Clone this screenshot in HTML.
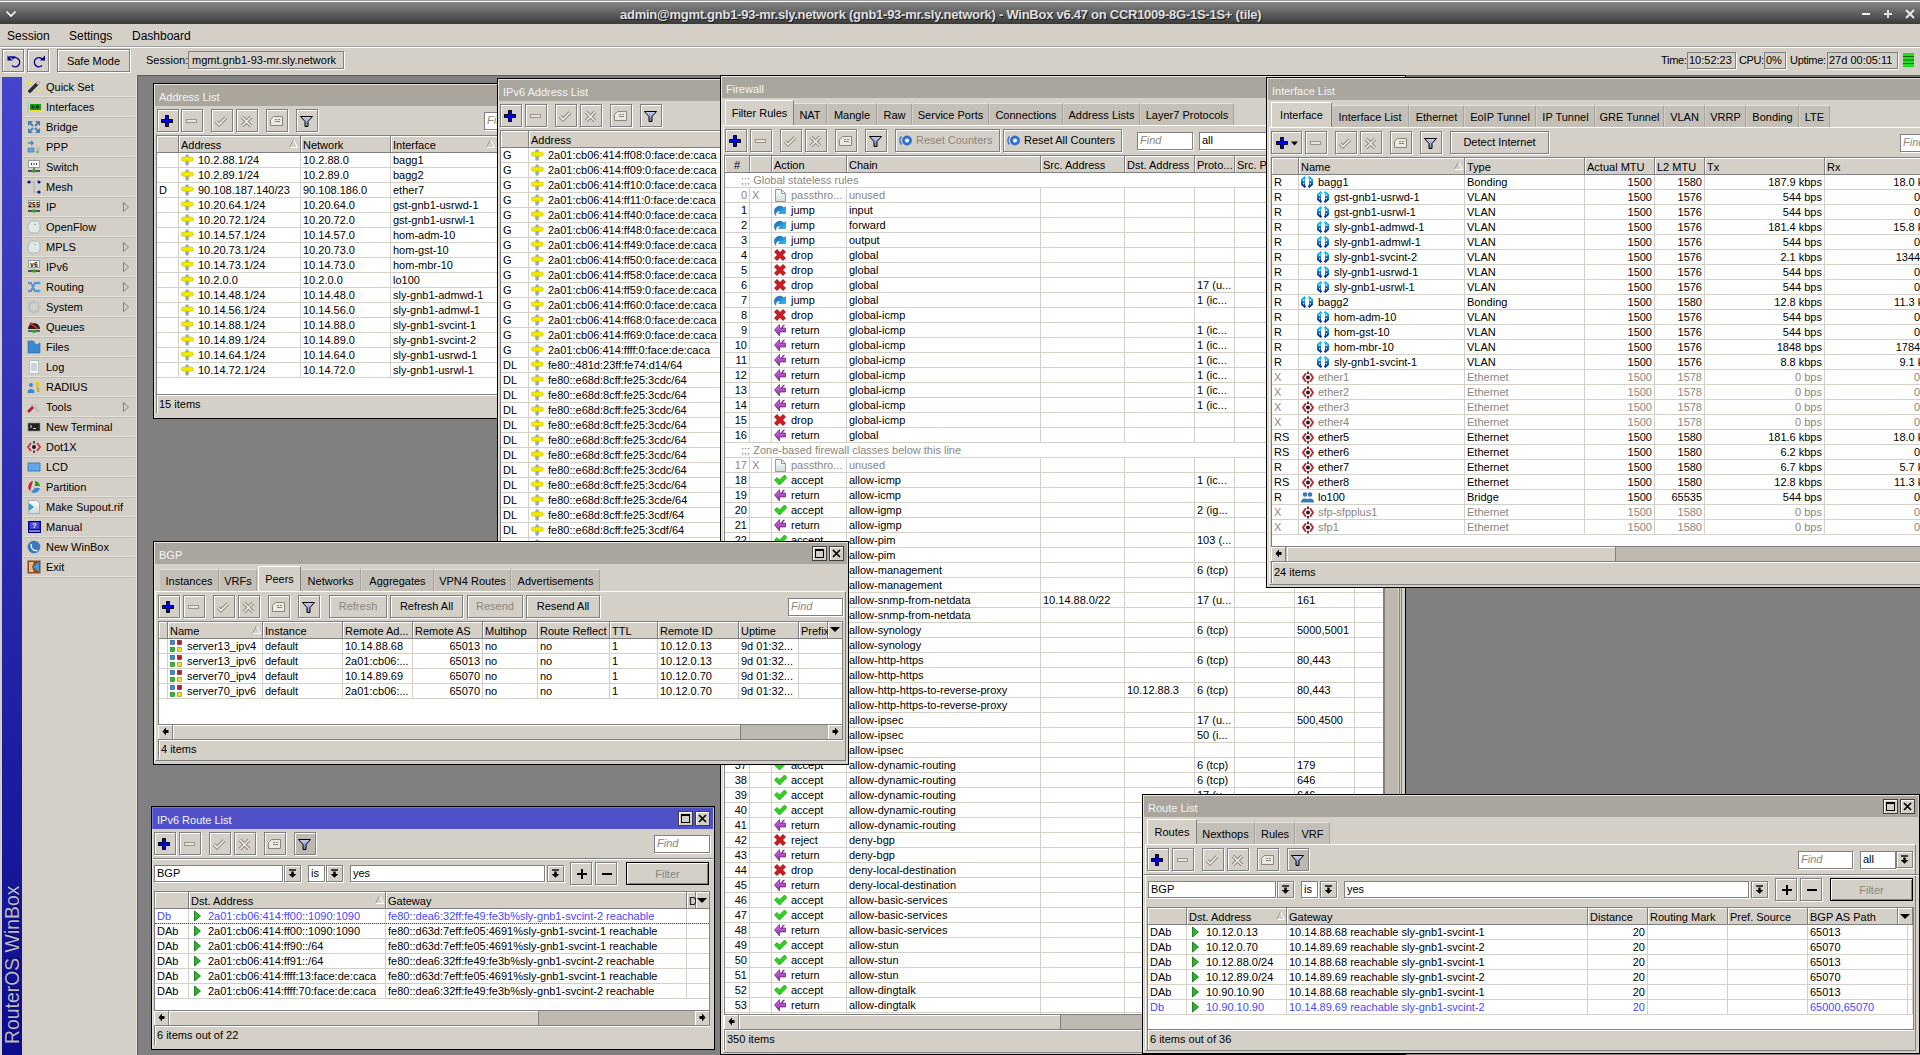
<!DOCTYPE html><html><head><meta charset="utf-8"><style>
html,body{margin:0;padding:0;width:1920px;height:1055px;overflow:hidden;background:#808080;font-family:"Liberation Sans",sans-serif;font-size:11px;color:#000}
div{position:absolute;box-sizing:border-box}
.t{white-space:nowrap;line-height:15px}
.win{background:#d4d0c8;border:1px solid #000;overflow:hidden;box-shadow:inset 1px 1px 0 #e8e4dc}
.lv{background:#fff;overflow:hidden;border-left:1px solid #808080;border-top:1px solid #808080;border-right:1px solid #808080}
</style></head><body><svg width="0" height="0" style="position:absolute"><defs>
<linearGradient id="gBond" x1="0" y1="0" x2="0" y2="1"><stop offset="0" stop-color="#20c8ff"/><stop offset="1" stop-color="#002a90"/></linearGradient>
<linearGradient id="gJump" x1="0" y1="0" x2="1" y2="1"><stop offset="0" stop-color="#1a60b0"/><stop offset="1" stop-color="#30c8ff"/></linearGradient>
<linearGradient id="gRet" x1="0" y1="0" x2="0" y2="1"><stop offset="0" stop-color="#e070e8"/><stop offset="1" stop-color="#8030a0"/></linearGradient>
<linearGradient id="gPage" x1="0" y1="0" x2="0" y2="1"><stop offset="0" stop-color="#ffffff"/><stop offset="1" stop-color="#d0d8d8"/></linearGradient>
<linearGradient id="gFunnel" x1="0" y1="0" x2="0" y2="1"><stop offset="0" stop-color="#c8d0f0"/><stop offset="1" stop-color="#7080b0"/></linearGradient>
</defs></svg><div style="left:0px;top:0px;width:1920px;height:24px;background:linear-gradient(#8a8a8a,#3a3a3a);border-top:1px solid #9a9a9a;box-shadow:inset 0 1px 0 #fff"></div>
<svg style="position:absolute;left:5px;top:9px" width="12" height="10" viewBox="0 0 12 10"><path d="M1.5 2.5l4.5 4.5 4.5-4.5" stroke="#fff" stroke-width="1.6" fill="none"/></svg>
<div class="t" style="left:620px;top:7px;font-size:13px;font-weight:bold;color:#e0e0e0;text-shadow:1px 1px 0 #1a1a1a;letter-spacing:-0.26px">admin@mgmt.gnb1-93-mr.sly.network (gnb1-93-mr.sly.network) - WinBox v6.47 on CCR1009-8G-1S-1S+ (tile)</div>
<svg style="position:absolute;left:1860px;top:8px" width="60" height="12" viewBox="0 0 60 12"><path d="M2 6h8" stroke="#f0f0f0" stroke-width="2"/><path d="M24 6h8M28 2v8" stroke="#e0e0e0" stroke-width="2"/><path d="M46 2l8 8M54 2l-8 8" stroke="#e8e8e8" stroke-width="2"/></svg>
<div style="left:0px;top:24px;width:1920px;height:23px;background:#d4d0c8;border-bottom:1px solid #a0a0a0;box-shadow:0 1px 0 #fff"></div>
<div class="t" style="left:7px;top:29px;font-size:12px">Session</div>
<div class="t" style="left:69px;top:29px;font-size:12px">Settings</div>
<div class="t" style="left:132px;top:29px;font-size:12px">Dashboard</div>
<div style="left:0px;top:48px;width:1920px;height:27px;background:#d4d0c8"></div>
<div style="left:2px;top:49px;width:22px;height:23px;border:1px solid #808080;box-shadow:inset 1px 1px 0 #fff,1px 1px 0 #fff;background:#d4d0c8;"><svg style="position:absolute;left:3px;top:4px" width="16" height="14" viewBox="0 0 16 14"><path d="M3 3l5 0-2 2a4.5 4.5 0 1 1 0 6.5" stroke="#000090" stroke-width="1.4" fill="none"/><path d="M1.5 1.5v5h5z" fill="#000090"/></svg></div>
<div style="left:27px;top:49px;width:22px;height:23px;border:1px solid #808080;box-shadow:inset 1px 1px 0 #fff,1px 1px 0 #fff;background:#d4d0c8;"><svg style="position:absolute;left:3px;top:4px" width="16" height="14" viewBox="0 0 16 14"><path d="M11 5a4.5 4.5 0 1 0 0 6.5" stroke="#000090" stroke-width="1.4" fill="none"/><path d="M14 1.5v5h-5z" fill="#000090"/></svg></div>
<div style="left:57px;top:49px;width:73px;height:23px;border:1px solid #808080;box-shadow:inset 1px 1px 0 #fff,1px 1px 0 #fff;background:#d4d0c8;"><div class="t" style="left:0px;top:4px;width:71px;text-align:center">Safe Mode</div></div>
<div class="t" style="left:146px;top:53px;">Session:</div>
<div style="left:188px;top:51px;width:156px;height:18px;border:1px solid #808080;box-shadow:1px 1px 0 #fff"><div class="t" style="left:3px;top:1px;">mgmt.gnb1-93-mr.sly.network</div></div>
<div class="t" style="left:1661px;top:53px;letter-spacing:-0.3px">Time:</div>
<div style="left:1687px;top:52px;width:49px;height:17px;border:1px solid #808080;box-shadow:1px 1px 0 #fff"><div class="t" style="left:1px;top:0px;">10:52:23</div></div>
<div class="t" style="left:1739px;top:53px;letter-spacing:-0.4px">CPU:</div>
<div style="left:1764px;top:52px;width:22px;height:17px;border:1px solid #808080;box-shadow:1px 1px 0 #fff"><div class="t" style="left:1px;top:0px;">0%</div></div>
<div class="t" style="left:1790px;top:53px;letter-spacing:-0.3px">Uptime:</div>
<div style="left:1827px;top:52px;width:71px;height:17px;border:1px solid #808080;box-shadow:1px 1px 0 #fff"><div class="t" style="left:1px;top:0px;">27d 00:05:11</div></div>
<svg style="position:absolute;left:1903px;top:53px" width="11" height="14" viewBox="0 0 11 14"><rect x="0" y="0" width="11" height="14" fill="#20e020"/><path d="M0 3.5h11M0 7h11M0 10.5h11" stroke="#106010" stroke-width="1"/></svg>
<div style="left:138px;top:75px;width:1782px;height:1px;background:#5a5a5a"></div>
<div style="left:0px;top:75px;width:138px;height:980px;background:#d4d0c8;border-right:1px solid #5a5a5a;box-shadow:inset -1px 0 0 #e4e0d8"></div>
<div style="left:2px;top:77px;width:20px;height:978px;background:linear-gradient(#4444cc,#0c0c8c)"></div>
<div class="t" style="left:-67px;top:955px;width:158px;height:20px;transform:rotate(-90deg);font-size:19.4px;line-height:20px;color:#b8b8c8;text-shadow:1px 1px 0 #000050;text-align:left">RouterOS WinBox</div>
<div style="left:24px;top:96px;width:111px;height:2px;border-top:1px solid #e4e0d8;border-bottom:1px solid #c0bcb4"></div>
<svg style="position:absolute;left:27px;top:80px" width="14" height="14" viewBox="0 0 14 14"><path d="M3 13l-2-2 8-8 2 2z" fill="#303030" stroke="#101010" stroke-width="0.6"/><path d="M9 3l2-2 2 2-2 2z" fill="#d0d0d0" stroke="#808080" stroke-width="0.5"/><path d="M3 0.5l0.7 1.6 1.6 0.7-1.6 0.7-0.7 1.6-0.7-1.6-1.6-0.7 1.6-0.7z" fill="#f0f020"/><circle cx="11" cy="10.5" r="1" fill="#f0f020"/></svg>
<div class="t" style="left:46px;top:80px;">Quick Set</div>
<div style="left:24px;top:116px;width:111px;height:2px;border-top:1px solid #e4e0d8;border-bottom:1px solid #c0bcb4"></div>
<svg style="position:absolute;left:27px;top:100px" width="14" height="14" viewBox="0 0 14 14"><rect x="0.5" y="1" width="1.2" height="12" fill="#a8c0c0"/><rect x="3" y="4" width="11" height="6" fill="#10a010"/><rect x="4.5" y="5.5" width="3" height="3" fill="#303040"/><rect x="9" y="5.5" width="3" height="3" fill="#303040"/><path d="M3 10.5h11" stroke="#e0e020" stroke-dasharray="1 1"/></svg>
<div class="t" style="left:46px;top:100px;">Interfaces</div>
<div style="left:24px;top:136px;width:111px;height:2px;border-top:1px solid #e4e0d8;border-bottom:1px solid #c0bcb4"></div>
<svg style="position:absolute;left:27px;top:120px" width="14" height="14" viewBox="0 0 14 14"><g fill="#4a80b0"><path d="M1 1h5l-5 5z M13 1v5l-5-5z M1 13v-5l5 5z M13 13h-5l5-5z"/></g><path d="M3 3l3 3M11 3l-3 3M3 11l3-3M11 11l-3-3" stroke="#4a80b0" stroke-width="2"/></svg>
<div class="t" style="left:46px;top:120px;">Bridge</div>
<div style="left:24px;top:156px;width:111px;height:2px;border-top:1px solid #e4e0d8;border-bottom:1px solid #c0bcb4"></div>
<svg style="position:absolute;left:27px;top:140px" width="14" height="14" viewBox="0 0 14 14"><path d="M1 3h5M4 1l2 2-2 2" stroke="#4a88c0" stroke-width="1.5" fill="none"/><rect x="1" y="8" width="6" height="4" fill="#60a8e0" stroke="#3070b0" stroke-width="0.6"/><path d="M9 8h4M9 10h4M9 12h3" stroke="#b0b0b0"/><path d="M9 12h3" stroke="#20b020"/></svg>
<div class="t" style="left:46px;top:140px;">PPP</div>
<div style="left:24px;top:176px;width:111px;height:2px;border-top:1px solid #e4e0d8;border-bottom:1px solid #c0bcb4"></div>
<svg style="position:absolute;left:27px;top:160px" width="14" height="14" viewBox="0 0 14 14"><rect x="1.5" y="0.5" width="11" height="7" fill="#f8f8f8" stroke="#90a0a0"/><path d="M4 4h1M6.5 4h1M9 4h1" stroke="#000" stroke-width="1.4"/><path d="M7 7.5v3" stroke="#202020"/><path d="M1 11h12" stroke="#202020" stroke-width="1.4"/><circle cx="7" cy="11" r="1.8" fill="#20b020"/></svg>
<div class="t" style="left:46px;top:160px;">Switch</div>
<div style="left:24px;top:196px;width:111px;height:2px;border-top:1px solid #e4e0d8;border-bottom:1px solid #c0bcb4"></div>
<svg style="position:absolute;left:27px;top:180px" width="14" height="14" viewBox="0 0 14 14"><path d="M2 2h5v10h5" stroke="#a8b8b8" stroke-width="1.5" fill="none"/><circle cx="2" cy="2" r="1.6" fill="#101090"/><circle cx="12" cy="2" r="1.6" fill="#101090"/><circle cx="12" cy="12" r="1.6" fill="#101090"/></svg>
<div class="t" style="left:46px;top:180px;">Mesh</div>
<div style="left:24px;top:216px;width:111px;height:2px;border-top:1px solid #e4e0d8;border-bottom:1px solid #c0bcb4"></div>
<svg style="position:absolute;left:27px;top:200px" width="14" height="14" viewBox="0 0 14 14"><rect x="1.5" y="0.5" width="11" height="7" fill="#f8f8f8" stroke="#90a0a0"/><text x="7" y="6.5" font-size="6.5" text-anchor="middle" font-family="Liberation Mono" font-weight="bold" fill="#000">255</text><path d="M1 11h12" stroke="#202020" stroke-width="1.4"/><circle cx="7" cy="11" r="1.8" fill="#20b020"/></svg>
<div class="t" style="left:46px;top:200px;">IP</div>
<svg style="position:absolute;left:122px;top:201px" width="8" height="12" viewBox="0 0 8 12"><path d="M1.5 1.5l5 4.5-5 4.5z" fill="none" stroke="#808080"/></svg>
<div style="left:24px;top:236px;width:111px;height:2px;border-top:1px solid #e4e0d8;border-bottom:1px solid #c0bcb4"></div>
<svg style="position:absolute;left:27px;top:220px" width="14" height="14" viewBox="0 0 14 14"><path d="M4 1h7l2 3v6l-3 3H4l-3-3V5z" fill="#e0e8e8" stroke="#a8b8b8"/><circle cx="8" cy="4.5" r="0.8" fill="#a0a0a0"/></svg>
<div class="t" style="left:46px;top:220px;">OpenFlow</div>
<div style="left:24px;top:256px;width:111px;height:2px;border-top:1px solid #e4e0d8;border-bottom:1px solid #c0bcb4"></div>
<svg style="position:absolute;left:27px;top:240px" width="14" height="14" viewBox="0 0 14 14"><path d="M4 1h7l2 3v6l-3 3H4l-3-3V5z" fill="#e0e8e8" stroke="#a8b8b8"/><circle cx="8" cy="4.5" r="0.8" fill="#a0a0a0"/></svg>
<div class="t" style="left:46px;top:240px;">MPLS</div>
<svg style="position:absolute;left:122px;top:241px" width="8" height="12" viewBox="0 0 8 12"><path d="M1.5 1.5l5 4.5-5 4.5z" fill="none" stroke="#808080"/></svg>
<div style="left:24px;top:276px;width:111px;height:2px;border-top:1px solid #e4e0d8;border-bottom:1px solid #c0bcb4"></div>
<svg style="position:absolute;left:27px;top:260px" width="14" height="14" viewBox="0 0 14 14"><rect x="1.5" y="0.5" width="11" height="7" fill="#f8f8f8" stroke="#90a0a0"/><text x="7" y="6.5" font-size="6.5" text-anchor="middle" font-family="Liberation Mono" font-weight="bold" fill="#000">v6</text><path d="M1 11h12" stroke="#202020" stroke-width="1.4"/><circle cx="7" cy="11" r="1.8" fill="#20b020"/></svg>
<div class="t" style="left:46px;top:260px;">IPv6</div>
<svg style="position:absolute;left:122px;top:261px" width="8" height="12" viewBox="0 0 8 12"><path d="M1.5 1.5l5 4.5-5 4.5z" fill="none" stroke="#808080"/></svg>
<div style="left:24px;top:296px;width:111px;height:2px;border-top:1px solid #e4e0d8;border-bottom:1px solid #c0bcb4"></div>
<svg style="position:absolute;left:27px;top:280px" width="14" height="14" viewBox="0 0 14 14"><path d="M1 11h3l4-8h4M1 3h3l4 8h4" stroke="#5a90d0" stroke-width="1.8" fill="none"/><path d="M11 1l3 2-3 2zM11 9l3 2-3 2z" fill="#40a8f0"/></svg>
<div class="t" style="left:46px;top:280px;">Routing</div>
<svg style="position:absolute;left:122px;top:281px" width="8" height="12" viewBox="0 0 8 12"><path d="M1.5 1.5l5 4.5-5 4.5z" fill="none" stroke="#808080"/></svg>
<div style="left:24px;top:316px;width:111px;height:2px;border-top:1px solid #e4e0d8;border-bottom:1px solid #c0bcb4"></div>
<svg style="position:absolute;left:27px;top:300px" width="14" height="14" viewBox="0 0 14 14"><circle cx="7" cy="7" r="5" fill="none" stroke="#b8c4c4" stroke-width="2.5"/><path d="M7 0v3M7 11v3M0 7h3M11 7h3M2 2l2 2M10 10l2 2M12 2l-2 2M2 12l2-2" stroke="#b8c4c4" stroke-width="2"/></svg>
<div class="t" style="left:46px;top:300px;">System</div>
<svg style="position:absolute;left:122px;top:301px" width="8" height="12" viewBox="0 0 8 12"><path d="M1.5 1.5l5 4.5-5 4.5z" fill="none" stroke="#808080"/></svg>
<div style="left:24px;top:336px;width:111px;height:2px;border-top:1px solid #e4e0d8;border-bottom:1px solid #c0bcb4"></div>
<svg style="position:absolute;left:27px;top:320px" width="14" height="14" viewBox="0 0 14 14"><path d="M1 9a6 6 0 0 1 12 0z" fill="#202020"/><path d="M3 3l8 6" stroke="#d02020" stroke-width="2"/><path d="M1 11h12" stroke="#202020" stroke-width="1.2"/><circle cx="7" cy="11.5" r="1.8" fill="#20b020"/></svg>
<div class="t" style="left:46px;top:320px;">Queues</div>
<div style="left:24px;top:356px;width:111px;height:2px;border-top:1px solid #e4e0d8;border-bottom:1px solid #c0bcb4"></div>
<svg style="position:absolute;left:27px;top:340px" width="14" height="14" viewBox="0 0 14 14"><path d="M1 1h5l2 2h5v10H1z" fill="#3a88d0" stroke="#2a68a8" stroke-width="0.6"/><path d="M8 3h4" stroke="#fff"/></svg>
<div class="t" style="left:46px;top:340px;">Files</div>
<div style="left:24px;top:376px;width:111px;height:2px;border-top:1px solid #e4e0d8;border-bottom:1px solid #c0bcb4"></div>
<svg style="position:absolute;left:27px;top:360px" width="14" height="14" viewBox="0 0 14 14"><rect x="2.5" y="0.5" width="9" height="13" fill="#f4f8f8" stroke="#b0c0c0"/><path d="M4 4h6M4 6h6M4 8h6M4 10h6" stroke="#a0b0b0"/></svg>
<div class="t" style="left:46px;top:360px;">Log</div>
<div style="left:24px;top:396px;width:111px;height:2px;border-top:1px solid #e4e0d8;border-bottom:1px solid #c0bcb4"></div>
<svg style="position:absolute;left:27px;top:380px" width="14" height="14" viewBox="0 0 14 14"><circle cx="4" cy="5" r="2" fill="#3a88d0"/><path d="M0.5 13a3.5 4 0 0 1 7 0z" fill="#3a88d0"/><circle cx="10.5" cy="4" r="2.5" fill="#e8d020"/><path d="M10.5 6v6M10.5 9h2M10.5 11h2" stroke="#c8b010" stroke-width="1.3"/></svg>
<div class="t" style="left:46px;top:380px;">RADIUS</div>
<div style="left:24px;top:416px;width:111px;height:2px;border-top:1px solid #e4e0d8;border-bottom:1px solid #c0bcb4"></div>
<svg style="position:absolute;left:27px;top:400px" width="14" height="14" viewBox="0 0 14 14"><path d="M2 12l8-8" stroke="#c0c8c8" stroke-width="2"/><path d="M12 12l-8-8" stroke="#b8c0c0" stroke-width="2"/><path d="M1 12l5-5" stroke="#c01830" stroke-width="2.6"/></svg>
<div class="t" style="left:46px;top:400px;">Tools</div>
<svg style="position:absolute;left:122px;top:401px" width="8" height="12" viewBox="0 0 8 12"><path d="M1.5 1.5l5 4.5-5 4.5z" fill="none" stroke="#808080"/></svg>
<div style="left:24px;top:436px;width:111px;height:2px;border-top:1px solid #e4e0d8;border-bottom:1px solid #c0bcb4"></div>
<svg style="position:absolute;left:27px;top:420px" width="14" height="14" viewBox="0 0 14 14"><rect x="1" y="3" width="12" height="8" fill="#202020" stroke="#909090" stroke-width="0.6"/><path d="M3 5l2 1.5-2 1.5M6 8.5h3" stroke="#fff" stroke-width="0.8" fill="none"/></svg>
<div class="t" style="left:46px;top:420px;">New Terminal</div>
<div style="left:24px;top:456px;width:111px;height:2px;border-top:1px solid #e4e0d8;border-bottom:1px solid #c0bcb4"></div>
<svg style="position:absolute;left:27px;top:440px" width="14" height="14" viewBox="0 0 14 14"><path d="M4 3l-3 4 3 4M10 3l3 4-3 4" stroke="#d03040" stroke-width="1.8" fill="none"/><circle cx="7" cy="7" r="2" fill="#202020"/><path d="M7 1v2.5M7 10.5v2.5" stroke="#202020" stroke-width="1.5"/></svg>
<div class="t" style="left:46px;top:440px;">Dot1X</div>
<div style="left:24px;top:476px;width:111px;height:2px;border-top:1px solid #e4e0d8;border-bottom:1px solid #c0bcb4"></div>
<svg style="position:absolute;left:27px;top:460px" width="14" height="14" viewBox="0 0 14 14"><rect x="1" y="3" width="12" height="8" fill="#60a8e8" stroke="#3070b0" stroke-width="0.8"/></svg>
<div class="t" style="left:46px;top:460px;">LCD</div>
<div style="left:24px;top:496px;width:111px;height:2px;border-top:1px solid #e4e0d8;border-bottom:1px solid #c0bcb4"></div>
<svg style="position:absolute;left:27px;top:480px" width="14" height="14" viewBox="0 0 14 14"><path d="M6 1a6 6 0 0 0-3 10z" fill="#d02030"/><path d="M8 1a6 6 0 0 1 5 5H8z" fill="#20a020"/><path d="M13 8a6 6 0 0 1-9 4l4-4z" fill="#3a88d0"/></svg>
<div class="t" style="left:46px;top:480px;">Partition</div>
<div style="left:24px;top:516px;width:111px;height:2px;border-top:1px solid #e4e0d8;border-bottom:1px solid #c0bcb4"></div>
<svg style="position:absolute;left:27px;top:500px" width="14" height="14" viewBox="0 0 14 14"><path d="M1.5 0.5h8l3 3v10h-11z" fill="url(#gPage)" stroke="#a0b0b0"/><path d="M2 3l5 4-5 4z" fill="#30a0e0"/></svg>
<div class="t" style="left:46px;top:500px;">Make Supout.rif</div>
<div style="left:24px;top:536px;width:111px;height:2px;border-top:1px solid #e4e0d8;border-bottom:1px solid #c0bcb4"></div>
<svg style="position:absolute;left:27px;top:520px" width="14" height="14" viewBox="0 0 14 14"><rect x="1" y="1" width="13" height="12" fill="#000090"/><rect x="2.5" y="2" width="10" height="7" fill="#4848d0"/><text x="7.5" y="8" font-size="7" text-anchor="middle" font-family="Liberation Sans" font-weight="bold" fill="#fff">?</text><path d="M2 11h11" stroke="#fff"/></svg>
<div class="t" style="left:46px;top:520px;">Manual</div>
<div style="left:24px;top:556px;width:111px;height:2px;border-top:1px solid #e4e0d8;border-bottom:1px solid #c0bcb4"></div>
<svg style="position:absolute;left:27px;top:540px" width="14" height="14" viewBox="0 0 14 14"><circle cx="7" cy="7" r="6.3" fill="#3a78c0"/><path d="M4.5 4a5 5 0 0 0 6 6.5" stroke="#fff" stroke-width="1.2" fill="none"/></svg>
<div class="t" style="left:46px;top:540px;">New WinBox</div>
<div style="left:24px;top:576px;width:111px;height:2px;border-top:1px solid #e4e0d8;border-bottom:1px solid #c0bcb4"></div>
<svg style="position:absolute;left:27px;top:560px" width="14" height="14" viewBox="0 0 14 14"><rect x="0.5" y="0.5" width="13" height="13" fill="#8a4a20"/><path d="M2 2h5L5 7l2 5H2z" fill="#e8b890"/><path d="M12 2v10L6 7z" fill="#30a0e8"/></svg>
<div class="t" style="left:46px;top:560px;">Exit</div>
<div class="win" style="left:153px;top:83px;width:370px;height:336px"><div style="left:1px;top:1px;width:366px;height:21px;background:#aaa69e"><div class="t" style="left:4px;top:5px;color:#f4f4f4">Address List</div></div><div style="left:3px;top:25px;width:22px;height:23px;border:1px solid #808080;box-shadow:inset 1px 1px 0 #fff,1px 1px 0 #fff;background:#d4d0c8;"><svg style="position:absolute;left:3px;top:5px" width="13" height="13" viewBox="0 0 13 13"><path d="M4.5 0.5h3v4h4v3h-4v4h-3v-4h-4v-3h4z" fill="#0000ff" stroke="#000" stroke-width="1"/></svg></div><div style="left:27px;top:25px;width:22px;height:23px;border:1px solid #808080;box-shadow:inset 1px 1px 0 #fff,1px 1px 0 #fff;background:#d4d0c8;"><svg style="position:absolute;left:3px;top:5px" width="13" height="13" viewBox="0 0 13 13"><rect x="1.5" y="4.5" width="10" height="3" fill="#e8e4dc" stroke="#9a968e"/></svg></div><div style="left:57px;top:25px;width:22px;height:23px;border:1px solid #808080;box-shadow:inset 1px 1px 0 #fff,1px 1px 0 #fff;background:#d4d0c8;"><svg style="position:absolute;left:3px;top:5px" width="13" height="13" viewBox="0 0 13 13"><path d="M1 6.5l3 3 7-7" fill="none" stroke="#8a867e" stroke-width="3.6"/><path d="M1 6.5l3 3 7-7" fill="none" stroke="#f0ece4" stroke-width="1.6"/></svg></div><div style="left:82px;top:25px;width:22px;height:23px;border:1px solid #808080;box-shadow:inset 1px 1px 0 #fff,1px 1px 0 #fff;background:#d4d0c8;"><svg style="position:absolute;left:3px;top:5px" width="13" height="13" viewBox="0 0 13 13"><path d="M2 2l9 9M11 2l-9 9" fill="none" stroke="#8a867e" stroke-width="3.6"/><path d="M2 2l9 9M11 2l-9 9" fill="none" stroke="#f0ece4" stroke-width="1.6"/></svg></div><div style="left:112px;top:25px;width:22px;height:23px;border:1px solid #808080;box-shadow:inset 1px 1px 0 #fff,1px 1px 0 #fff;background:#d4d0c8;"><svg style="position:absolute;left:3px;top:5px" width="13" height="13" viewBox="0 0 13 13"><path d="M0.5 4.5l3-3h9v9h-12z" fill="#ece8e0" stroke="#8a867e"/><path d="M5 4.5h2M8 4.5h2M5 6.5h5" stroke="#8a867e"/></svg></div><div style="left:142px;top:25px;width:22px;height:23px;border:1px solid #808080;box-shadow:inset 1px 1px 0 #fff,1px 1px 0 #fff;background:#d4d0c8;"><svg style="position:absolute;left:3px;top:5px" width="13" height="13" viewBox="0 0 13 13"><path d="M0.5 1.5h12l-4.5 5v5h-3v-5z" fill="url(#gFunnel)" stroke="#000" stroke-width="1"/></svg></div><div style="left:330px;top:28px;width:80px;height:18px;background:#fff;border:1px solid #808080;box-shadow:1px 1px 0 #fff"><div class="t" style="left:2px;top:0px;font-style:italic;color:#8a867e;">Find</div></div><div class="lv" style="left:2px;top:51px;width:360px;height:259px"><div style="left:0px;top:0px;width:22px;height:17px;background:#d4d0c8;border-right:1px solid #808080;border-bottom:1px solid #808080;box-shadow:inset 1px 1px 0 #fff"><div class="t" style="left:2px;top:2px;width:17px;text-align:left"></div></div><div style="left:22px;top:0px;width:122px;height:17px;background:#d4d0c8;border-right:1px solid #808080;border-bottom:1px solid #808080;box-shadow:inset 1px 1px 0 #fff"><div class="t" style="left:2px;top:2px;width:117px;text-align:left">Address</div></div><div style="left:144px;top:0px;width:90px;height:17px;background:#d4d0c8;border-right:1px solid #808080;border-bottom:1px solid #808080;box-shadow:inset 1px 1px 0 #fff"><div class="t" style="left:2px;top:2px;width:85px;text-align:left">Network</div></div><div style="left:234px;top:0px;width:120px;height:17px;background:#d4d0c8;border-right:1px solid #808080;border-bottom:1px solid #808080;box-shadow:inset 1px 1px 0 #fff"><div class="t" style="left:2px;top:2px;width:115px;text-align:left">Interface</div></div><div style="left:354px;top:0px;width:6px;height:17px;background:#d4d0c8;border-bottom:1px solid #808080;box-shadow:inset 1px 1px 0 #fff"></div><div style="left:0px;top:17px;width:360px;height:15px;border-bottom:1px solid #d4d0c8;"><div style="left:0px;top:0px;width:22px;height:15px;overflow:hidden;border-right:1px solid #d4d0c8;"></div><div style="left:22px;top:0px;width:122px;height:15px;overflow:hidden;border-right:1px solid #d4d0c8;"><svg style="position:absolute;left:2px;top:1px" width="13" height="13" viewBox="0 0 13 13"><rect x="4.3" y="0.3" width="3.6" height="11.5" rx="1.8" fill="#9aaab0"/><rect x="0.3" y="3" width="12" height="4.2" rx="2" fill="#f4ec00" stroke="#c8c000" stroke-width="0.6"/></svg><div class="t" style="left:19px;top:0px;color:#000">10.2.88.1/24</div></div><div style="left:144px;top:0px;width:90px;height:15px;overflow:hidden;border-right:1px solid #d4d0c8;"><div class="t" style="left:2px;top:0px;color:#000">10.2.88.0</div></div><div style="left:234px;top:0px;width:120px;height:15px;overflow:hidden;border-right:1px solid #d4d0c8;"><div class="t" style="left:2px;top:0px;color:#000">bagg1</div></div></div><div style="left:0px;top:32px;width:360px;height:15px;border-bottom:1px solid #d4d0c8;"><div style="left:0px;top:0px;width:22px;height:15px;overflow:hidden;border-right:1px solid #d4d0c8;"></div><div style="left:22px;top:0px;width:122px;height:15px;overflow:hidden;border-right:1px solid #d4d0c8;"><svg style="position:absolute;left:2px;top:1px" width="13" height="13" viewBox="0 0 13 13"><rect x="4.3" y="0.3" width="3.6" height="11.5" rx="1.8" fill="#9aaab0"/><rect x="0.3" y="3" width="12" height="4.2" rx="2" fill="#f4ec00" stroke="#c8c000" stroke-width="0.6"/></svg><div class="t" style="left:19px;top:0px;color:#000">10.2.89.1/24</div></div><div style="left:144px;top:0px;width:90px;height:15px;overflow:hidden;border-right:1px solid #d4d0c8;"><div class="t" style="left:2px;top:0px;color:#000">10.2.89.0</div></div><div style="left:234px;top:0px;width:120px;height:15px;overflow:hidden;border-right:1px solid #d4d0c8;"><div class="t" style="left:2px;top:0px;color:#000">bagg2</div></div></div><div style="left:0px;top:47px;width:360px;height:15px;border-bottom:1px solid #d4d0c8;"><div style="left:0px;top:0px;width:22px;height:15px;overflow:hidden;border-right:1px solid #d4d0c8;"><div class="t" style="left:2px;top:0px;color:#000">D</div></div><div style="left:22px;top:0px;width:122px;height:15px;overflow:hidden;border-right:1px solid #d4d0c8;"><svg style="position:absolute;left:2px;top:1px" width="13" height="13" viewBox="0 0 13 13"><rect x="4.3" y="0.3" width="3.6" height="11.5" rx="1.8" fill="#9aaab0"/><rect x="0.3" y="3" width="12" height="4.2" rx="2" fill="#f4ec00" stroke="#c8c000" stroke-width="0.6"/></svg><div class="t" style="left:19px;top:0px;color:#000">90.108.187.140/23</div></div><div style="left:144px;top:0px;width:90px;height:15px;overflow:hidden;border-right:1px solid #d4d0c8;"><div class="t" style="left:2px;top:0px;color:#000">90.108.186.0</div></div><div style="left:234px;top:0px;width:120px;height:15px;overflow:hidden;border-right:1px solid #d4d0c8;"><div class="t" style="left:2px;top:0px;color:#000">ether7</div></div></div><div style="left:0px;top:62px;width:360px;height:15px;border-bottom:1px solid #d4d0c8;"><div style="left:0px;top:0px;width:22px;height:15px;overflow:hidden;border-right:1px solid #d4d0c8;"></div><div style="left:22px;top:0px;width:122px;height:15px;overflow:hidden;border-right:1px solid #d4d0c8;"><svg style="position:absolute;left:2px;top:1px" width="13" height="13" viewBox="0 0 13 13"><rect x="4.3" y="0.3" width="3.6" height="11.5" rx="1.8" fill="#9aaab0"/><rect x="0.3" y="3" width="12" height="4.2" rx="2" fill="#f4ec00" stroke="#c8c000" stroke-width="0.6"/></svg><div class="t" style="left:19px;top:0px;color:#000">10.20.64.1/24</div></div><div style="left:144px;top:0px;width:90px;height:15px;overflow:hidden;border-right:1px solid #d4d0c8;"><div class="t" style="left:2px;top:0px;color:#000">10.20.64.0</div></div><div style="left:234px;top:0px;width:120px;height:15px;overflow:hidden;border-right:1px solid #d4d0c8;"><div class="t" style="left:2px;top:0px;color:#000">gst-gnb1-usrwd-1</div></div></div><div style="left:0px;top:77px;width:360px;height:15px;border-bottom:1px solid #d4d0c8;"><div style="left:0px;top:0px;width:22px;height:15px;overflow:hidden;border-right:1px solid #d4d0c8;"></div><div style="left:22px;top:0px;width:122px;height:15px;overflow:hidden;border-right:1px solid #d4d0c8;"><svg style="position:absolute;left:2px;top:1px" width="13" height="13" viewBox="0 0 13 13"><rect x="4.3" y="0.3" width="3.6" height="11.5" rx="1.8" fill="#9aaab0"/><rect x="0.3" y="3" width="12" height="4.2" rx="2" fill="#f4ec00" stroke="#c8c000" stroke-width="0.6"/></svg><div class="t" style="left:19px;top:0px;color:#000">10.20.72.1/24</div></div><div style="left:144px;top:0px;width:90px;height:15px;overflow:hidden;border-right:1px solid #d4d0c8;"><div class="t" style="left:2px;top:0px;color:#000">10.20.72.0</div></div><div style="left:234px;top:0px;width:120px;height:15px;overflow:hidden;border-right:1px solid #d4d0c8;"><div class="t" style="left:2px;top:0px;color:#000">gst-gnb1-usrwl-1</div></div></div><div style="left:0px;top:92px;width:360px;height:15px;border-bottom:1px solid #d4d0c8;"><div style="left:0px;top:0px;width:22px;height:15px;overflow:hidden;border-right:1px solid #d4d0c8;"></div><div style="left:22px;top:0px;width:122px;height:15px;overflow:hidden;border-right:1px solid #d4d0c8;"><svg style="position:absolute;left:2px;top:1px" width="13" height="13" viewBox="0 0 13 13"><rect x="4.3" y="0.3" width="3.6" height="11.5" rx="1.8" fill="#9aaab0"/><rect x="0.3" y="3" width="12" height="4.2" rx="2" fill="#f4ec00" stroke="#c8c000" stroke-width="0.6"/></svg><div class="t" style="left:19px;top:0px;color:#000">10.14.57.1/24</div></div><div style="left:144px;top:0px;width:90px;height:15px;overflow:hidden;border-right:1px solid #d4d0c8;"><div class="t" style="left:2px;top:0px;color:#000">10.14.57.0</div></div><div style="left:234px;top:0px;width:120px;height:15px;overflow:hidden;border-right:1px solid #d4d0c8;"><div class="t" style="left:2px;top:0px;color:#000">hom-adm-10</div></div></div><div style="left:0px;top:107px;width:360px;height:15px;border-bottom:1px solid #d4d0c8;"><div style="left:0px;top:0px;width:22px;height:15px;overflow:hidden;border-right:1px solid #d4d0c8;"></div><div style="left:22px;top:0px;width:122px;height:15px;overflow:hidden;border-right:1px solid #d4d0c8;"><svg style="position:absolute;left:2px;top:1px" width="13" height="13" viewBox="0 0 13 13"><rect x="4.3" y="0.3" width="3.6" height="11.5" rx="1.8" fill="#9aaab0"/><rect x="0.3" y="3" width="12" height="4.2" rx="2" fill="#f4ec00" stroke="#c8c000" stroke-width="0.6"/></svg><div class="t" style="left:19px;top:0px;color:#000">10.20.73.1/24</div></div><div style="left:144px;top:0px;width:90px;height:15px;overflow:hidden;border-right:1px solid #d4d0c8;"><div class="t" style="left:2px;top:0px;color:#000">10.20.73.0</div></div><div style="left:234px;top:0px;width:120px;height:15px;overflow:hidden;border-right:1px solid #d4d0c8;"><div class="t" style="left:2px;top:0px;color:#000">hom-gst-10</div></div></div><div style="left:0px;top:122px;width:360px;height:15px;border-bottom:1px solid #d4d0c8;"><div style="left:0px;top:0px;width:22px;height:15px;overflow:hidden;border-right:1px solid #d4d0c8;"></div><div style="left:22px;top:0px;width:122px;height:15px;overflow:hidden;border-right:1px solid #d4d0c8;"><svg style="position:absolute;left:2px;top:1px" width="13" height="13" viewBox="0 0 13 13"><rect x="4.3" y="0.3" width="3.6" height="11.5" rx="1.8" fill="#9aaab0"/><rect x="0.3" y="3" width="12" height="4.2" rx="2" fill="#f4ec00" stroke="#c8c000" stroke-width="0.6"/></svg><div class="t" style="left:19px;top:0px;color:#000">10.14.73.1/24</div></div><div style="left:144px;top:0px;width:90px;height:15px;overflow:hidden;border-right:1px solid #d4d0c8;"><div class="t" style="left:2px;top:0px;color:#000">10.14.73.0</div></div><div style="left:234px;top:0px;width:120px;height:15px;overflow:hidden;border-right:1px solid #d4d0c8;"><div class="t" style="left:2px;top:0px;color:#000">hom-mbr-10</div></div></div><div style="left:0px;top:137px;width:360px;height:15px;border-bottom:1px solid #d4d0c8;"><div style="left:0px;top:0px;width:22px;height:15px;overflow:hidden;border-right:1px solid #d4d0c8;"></div><div style="left:22px;top:0px;width:122px;height:15px;overflow:hidden;border-right:1px solid #d4d0c8;"><svg style="position:absolute;left:2px;top:1px" width="13" height="13" viewBox="0 0 13 13"><rect x="4.3" y="0.3" width="3.6" height="11.5" rx="1.8" fill="#9aaab0"/><rect x="0.3" y="3" width="12" height="4.2" rx="2" fill="#f4ec00" stroke="#c8c000" stroke-width="0.6"/></svg><div class="t" style="left:19px;top:0px;color:#000">10.2.0.0</div></div><div style="left:144px;top:0px;width:90px;height:15px;overflow:hidden;border-right:1px solid #d4d0c8;"><div class="t" style="left:2px;top:0px;color:#000">10.2.0.0</div></div><div style="left:234px;top:0px;width:120px;height:15px;overflow:hidden;border-right:1px solid #d4d0c8;"><div class="t" style="left:2px;top:0px;color:#000">lo100</div></div></div><div style="left:0px;top:152px;width:360px;height:15px;border-bottom:1px solid #d4d0c8;"><div style="left:0px;top:0px;width:22px;height:15px;overflow:hidden;border-right:1px solid #d4d0c8;"></div><div style="left:22px;top:0px;width:122px;height:15px;overflow:hidden;border-right:1px solid #d4d0c8;"><svg style="position:absolute;left:2px;top:1px" width="13" height="13" viewBox="0 0 13 13"><rect x="4.3" y="0.3" width="3.6" height="11.5" rx="1.8" fill="#9aaab0"/><rect x="0.3" y="3" width="12" height="4.2" rx="2" fill="#f4ec00" stroke="#c8c000" stroke-width="0.6"/></svg><div class="t" style="left:19px;top:0px;color:#000">10.14.48.1/24</div></div><div style="left:144px;top:0px;width:90px;height:15px;overflow:hidden;border-right:1px solid #d4d0c8;"><div class="t" style="left:2px;top:0px;color:#000">10.14.48.0</div></div><div style="left:234px;top:0px;width:120px;height:15px;overflow:hidden;border-right:1px solid #d4d0c8;"><div class="t" style="left:2px;top:0px;color:#000">sly-gnb1-admwd-1</div></div></div><div style="left:0px;top:167px;width:360px;height:15px;border-bottom:1px solid #d4d0c8;"><div style="left:0px;top:0px;width:22px;height:15px;overflow:hidden;border-right:1px solid #d4d0c8;"></div><div style="left:22px;top:0px;width:122px;height:15px;overflow:hidden;border-right:1px solid #d4d0c8;"><svg style="position:absolute;left:2px;top:1px" width="13" height="13" viewBox="0 0 13 13"><rect x="4.3" y="0.3" width="3.6" height="11.5" rx="1.8" fill="#9aaab0"/><rect x="0.3" y="3" width="12" height="4.2" rx="2" fill="#f4ec00" stroke="#c8c000" stroke-width="0.6"/></svg><div class="t" style="left:19px;top:0px;color:#000">10.14.56.1/24</div></div><div style="left:144px;top:0px;width:90px;height:15px;overflow:hidden;border-right:1px solid #d4d0c8;"><div class="t" style="left:2px;top:0px;color:#000">10.14.56.0</div></div><div style="left:234px;top:0px;width:120px;height:15px;overflow:hidden;border-right:1px solid #d4d0c8;"><div class="t" style="left:2px;top:0px;color:#000">sly-gnb1-admwl-1</div></div></div><div style="left:0px;top:182px;width:360px;height:15px;border-bottom:1px solid #d4d0c8;"><div style="left:0px;top:0px;width:22px;height:15px;overflow:hidden;border-right:1px solid #d4d0c8;"></div><div style="left:22px;top:0px;width:122px;height:15px;overflow:hidden;border-right:1px solid #d4d0c8;"><svg style="position:absolute;left:2px;top:1px" width="13" height="13" viewBox="0 0 13 13"><rect x="4.3" y="0.3" width="3.6" height="11.5" rx="1.8" fill="#9aaab0"/><rect x="0.3" y="3" width="12" height="4.2" rx="2" fill="#f4ec00" stroke="#c8c000" stroke-width="0.6"/></svg><div class="t" style="left:19px;top:0px;color:#000">10.14.88.1/24</div></div><div style="left:144px;top:0px;width:90px;height:15px;overflow:hidden;border-right:1px solid #d4d0c8;"><div class="t" style="left:2px;top:0px;color:#000">10.14.88.0</div></div><div style="left:234px;top:0px;width:120px;height:15px;overflow:hidden;border-right:1px solid #d4d0c8;"><div class="t" style="left:2px;top:0px;color:#000">sly-gnb1-svcint-1</div></div></div><div style="left:0px;top:197px;width:360px;height:15px;border-bottom:1px solid #d4d0c8;"><div style="left:0px;top:0px;width:22px;height:15px;overflow:hidden;border-right:1px solid #d4d0c8;"></div><div style="left:22px;top:0px;width:122px;height:15px;overflow:hidden;border-right:1px solid #d4d0c8;"><svg style="position:absolute;left:2px;top:1px" width="13" height="13" viewBox="0 0 13 13"><rect x="4.3" y="0.3" width="3.6" height="11.5" rx="1.8" fill="#9aaab0"/><rect x="0.3" y="3" width="12" height="4.2" rx="2" fill="#f4ec00" stroke="#c8c000" stroke-width="0.6"/></svg><div class="t" style="left:19px;top:0px;color:#000">10.14.89.1/24</div></div><div style="left:144px;top:0px;width:90px;height:15px;overflow:hidden;border-right:1px solid #d4d0c8;"><div class="t" style="left:2px;top:0px;color:#000">10.14.89.0</div></div><div style="left:234px;top:0px;width:120px;height:15px;overflow:hidden;border-right:1px solid #d4d0c8;"><div class="t" style="left:2px;top:0px;color:#000">sly-gnb1-svcint-2</div></div></div><div style="left:0px;top:212px;width:360px;height:15px;border-bottom:1px solid #d4d0c8;"><div style="left:0px;top:0px;width:22px;height:15px;overflow:hidden;border-right:1px solid #d4d0c8;"></div><div style="left:22px;top:0px;width:122px;height:15px;overflow:hidden;border-right:1px solid #d4d0c8;"><svg style="position:absolute;left:2px;top:1px" width="13" height="13" viewBox="0 0 13 13"><rect x="4.3" y="0.3" width="3.6" height="11.5" rx="1.8" fill="#9aaab0"/><rect x="0.3" y="3" width="12" height="4.2" rx="2" fill="#f4ec00" stroke="#c8c000" stroke-width="0.6"/></svg><div class="t" style="left:19px;top:0px;color:#000">10.14.64.1/24</div></div><div style="left:144px;top:0px;width:90px;height:15px;overflow:hidden;border-right:1px solid #d4d0c8;"><div class="t" style="left:2px;top:0px;color:#000">10.14.64.0</div></div><div style="left:234px;top:0px;width:120px;height:15px;overflow:hidden;border-right:1px solid #d4d0c8;"><div class="t" style="left:2px;top:0px;color:#000">sly-gnb1-usrwd-1</div></div></div><div style="left:0px;top:227px;width:360px;height:15px;border-bottom:1px solid #d4d0c8;"><div style="left:0px;top:0px;width:22px;height:15px;overflow:hidden;border-right:1px solid #d4d0c8;"></div><div style="left:22px;top:0px;width:122px;height:15px;overflow:hidden;border-right:1px solid #d4d0c8;"><svg style="position:absolute;left:2px;top:1px" width="13" height="13" viewBox="0 0 13 13"><rect x="4.3" y="0.3" width="3.6" height="11.5" rx="1.8" fill="#9aaab0"/><rect x="0.3" y="3" width="12" height="4.2" rx="2" fill="#f4ec00" stroke="#c8c000" stroke-width="0.6"/></svg><div class="t" style="left:19px;top:0px;color:#000">10.14.72.1/24</div></div><div style="left:144px;top:0px;width:90px;height:15px;overflow:hidden;border-right:1px solid #d4d0c8;"><div class="t" style="left:2px;top:0px;color:#000">10.14.72.0</div></div><div style="left:234px;top:0px;width:120px;height:15px;overflow:hidden;border-right:1px solid #d4d0c8;"><div class="t" style="left:2px;top:0px;color:#000">sly-gnb1-usrwl-1</div></div></div></div><svg style="position:absolute;left:135px;top:55px" width="10" height="10" viewBox="0 0 10 10"><path d="M4.5 0.5l4 8h-8z" fill="none" stroke="#fff"/><path d="M4.5 0.5l-4 8" stroke="#909090" fill="none"/></svg><svg style="position:absolute;left:332px;top:55px" width="10" height="10" viewBox="0 0 10 10"><path d="M4.5 0.5l4 8h-8z" fill="none" stroke="#fff"/><path d="M4.5 0.5l-4 8" stroke="#909090" fill="none"/></svg><div style="left:2px;top:310px;width:360px;height:19px;background:#d4d0c8;border-top:1px solid #808080;border-left:1px solid #808080;box-shadow:inset 1px 1px 0 #fff"><div class="t" style="left:2px;top:2px;">15 items</div></div></div>
<div class="win" style="left:497px;top:78px;width:260px;height:481px"><div style="left:1px;top:1px;width:256px;height:21px;background:#aaa69e"><div class="t" style="left:4px;top:5px;color:#f4f4f4">IPv6 Address List</div></div><div style="left:2px;top:25px;width:22px;height:23px;border:1px solid #808080;box-shadow:inset 1px 1px 0 #fff,1px 1px 0 #fff;background:#d4d0c8;"><svg style="position:absolute;left:3px;top:5px" width="13" height="13" viewBox="0 0 13 13"><path d="M4.5 0.5h3v4h4v3h-4v4h-3v-4h-4v-3h4z" fill="#0000ff" stroke="#000" stroke-width="1"/></svg></div><div style="left:27px;top:25px;width:22px;height:23px;border:1px solid #808080;box-shadow:inset 1px 1px 0 #fff,1px 1px 0 #fff;background:#d4d0c8;"><svg style="position:absolute;left:3px;top:5px" width="13" height="13" viewBox="0 0 13 13"><rect x="1.5" y="4.5" width="10" height="3" fill="#e8e4dc" stroke="#9a968e"/></svg></div><div style="left:57px;top:25px;width:22px;height:23px;border:1px solid #808080;box-shadow:inset 1px 1px 0 #fff,1px 1px 0 #fff;background:#d4d0c8;"><svg style="position:absolute;left:3px;top:5px" width="13" height="13" viewBox="0 0 13 13"><path d="M1 6.5l3 3 7-7" fill="none" stroke="#8a867e" stroke-width="3.6"/><path d="M1 6.5l3 3 7-7" fill="none" stroke="#f0ece4" stroke-width="1.6"/></svg></div><div style="left:82px;top:25px;width:22px;height:23px;border:1px solid #808080;box-shadow:inset 1px 1px 0 #fff,1px 1px 0 #fff;background:#d4d0c8;"><svg style="position:absolute;left:3px;top:5px" width="13" height="13" viewBox="0 0 13 13"><path d="M2 2l9 9M11 2l-9 9" fill="none" stroke="#8a867e" stroke-width="3.6"/><path d="M2 2l9 9M11 2l-9 9" fill="none" stroke="#f0ece4" stroke-width="1.6"/></svg></div><div style="left:112px;top:25px;width:22px;height:23px;border:1px solid #808080;box-shadow:inset 1px 1px 0 #fff,1px 1px 0 #fff;background:#d4d0c8;"><svg style="position:absolute;left:3px;top:5px" width="13" height="13" viewBox="0 0 13 13"><path d="M0.5 4.5l3-3h9v9h-12z" fill="#ece8e0" stroke="#8a867e"/><path d="M5 4.5h2M8 4.5h2M5 6.5h5" stroke="#8a867e"/></svg></div><div style="left:142px;top:25px;width:22px;height:23px;border:1px solid #808080;box-shadow:inset 1px 1px 0 #fff,1px 1px 0 #fff;background:#d4d0c8;"><svg style="position:absolute;left:3px;top:5px" width="13" height="13" viewBox="0 0 13 13"><path d="M0.5 1.5h12l-4.5 5v5h-3v-5z" fill="url(#gFunnel)" stroke="#000" stroke-width="1"/></svg></div><div class="lv" style="left:2px;top:51px;width:300px;height:480px"><div style="left:0px;top:0px;width:28px;height:17px;background:#d4d0c8;border-right:1px solid #808080;border-bottom:1px solid #808080;box-shadow:inset 1px 1px 0 #fff"><div class="t" style="left:2px;top:2px;width:23px;text-align:left"></div></div><div style="left:28px;top:0px;width:260px;height:17px;background:#d4d0c8;border-right:1px solid #808080;border-bottom:1px solid #808080;box-shadow:inset 1px 1px 0 #fff"><div class="t" style="left:2px;top:2px;width:255px;text-align:left">Address</div></div><div style="left:288px;top:0px;width:12px;height:17px;background:#d4d0c8;border-bottom:1px solid #808080;box-shadow:inset 1px 1px 0 #fff"></div><div style="left:0px;top:17px;width:300px;height:15px;border-bottom:1px solid #d4d0c8;"><div style="left:0px;top:0px;width:28px;height:15px;overflow:hidden;border-right:1px solid #d4d0c8;"><div class="t" style="left:2px;top:0px;color:#000">G</div></div><div style="left:28px;top:0px;width:260px;height:15px;overflow:hidden;border-right:1px solid #d4d0c8;"><svg style="position:absolute;left:2px;top:1px" width="13" height="13" viewBox="0 0 13 13"><rect x="4.3" y="0.3" width="3.6" height="11.5" rx="1.8" fill="#9aaab0"/><rect x="0.3" y="3" width="12" height="4.2" rx="2" fill="#f4ec00" stroke="#c8c000" stroke-width="0.6"/></svg><div class="t" style="left:19px;top:0px;color:#000">2a01:cb06:414:ff08:0:face:de:caca</div></div></div><div style="left:0px;top:32px;width:300px;height:15px;border-bottom:1px solid #d4d0c8;"><div style="left:0px;top:0px;width:28px;height:15px;overflow:hidden;border-right:1px solid #d4d0c8;"><div class="t" style="left:2px;top:0px;color:#000">G</div></div><div style="left:28px;top:0px;width:260px;height:15px;overflow:hidden;border-right:1px solid #d4d0c8;"><svg style="position:absolute;left:2px;top:1px" width="13" height="13" viewBox="0 0 13 13"><rect x="4.3" y="0.3" width="3.6" height="11.5" rx="1.8" fill="#9aaab0"/><rect x="0.3" y="3" width="12" height="4.2" rx="2" fill="#f4ec00" stroke="#c8c000" stroke-width="0.6"/></svg><div class="t" style="left:19px;top:0px;color:#000">2a01:cb06:414:ff09:0:face:de:caca</div></div></div><div style="left:0px;top:47px;width:300px;height:15px;border-bottom:1px solid #d4d0c8;"><div style="left:0px;top:0px;width:28px;height:15px;overflow:hidden;border-right:1px solid #d4d0c8;"><div class="t" style="left:2px;top:0px;color:#000">G</div></div><div style="left:28px;top:0px;width:260px;height:15px;overflow:hidden;border-right:1px solid #d4d0c8;"><svg style="position:absolute;left:2px;top:1px" width="13" height="13" viewBox="0 0 13 13"><rect x="4.3" y="0.3" width="3.6" height="11.5" rx="1.8" fill="#9aaab0"/><rect x="0.3" y="3" width="12" height="4.2" rx="2" fill="#f4ec00" stroke="#c8c000" stroke-width="0.6"/></svg><div class="t" style="left:19px;top:0px;color:#000">2a01:cb06:414:ff10:0:face:de:caca</div></div></div><div style="left:0px;top:62px;width:300px;height:15px;border-bottom:1px solid #d4d0c8;"><div style="left:0px;top:0px;width:28px;height:15px;overflow:hidden;border-right:1px solid #d4d0c8;"><div class="t" style="left:2px;top:0px;color:#000">G</div></div><div style="left:28px;top:0px;width:260px;height:15px;overflow:hidden;border-right:1px solid #d4d0c8;"><svg style="position:absolute;left:2px;top:1px" width="13" height="13" viewBox="0 0 13 13"><rect x="4.3" y="0.3" width="3.6" height="11.5" rx="1.8" fill="#9aaab0"/><rect x="0.3" y="3" width="12" height="4.2" rx="2" fill="#f4ec00" stroke="#c8c000" stroke-width="0.6"/></svg><div class="t" style="left:19px;top:0px;color:#000">2a01:cb06:414:ff11:0:face:de:caca</div></div></div><div style="left:0px;top:77px;width:300px;height:15px;border-bottom:1px solid #d4d0c8;"><div style="left:0px;top:0px;width:28px;height:15px;overflow:hidden;border-right:1px solid #d4d0c8;"><div class="t" style="left:2px;top:0px;color:#000">G</div></div><div style="left:28px;top:0px;width:260px;height:15px;overflow:hidden;border-right:1px solid #d4d0c8;"><svg style="position:absolute;left:2px;top:1px" width="13" height="13" viewBox="0 0 13 13"><rect x="4.3" y="0.3" width="3.6" height="11.5" rx="1.8" fill="#9aaab0"/><rect x="0.3" y="3" width="12" height="4.2" rx="2" fill="#f4ec00" stroke="#c8c000" stroke-width="0.6"/></svg><div class="t" style="left:19px;top:0px;color:#000">2a01:cb06:414:ff40:0:face:de:caca</div></div></div><div style="left:0px;top:92px;width:300px;height:15px;border-bottom:1px solid #d4d0c8;"><div style="left:0px;top:0px;width:28px;height:15px;overflow:hidden;border-right:1px solid #d4d0c8;"><div class="t" style="left:2px;top:0px;color:#000">G</div></div><div style="left:28px;top:0px;width:260px;height:15px;overflow:hidden;border-right:1px solid #d4d0c8;"><svg style="position:absolute;left:2px;top:1px" width="13" height="13" viewBox="0 0 13 13"><rect x="4.3" y="0.3" width="3.6" height="11.5" rx="1.8" fill="#9aaab0"/><rect x="0.3" y="3" width="12" height="4.2" rx="2" fill="#f4ec00" stroke="#c8c000" stroke-width="0.6"/></svg><div class="t" style="left:19px;top:0px;color:#000">2a01:cb06:414:ff48:0:face:de:caca</div></div></div><div style="left:0px;top:107px;width:300px;height:15px;border-bottom:1px solid #d4d0c8;"><div style="left:0px;top:0px;width:28px;height:15px;overflow:hidden;border-right:1px solid #d4d0c8;"><div class="t" style="left:2px;top:0px;color:#000">G</div></div><div style="left:28px;top:0px;width:260px;height:15px;overflow:hidden;border-right:1px solid #d4d0c8;"><svg style="position:absolute;left:2px;top:1px" width="13" height="13" viewBox="0 0 13 13"><rect x="4.3" y="0.3" width="3.6" height="11.5" rx="1.8" fill="#9aaab0"/><rect x="0.3" y="3" width="12" height="4.2" rx="2" fill="#f4ec00" stroke="#c8c000" stroke-width="0.6"/></svg><div class="t" style="left:19px;top:0px;color:#000">2a01:cb06:414:ff49:0:face:de:caca</div></div></div><div style="left:0px;top:122px;width:300px;height:15px;border-bottom:1px solid #d4d0c8;"><div style="left:0px;top:0px;width:28px;height:15px;overflow:hidden;border-right:1px solid #d4d0c8;"><div class="t" style="left:2px;top:0px;color:#000">G</div></div><div style="left:28px;top:0px;width:260px;height:15px;overflow:hidden;border-right:1px solid #d4d0c8;"><svg style="position:absolute;left:2px;top:1px" width="13" height="13" viewBox="0 0 13 13"><rect x="4.3" y="0.3" width="3.6" height="11.5" rx="1.8" fill="#9aaab0"/><rect x="0.3" y="3" width="12" height="4.2" rx="2" fill="#f4ec00" stroke="#c8c000" stroke-width="0.6"/></svg><div class="t" style="left:19px;top:0px;color:#000">2a01:cb06:414:ff50:0:face:de:caca</div></div></div><div style="left:0px;top:137px;width:300px;height:15px;border-bottom:1px solid #d4d0c8;"><div style="left:0px;top:0px;width:28px;height:15px;overflow:hidden;border-right:1px solid #d4d0c8;"><div class="t" style="left:2px;top:0px;color:#000">G</div></div><div style="left:28px;top:0px;width:260px;height:15px;overflow:hidden;border-right:1px solid #d4d0c8;"><svg style="position:absolute;left:2px;top:1px" width="13" height="13" viewBox="0 0 13 13"><rect x="4.3" y="0.3" width="3.6" height="11.5" rx="1.8" fill="#9aaab0"/><rect x="0.3" y="3" width="12" height="4.2" rx="2" fill="#f4ec00" stroke="#c8c000" stroke-width="0.6"/></svg><div class="t" style="left:19px;top:0px;color:#000">2a01:cb06:414:ff58:0:face:de:caca</div></div></div><div style="left:0px;top:152px;width:300px;height:15px;border-bottom:1px solid #d4d0c8;"><div style="left:0px;top:0px;width:28px;height:15px;overflow:hidden;border-right:1px solid #d4d0c8;"><div class="t" style="left:2px;top:0px;color:#000">G</div></div><div style="left:28px;top:0px;width:260px;height:15px;overflow:hidden;border-right:1px solid #d4d0c8;"><svg style="position:absolute;left:2px;top:1px" width="13" height="13" viewBox="0 0 13 13"><rect x="4.3" y="0.3" width="3.6" height="11.5" rx="1.8" fill="#9aaab0"/><rect x="0.3" y="3" width="12" height="4.2" rx="2" fill="#f4ec00" stroke="#c8c000" stroke-width="0.6"/></svg><div class="t" style="left:19px;top:0px;color:#000">2a01:cb06:414:ff59:0:face:de:caca</div></div></div><div style="left:0px;top:167px;width:300px;height:15px;border-bottom:1px solid #d4d0c8;"><div style="left:0px;top:0px;width:28px;height:15px;overflow:hidden;border-right:1px solid #d4d0c8;"><div class="t" style="left:2px;top:0px;color:#000">G</div></div><div style="left:28px;top:0px;width:260px;height:15px;overflow:hidden;border-right:1px solid #d4d0c8;"><svg style="position:absolute;left:2px;top:1px" width="13" height="13" viewBox="0 0 13 13"><rect x="4.3" y="0.3" width="3.6" height="11.5" rx="1.8" fill="#9aaab0"/><rect x="0.3" y="3" width="12" height="4.2" rx="2" fill="#f4ec00" stroke="#c8c000" stroke-width="0.6"/></svg><div class="t" style="left:19px;top:0px;color:#000">2a01:cb06:414:ff60:0:face:de:caca</div></div></div><div style="left:0px;top:182px;width:300px;height:15px;border-bottom:1px solid #d4d0c8;"><div style="left:0px;top:0px;width:28px;height:15px;overflow:hidden;border-right:1px solid #d4d0c8;"><div class="t" style="left:2px;top:0px;color:#000">G</div></div><div style="left:28px;top:0px;width:260px;height:15px;overflow:hidden;border-right:1px solid #d4d0c8;"><svg style="position:absolute;left:2px;top:1px" width="13" height="13" viewBox="0 0 13 13"><rect x="4.3" y="0.3" width="3.6" height="11.5" rx="1.8" fill="#9aaab0"/><rect x="0.3" y="3" width="12" height="4.2" rx="2" fill="#f4ec00" stroke="#c8c000" stroke-width="0.6"/></svg><div class="t" style="left:19px;top:0px;color:#000">2a01:cb06:414:ff68:0:face:de:caca</div></div></div><div style="left:0px;top:197px;width:300px;height:15px;border-bottom:1px solid #d4d0c8;"><div style="left:0px;top:0px;width:28px;height:15px;overflow:hidden;border-right:1px solid #d4d0c8;"><div class="t" style="left:2px;top:0px;color:#000">G</div></div><div style="left:28px;top:0px;width:260px;height:15px;overflow:hidden;border-right:1px solid #d4d0c8;"><svg style="position:absolute;left:2px;top:1px" width="13" height="13" viewBox="0 0 13 13"><rect x="4.3" y="0.3" width="3.6" height="11.5" rx="1.8" fill="#9aaab0"/><rect x="0.3" y="3" width="12" height="4.2" rx="2" fill="#f4ec00" stroke="#c8c000" stroke-width="0.6"/></svg><div class="t" style="left:19px;top:0px;color:#000">2a01:cb06:414:ff69:0:face:de:caca</div></div></div><div style="left:0px;top:212px;width:300px;height:15px;border-bottom:1px solid #d4d0c8;"><div style="left:0px;top:0px;width:28px;height:15px;overflow:hidden;border-right:1px solid #d4d0c8;"><div class="t" style="left:2px;top:0px;color:#000">G</div></div><div style="left:28px;top:0px;width:260px;height:15px;overflow:hidden;border-right:1px solid #d4d0c8;"><svg style="position:absolute;left:2px;top:1px" width="13" height="13" viewBox="0 0 13 13"><rect x="4.3" y="0.3" width="3.6" height="11.5" rx="1.8" fill="#9aaab0"/><rect x="0.3" y="3" width="12" height="4.2" rx="2" fill="#f4ec00" stroke="#c8c000" stroke-width="0.6"/></svg><div class="t" style="left:19px;top:0px;color:#000">2a01:cb06:414:ffff:0:face:de:caca</div></div></div><div style="left:0px;top:227px;width:300px;height:15px;border-bottom:1px solid #d4d0c8;"><div style="left:0px;top:0px;width:28px;height:15px;overflow:hidden;border-right:1px solid #d4d0c8;"><div class="t" style="left:2px;top:0px;color:#000">DL</div></div><div style="left:28px;top:0px;width:260px;height:15px;overflow:hidden;border-right:1px solid #d4d0c8;"><svg style="position:absolute;left:2px;top:1px" width="13" height="13" viewBox="0 0 13 13"><rect x="4.3" y="0.3" width="3.6" height="11.5" rx="1.8" fill="#9aaab0"/><rect x="0.3" y="3" width="12" height="4.2" rx="2" fill="#f4ec00" stroke="#c8c000" stroke-width="0.6"/></svg><div class="t" style="left:19px;top:0px;color:#000">fe80::481d:23ff:fe74:d14/64</div></div></div><div style="left:0px;top:242px;width:300px;height:15px;border-bottom:1px solid #d4d0c8;"><div style="left:0px;top:0px;width:28px;height:15px;overflow:hidden;border-right:1px solid #d4d0c8;"><div class="t" style="left:2px;top:0px;color:#000">DL</div></div><div style="left:28px;top:0px;width:260px;height:15px;overflow:hidden;border-right:1px solid #d4d0c8;"><svg style="position:absolute;left:2px;top:1px" width="13" height="13" viewBox="0 0 13 13"><rect x="4.3" y="0.3" width="3.6" height="11.5" rx="1.8" fill="#9aaab0"/><rect x="0.3" y="3" width="12" height="4.2" rx="2" fill="#f4ec00" stroke="#c8c000" stroke-width="0.6"/></svg><div class="t" style="left:19px;top:0px;color:#000">fe80::e68d:8cff:fe25:3cdc/64</div></div></div><div style="left:0px;top:257px;width:300px;height:15px;border-bottom:1px solid #d4d0c8;"><div style="left:0px;top:0px;width:28px;height:15px;overflow:hidden;border-right:1px solid #d4d0c8;"><div class="t" style="left:2px;top:0px;color:#000">DL</div></div><div style="left:28px;top:0px;width:260px;height:15px;overflow:hidden;border-right:1px solid #d4d0c8;"><svg style="position:absolute;left:2px;top:1px" width="13" height="13" viewBox="0 0 13 13"><rect x="4.3" y="0.3" width="3.6" height="11.5" rx="1.8" fill="#9aaab0"/><rect x="0.3" y="3" width="12" height="4.2" rx="2" fill="#f4ec00" stroke="#c8c000" stroke-width="0.6"/></svg><div class="t" style="left:19px;top:0px;color:#000">fe80::e68d:8cff:fe25:3cdc/64</div></div></div><div style="left:0px;top:272px;width:300px;height:15px;border-bottom:1px solid #d4d0c8;"><div style="left:0px;top:0px;width:28px;height:15px;overflow:hidden;border-right:1px solid #d4d0c8;"><div class="t" style="left:2px;top:0px;color:#000">DL</div></div><div style="left:28px;top:0px;width:260px;height:15px;overflow:hidden;border-right:1px solid #d4d0c8;"><svg style="position:absolute;left:2px;top:1px" width="13" height="13" viewBox="0 0 13 13"><rect x="4.3" y="0.3" width="3.6" height="11.5" rx="1.8" fill="#9aaab0"/><rect x="0.3" y="3" width="12" height="4.2" rx="2" fill="#f4ec00" stroke="#c8c000" stroke-width="0.6"/></svg><div class="t" style="left:19px;top:0px;color:#000">fe80::e68d:8cff:fe25:3cdc/64</div></div></div><div style="left:0px;top:287px;width:300px;height:15px;border-bottom:1px solid #d4d0c8;"><div style="left:0px;top:0px;width:28px;height:15px;overflow:hidden;border-right:1px solid #d4d0c8;"><div class="t" style="left:2px;top:0px;color:#000">DL</div></div><div style="left:28px;top:0px;width:260px;height:15px;overflow:hidden;border-right:1px solid #d4d0c8;"><svg style="position:absolute;left:2px;top:1px" width="13" height="13" viewBox="0 0 13 13"><rect x="4.3" y="0.3" width="3.6" height="11.5" rx="1.8" fill="#9aaab0"/><rect x="0.3" y="3" width="12" height="4.2" rx="2" fill="#f4ec00" stroke="#c8c000" stroke-width="0.6"/></svg><div class="t" style="left:19px;top:0px;color:#000">fe80::e68d:8cff:fe25:3cdc/64</div></div></div><div style="left:0px;top:302px;width:300px;height:15px;border-bottom:1px solid #d4d0c8;"><div style="left:0px;top:0px;width:28px;height:15px;overflow:hidden;border-right:1px solid #d4d0c8;"><div class="t" style="left:2px;top:0px;color:#000">DL</div></div><div style="left:28px;top:0px;width:260px;height:15px;overflow:hidden;border-right:1px solid #d4d0c8;"><svg style="position:absolute;left:2px;top:1px" width="13" height="13" viewBox="0 0 13 13"><rect x="4.3" y="0.3" width="3.6" height="11.5" rx="1.8" fill="#9aaab0"/><rect x="0.3" y="3" width="12" height="4.2" rx="2" fill="#f4ec00" stroke="#c8c000" stroke-width="0.6"/></svg><div class="t" style="left:19px;top:0px;color:#000">fe80::e68d:8cff:fe25:3cdc/64</div></div></div><div style="left:0px;top:317px;width:300px;height:15px;border-bottom:1px solid #d4d0c8;"><div style="left:0px;top:0px;width:28px;height:15px;overflow:hidden;border-right:1px solid #d4d0c8;"><div class="t" style="left:2px;top:0px;color:#000">DL</div></div><div style="left:28px;top:0px;width:260px;height:15px;overflow:hidden;border-right:1px solid #d4d0c8;"><svg style="position:absolute;left:2px;top:1px" width="13" height="13" viewBox="0 0 13 13"><rect x="4.3" y="0.3" width="3.6" height="11.5" rx="1.8" fill="#9aaab0"/><rect x="0.3" y="3" width="12" height="4.2" rx="2" fill="#f4ec00" stroke="#c8c000" stroke-width="0.6"/></svg><div class="t" style="left:19px;top:0px;color:#000">fe80::e68d:8cff:fe25:3cdc/64</div></div></div><div style="left:0px;top:332px;width:300px;height:15px;border-bottom:1px solid #d4d0c8;"><div style="left:0px;top:0px;width:28px;height:15px;overflow:hidden;border-right:1px solid #d4d0c8;"><div class="t" style="left:2px;top:0px;color:#000">DL</div></div><div style="left:28px;top:0px;width:260px;height:15px;overflow:hidden;border-right:1px solid #d4d0c8;"><svg style="position:absolute;left:2px;top:1px" width="13" height="13" viewBox="0 0 13 13"><rect x="4.3" y="0.3" width="3.6" height="11.5" rx="1.8" fill="#9aaab0"/><rect x="0.3" y="3" width="12" height="4.2" rx="2" fill="#f4ec00" stroke="#c8c000" stroke-width="0.6"/></svg><div class="t" style="left:19px;top:0px;color:#000">fe80::e68d:8cff:fe25:3cdc/64</div></div></div><div style="left:0px;top:347px;width:300px;height:15px;border-bottom:1px solid #d4d0c8;"><div style="left:0px;top:0px;width:28px;height:15px;overflow:hidden;border-right:1px solid #d4d0c8;"><div class="t" style="left:2px;top:0px;color:#000">DL</div></div><div style="left:28px;top:0px;width:260px;height:15px;overflow:hidden;border-right:1px solid #d4d0c8;"><svg style="position:absolute;left:2px;top:1px" width="13" height="13" viewBox="0 0 13 13"><rect x="4.3" y="0.3" width="3.6" height="11.5" rx="1.8" fill="#9aaab0"/><rect x="0.3" y="3" width="12" height="4.2" rx="2" fill="#f4ec00" stroke="#c8c000" stroke-width="0.6"/></svg><div class="t" style="left:19px;top:0px;color:#000">fe80::e68d:8cff:fe25:3cdc/64</div></div></div><div style="left:0px;top:362px;width:300px;height:15px;border-bottom:1px solid #d4d0c8;"><div style="left:0px;top:0px;width:28px;height:15px;overflow:hidden;border-right:1px solid #d4d0c8;"><div class="t" style="left:2px;top:0px;color:#000">DL</div></div><div style="left:28px;top:0px;width:260px;height:15px;overflow:hidden;border-right:1px solid #d4d0c8;"><svg style="position:absolute;left:2px;top:1px" width="13" height="13" viewBox="0 0 13 13"><rect x="4.3" y="0.3" width="3.6" height="11.5" rx="1.8" fill="#9aaab0"/><rect x="0.3" y="3" width="12" height="4.2" rx="2" fill="#f4ec00" stroke="#c8c000" stroke-width="0.6"/></svg><div class="t" style="left:19px;top:0px;color:#000">fe80::e68d:8cff:fe25:3cde/64</div></div></div><div style="left:0px;top:377px;width:300px;height:15px;border-bottom:1px solid #d4d0c8;"><div style="left:0px;top:0px;width:28px;height:15px;overflow:hidden;border-right:1px solid #d4d0c8;"><div class="t" style="left:2px;top:0px;color:#000">DL</div></div><div style="left:28px;top:0px;width:260px;height:15px;overflow:hidden;border-right:1px solid #d4d0c8;"><svg style="position:absolute;left:2px;top:1px" width="13" height="13" viewBox="0 0 13 13"><rect x="4.3" y="0.3" width="3.6" height="11.5" rx="1.8" fill="#9aaab0"/><rect x="0.3" y="3" width="12" height="4.2" rx="2" fill="#f4ec00" stroke="#c8c000" stroke-width="0.6"/></svg><div class="t" style="left:19px;top:0px;color:#000">fe80::e68d:8cff:fe25:3cdf/64</div></div></div><div style="left:0px;top:392px;width:300px;height:15px;border-bottom:1px solid #d4d0c8;"><div style="left:0px;top:0px;width:28px;height:15px;overflow:hidden;border-right:1px solid #d4d0c8;"><div class="t" style="left:2px;top:0px;color:#000">DL</div></div><div style="left:28px;top:0px;width:260px;height:15px;overflow:hidden;border-right:1px solid #d4d0c8;"><svg style="position:absolute;left:2px;top:1px" width="13" height="13" viewBox="0 0 13 13"><rect x="4.3" y="0.3" width="3.6" height="11.5" rx="1.8" fill="#9aaab0"/><rect x="0.3" y="3" width="12" height="4.2" rx="2" fill="#f4ec00" stroke="#c8c000" stroke-width="0.6"/></svg><div class="t" style="left:19px;top:0px;color:#000">fe80::e68d:8cff:fe25:3cdf/64</div></div></div><div style="left:0px;top:407px;width:300px;height:15px;border-bottom:1px solid #d4d0c8;"><div style="left:0px;top:0px;width:28px;height:15px;overflow:hidden;border-right:1px solid #d4d0c8;"><div class="t" style="left:2px;top:0px;color:#000">DL</div></div><div style="left:28px;top:0px;width:260px;height:15px;overflow:hidden;border-right:1px solid #d4d0c8;"><svg style="position:absolute;left:2px;top:1px" width="13" height="13" viewBox="0 0 13 13"><rect x="4.3" y="0.3" width="3.6" height="11.5" rx="1.8" fill="#9aaab0"/><rect x="0.3" y="3" width="12" height="4.2" rx="2" fill="#f4ec00" stroke="#c8c000" stroke-width="0.6"/></svg><div class="t" style="left:19px;top:0px;color:#000">fe80::e68d:8cff:fe25:3ce0/64</div></div></div></div></div>
<div class="win" style="left:720px;top:75px;width:686px;height:980px"><div style="left:1px;top:1px;width:682px;height:21px;background:#aaa69e"><div class="t" style="left:4px;top:5px;color:#f4f4f4">Firewall</div></div><div style="left:4px;top:24px;width:69px;height:25px;background:#d4d0c8;border-top:1px solid #fff;border-left:1px solid #fff;border-right:1px solid #808080;z-index:2"><div class="t" style="left:0px;top:5px;width:67px;text-align:center">Filter Rules</div></div><div style="left:73px;top:27px;width:33px;height:22px;background:#c4c0b8;border-top:1px solid #e8e4dc;border-right:1px solid #a8a49c"><div class="t" style="left:0px;top:4px;width:32px;text-align:center">NAT</div></div><div style="left:107px;top:27px;width:49px;height:22px;background:#c4c0b8;border-top:1px solid #e8e4dc;border-right:1px solid #a8a49c"><div class="t" style="left:0px;top:4px;width:48px;text-align:center">Mangle</div></div><div style="left:157px;top:27px;width:34px;height:22px;background:#c4c0b8;border-top:1px solid #e8e4dc;border-right:1px solid #a8a49c"><div class="t" style="left:0px;top:4px;width:33px;text-align:center">Raw</div></div><div style="left:192px;top:27px;width:76px;height:22px;background:#c4c0b8;border-top:1px solid #e8e4dc;border-right:1px solid #a8a49c"><div class="t" style="left:0px;top:4px;width:75px;text-align:center">Service Ports</div></div><div style="left:269px;top:27px;width:73px;height:22px;background:#c4c0b8;border-top:1px solid #e8e4dc;border-right:1px solid #a8a49c"><div class="t" style="left:0px;top:4px;width:72px;text-align:center">Connections</div></div><div style="left:343px;top:27px;width:76px;height:22px;background:#c4c0b8;border-top:1px solid #e8e4dc;border-right:1px solid #a8a49c"><div class="t" style="left:0px;top:4px;width:75px;text-align:center">Address Lists</div></div><div style="left:420px;top:27px;width:93px;height:22px;background:#c4c0b8;border-top:1px solid #e8e4dc;border-right:1px solid #a8a49c"><div class="t" style="left:0px;top:4px;width:92px;text-align:center">Layer7 Protocols</div></div><div style="left:2px;top:49px;width:682px;height:928px;border-top:1px solid #fff;border-left:1px solid #fff;border-right:1px solid #808080;border-bottom:1px solid #808080"></div><div style="left:4px;top:53px;width:22px;height:23px;border:1px solid #808080;box-shadow:inset 1px 1px 0 #fff,1px 1px 0 #fff;background:#d4d0c8;"><svg style="position:absolute;left:3px;top:5px" width="13" height="13" viewBox="0 0 13 13"><path d="M4.5 0.5h3v4h4v3h-4v4h-3v-4h-4v-3h4z" fill="#0000ff" stroke="#000" stroke-width="1"/></svg></div><div style="left:29px;top:53px;width:22px;height:23px;border:1px solid #808080;box-shadow:inset 1px 1px 0 #fff,1px 1px 0 #fff;background:#d4d0c8;"><svg style="position:absolute;left:3px;top:5px" width="13" height="13" viewBox="0 0 13 13"><rect x="1.5" y="4.5" width="10" height="3" fill="#e8e4dc" stroke="#9a968e"/></svg></div><div style="left:59px;top:53px;width:22px;height:23px;border:1px solid #808080;box-shadow:inset 1px 1px 0 #fff,1px 1px 0 #fff;background:#d4d0c8;"><svg style="position:absolute;left:3px;top:5px" width="13" height="13" viewBox="0 0 13 13"><path d="M1 6.5l3 3 7-7" fill="none" stroke="#8a867e" stroke-width="3.6"/><path d="M1 6.5l3 3 7-7" fill="none" stroke="#f0ece4" stroke-width="1.6"/></svg></div><div style="left:84px;top:53px;width:22px;height:23px;border:1px solid #808080;box-shadow:inset 1px 1px 0 #fff,1px 1px 0 #fff;background:#d4d0c8;"><svg style="position:absolute;left:3px;top:5px" width="13" height="13" viewBox="0 0 13 13"><path d="M2 2l9 9M11 2l-9 9" fill="none" stroke="#8a867e" stroke-width="3.6"/><path d="M2 2l9 9M11 2l-9 9" fill="none" stroke="#f0ece4" stroke-width="1.6"/></svg></div><div style="left:114px;top:53px;width:22px;height:23px;border:1px solid #808080;box-shadow:inset 1px 1px 0 #fff,1px 1px 0 #fff;background:#d4d0c8;"><svg style="position:absolute;left:3px;top:5px" width="13" height="13" viewBox="0 0 13 13"><path d="M0.5 4.5l3-3h9v9h-12z" fill="#ece8e0" stroke="#8a867e"/><path d="M5 4.5h2M8 4.5h2M5 6.5h5" stroke="#8a867e"/></svg></div><div style="left:144px;top:53px;width:22px;height:23px;border:1px solid #808080;box-shadow:inset 1px 1px 0 #fff,1px 1px 0 #fff;background:#d4d0c8;"><svg style="position:absolute;left:3px;top:5px" width="13" height="13" viewBox="0 0 13 13"><path d="M0.5 1.5h12l-4.5 5v5h-3v-5z" fill="url(#gFunnel)" stroke="#000" stroke-width="1"/></svg></div><div style="left:174px;top:53px;width:105px;height:23px;border:1px solid #808080;box-shadow:inset 1px 1px 0 #fff,1px 1px 0 #fff;background:#d4d0c8;"><svg style="position:absolute;left:3px;top:4px" width="14" height="14" viewBox="0 0 14 14"><circle cx="8" cy="6.5" r="4.5" fill="#2a78e0" stroke="#1a4890" stroke-width="0.6"/><circle cx="8" cy="6.5" r="2" fill="#fff"/><path d="M2.5 2.5a6 6 0 0 0 0 8" stroke="#2a78e0" stroke-width="1.6" fill="none"/></svg><div class="t" style="left:20px;top:3px;color:#8a867e">Reset Counters</div></div><div style="left:282px;top:53px;width:119px;height:23px;border:1px solid #808080;box-shadow:inset 1px 1px 0 #fff,1px 1px 0 #fff;background:#d4d0c8;"><svg style="position:absolute;left:3px;top:4px" width="14" height="14" viewBox="0 0 14 14"><circle cx="8" cy="6.5" r="4.5" fill="#2a78e0" stroke="#1a4890" stroke-width="0.6"/><circle cx="8" cy="6.5" r="2" fill="#fff"/><path d="M2.5 2.5a6 6 0 0 0 0 8" stroke="#2a78e0" stroke-width="1.6" fill="none"/></svg><div class="t" style="left:20px;top:3px;color:#000">Reset All Counters</div></div><div style="left:416px;top:56px;width:56px;height:18px;background:#fff;border:1px solid #808080;box-shadow:1px 1px 0 #fff"><div class="t" style="left:2px;top:0px;font-style:italic;color:#8a867e;">Find</div></div><div style="left:478px;top:56px;width:120px;height:18px;background:#fff;border:1px solid #808080;box-shadow:1px 1px 0 #fff"><div class="t" style="left:2px;top:0px;color:#000;">all</div></div><div class="lv" style="left:3px;top:79px;width:660px;height:859px"><div style="left:0px;top:0px;width:25px;height:17px;background:#d4d0c8;border-right:1px solid #808080;border-bottom:1px solid #808080;box-shadow:inset 1px 1px 0 #fff"><div class="t" style="left:2px;top:2px;width:20px;text-align:center">#</div></div><div style="left:25px;top:0px;width:22px;height:17px;background:#d4d0c8;border-right:1px solid #808080;border-bottom:1px solid #808080;box-shadow:inset 1px 1px 0 #fff"><div class="t" style="left:2px;top:2px;width:17px;text-align:left"></div></div><div style="left:47px;top:0px;width:75px;height:17px;background:#d4d0c8;border-right:1px solid #808080;border-bottom:1px solid #808080;box-shadow:inset 1px 1px 0 #fff"><div class="t" style="left:2px;top:2px;width:70px;text-align:left">Action</div></div><div style="left:122px;top:0px;width:194px;height:17px;background:#d4d0c8;border-right:1px solid #808080;border-bottom:1px solid #808080;box-shadow:inset 1px 1px 0 #fff"><div class="t" style="left:2px;top:2px;width:189px;text-align:left">Chain</div></div><div style="left:316px;top:0px;width:84px;height:17px;background:#d4d0c8;border-right:1px solid #808080;border-bottom:1px solid #808080;box-shadow:inset 1px 1px 0 #fff"><div class="t" style="left:2px;top:2px;width:79px;text-align:left">Src. Address</div></div><div style="left:400px;top:0px;width:70px;height:17px;background:#d4d0c8;border-right:1px solid #808080;border-bottom:1px solid #808080;box-shadow:inset 1px 1px 0 #fff"><div class="t" style="left:2px;top:2px;width:65px;text-align:left">Dst. Address</div></div><div style="left:470px;top:0px;width:40px;height:17px;background:#d4d0c8;border-right:1px solid #808080;border-bottom:1px solid #808080;box-shadow:inset 1px 1px 0 #fff"><div class="t" style="left:2px;top:2px;width:35px;text-align:left">Proto...</div></div><div style="left:510px;top:0px;width:60px;height:17px;background:#d4d0c8;border-right:1px solid #808080;border-bottom:1px solid #808080;box-shadow:inset 1px 1px 0 #fff"><div class="t" style="left:2px;top:2px;width:55px;text-align:left">Src. Port</div></div><div style="left:570px;top:0px;width:60px;height:17px;background:#d4d0c8;border-right:1px solid #808080;border-bottom:1px solid #808080;box-shadow:inset 1px 1px 0 #fff"><div class="t" style="left:2px;top:2px;width:55px;text-align:left">Dst. Port</div></div><div style="left:630px;top:0px;width:60px;height:17px;background:#d4d0c8;border-right:1px solid #808080;border-bottom:1px solid #808080;box-shadow:inset 1px 1px 0 #fff"><div class="t" style="left:2px;top:2px;width:55px;text-align:left">In. Inter...</div></div><div style="left:0px;top:17px;width:660px;height:15px;border-bottom:1px solid #d4d0c8;"><div class="t" style="left:16px;top:0px;color:#8a867e">;;; Global stateless rules</div></div><div style="left:0px;top:32px;width:660px;height:15px;border-bottom:1px solid #d4d0c8;"><div style="left:0px;top:0px;width:25px;height:15px;overflow:hidden;border-right:1px solid #d4d0c8;"><div class="t" style="left:0px;top:0px;width:22px;text-align:right;color:#8a867e">0</div></div><div style="left:25px;top:0px;width:22px;height:15px;overflow:hidden;border-right:1px solid #d4d0c8;"><div class="t" style="left:2px;top:0px;color:#8a867e">X</div></div><div style="left:47px;top:0px;width:75px;height:15px;overflow:hidden;border-right:1px solid #d4d0c8;"><svg style="position:absolute;left:2px;top:1px" width="13" height="13" viewBox="0 0 13 13"><path d="M1.5 0.5h6l4 4v8h-10z" fill="url(#gPage)" stroke="#90a0a0"/><path d="M7.5 0.5v4h4" fill="none" stroke="#90a0a0"/></svg><div class="t" style="left:19px;top:0px;color:#8a867e">passthro...</div></div><div style="left:122px;top:0px;width:194px;height:15px;overflow:hidden;border-right:1px solid #d4d0c8;"><div class="t" style="left:2px;top:0px;color:#8a867e">unused</div></div><div style="left:316px;top:0px;width:84px;height:15px;overflow:hidden;border-right:1px solid #d4d0c8;"></div><div style="left:400px;top:0px;width:70px;height:15px;overflow:hidden;border-right:1px solid #d4d0c8;"></div><div style="left:470px;top:0px;width:40px;height:15px;overflow:hidden;border-right:1px solid #d4d0c8;"></div><div style="left:510px;top:0px;width:60px;height:15px;overflow:hidden;border-right:1px solid #d4d0c8;"></div><div style="left:570px;top:0px;width:60px;height:15px;overflow:hidden;border-right:1px solid #d4d0c8;"></div><div style="left:630px;top:0px;width:60px;height:15px;overflow:hidden;border-right:1px solid #d4d0c8;"></div></div><div style="left:0px;top:47px;width:660px;height:15px;border-bottom:1px solid #d4d0c8;"><div style="left:0px;top:0px;width:25px;height:15px;overflow:hidden;border-right:1px solid #d4d0c8;"><div class="t" style="left:0px;top:0px;width:22px;text-align:right;color:#000">1</div></div><div style="left:25px;top:0px;width:22px;height:15px;overflow:hidden;border-right:1px solid #d4d0c8;"></div><div style="left:47px;top:0px;width:75px;height:15px;overflow:hidden;border-right:1px solid #d4d0c8;"><svg style="position:absolute;left:2px;top:1px" width="13" height="13" viewBox="0 0 13 13"><path d="M0.5 9a5.5 5.5 0 0 1 9.5-5l1.5-1.5v7h-7l2-2a3 3 0 0 0-4.5 1.5l-0.2 2.5z" fill="url(#gJump)" stroke="#2060a0" stroke-width="0.5"/></svg><div class="t" style="left:19px;top:0px;color:#000">jump</div></div><div style="left:122px;top:0px;width:194px;height:15px;overflow:hidden;border-right:1px solid #d4d0c8;"><div class="t" style="left:2px;top:0px;color:#000">input</div></div><div style="left:316px;top:0px;width:84px;height:15px;overflow:hidden;border-right:1px solid #d4d0c8;"></div><div style="left:400px;top:0px;width:70px;height:15px;overflow:hidden;border-right:1px solid #d4d0c8;"></div><div style="left:470px;top:0px;width:40px;height:15px;overflow:hidden;border-right:1px solid #d4d0c8;"></div><div style="left:510px;top:0px;width:60px;height:15px;overflow:hidden;border-right:1px solid #d4d0c8;"></div><div style="left:570px;top:0px;width:60px;height:15px;overflow:hidden;border-right:1px solid #d4d0c8;"></div><div style="left:630px;top:0px;width:60px;height:15px;overflow:hidden;border-right:1px solid #d4d0c8;"></div></div><div style="left:0px;top:62px;width:660px;height:15px;border-bottom:1px solid #d4d0c8;"><div style="left:0px;top:0px;width:25px;height:15px;overflow:hidden;border-right:1px solid #d4d0c8;"><div class="t" style="left:0px;top:0px;width:22px;text-align:right;color:#000">2</div></div><div style="left:25px;top:0px;width:22px;height:15px;overflow:hidden;border-right:1px solid #d4d0c8;"></div><div style="left:47px;top:0px;width:75px;height:15px;overflow:hidden;border-right:1px solid #d4d0c8;"><svg style="position:absolute;left:2px;top:1px" width="13" height="13" viewBox="0 0 13 13"><path d="M0.5 9a5.5 5.5 0 0 1 9.5-5l1.5-1.5v7h-7l2-2a3 3 0 0 0-4.5 1.5l-0.2 2.5z" fill="url(#gJump)" stroke="#2060a0" stroke-width="0.5"/></svg><div class="t" style="left:19px;top:0px;color:#000">jump</div></div><div style="left:122px;top:0px;width:194px;height:15px;overflow:hidden;border-right:1px solid #d4d0c8;"><div class="t" style="left:2px;top:0px;color:#000">forward</div></div><div style="left:316px;top:0px;width:84px;height:15px;overflow:hidden;border-right:1px solid #d4d0c8;"></div><div style="left:400px;top:0px;width:70px;height:15px;overflow:hidden;border-right:1px solid #d4d0c8;"></div><div style="left:470px;top:0px;width:40px;height:15px;overflow:hidden;border-right:1px solid #d4d0c8;"></div><div style="left:510px;top:0px;width:60px;height:15px;overflow:hidden;border-right:1px solid #d4d0c8;"></div><div style="left:570px;top:0px;width:60px;height:15px;overflow:hidden;border-right:1px solid #d4d0c8;"></div><div style="left:630px;top:0px;width:60px;height:15px;overflow:hidden;border-right:1px solid #d4d0c8;"></div></div><div style="left:0px;top:77px;width:660px;height:15px;border-bottom:1px solid #d4d0c8;"><div style="left:0px;top:0px;width:25px;height:15px;overflow:hidden;border-right:1px solid #d4d0c8;"><div class="t" style="left:0px;top:0px;width:22px;text-align:right;color:#000">3</div></div><div style="left:25px;top:0px;width:22px;height:15px;overflow:hidden;border-right:1px solid #d4d0c8;"></div><div style="left:47px;top:0px;width:75px;height:15px;overflow:hidden;border-right:1px solid #d4d0c8;"><svg style="position:absolute;left:2px;top:1px" width="13" height="13" viewBox="0 0 13 13"><path d="M0.5 9a5.5 5.5 0 0 1 9.5-5l1.5-1.5v7h-7l2-2a3 3 0 0 0-4.5 1.5l-0.2 2.5z" fill="url(#gJump)" stroke="#2060a0" stroke-width="0.5"/></svg><div class="t" style="left:19px;top:0px;color:#000">jump</div></div><div style="left:122px;top:0px;width:194px;height:15px;overflow:hidden;border-right:1px solid #d4d0c8;"><div class="t" style="left:2px;top:0px;color:#000">output</div></div><div style="left:316px;top:0px;width:84px;height:15px;overflow:hidden;border-right:1px solid #d4d0c8;"></div><div style="left:400px;top:0px;width:70px;height:15px;overflow:hidden;border-right:1px solid #d4d0c8;"></div><div style="left:470px;top:0px;width:40px;height:15px;overflow:hidden;border-right:1px solid #d4d0c8;"></div><div style="left:510px;top:0px;width:60px;height:15px;overflow:hidden;border-right:1px solid #d4d0c8;"></div><div style="left:570px;top:0px;width:60px;height:15px;overflow:hidden;border-right:1px solid #d4d0c8;"></div><div style="left:630px;top:0px;width:60px;height:15px;overflow:hidden;border-right:1px solid #d4d0c8;"></div></div><div style="left:0px;top:92px;width:660px;height:15px;border-bottom:1px solid #d4d0c8;"><div style="left:0px;top:0px;width:25px;height:15px;overflow:hidden;border-right:1px solid #d4d0c8;"><div class="t" style="left:0px;top:0px;width:22px;text-align:right;color:#000">4</div></div><div style="left:25px;top:0px;width:22px;height:15px;overflow:hidden;border-right:1px solid #d4d0c8;"></div><div style="left:47px;top:0px;width:75px;height:15px;overflow:hidden;border-right:1px solid #d4d0c8;"><svg style="position:absolute;left:2px;top:1px" width="13" height="13" viewBox="0 0 13 13"><path d="M0.5 3l2.5-2.5 3 3 3-3 2.5 2.5-3 3 3 3-2.5 2.5-3-3-3 3-2.5-2.5 3-3z" fill="#d01820" stroke="#801010" stroke-width="0.8"/></svg><div class="t" style="left:19px;top:0px;color:#000">drop</div></div><div style="left:122px;top:0px;width:194px;height:15px;overflow:hidden;border-right:1px solid #d4d0c8;"><div class="t" style="left:2px;top:0px;color:#000">global</div></div><div style="left:316px;top:0px;width:84px;height:15px;overflow:hidden;border-right:1px solid #d4d0c8;"></div><div style="left:400px;top:0px;width:70px;height:15px;overflow:hidden;border-right:1px solid #d4d0c8;"></div><div style="left:470px;top:0px;width:40px;height:15px;overflow:hidden;border-right:1px solid #d4d0c8;"></div><div style="left:510px;top:0px;width:60px;height:15px;overflow:hidden;border-right:1px solid #d4d0c8;"></div><div style="left:570px;top:0px;width:60px;height:15px;overflow:hidden;border-right:1px solid #d4d0c8;"></div><div style="left:630px;top:0px;width:60px;height:15px;overflow:hidden;border-right:1px solid #d4d0c8;"></div></div><div style="left:0px;top:107px;width:660px;height:15px;border-bottom:1px solid #d4d0c8;"><div style="left:0px;top:0px;width:25px;height:15px;overflow:hidden;border-right:1px solid #d4d0c8;"><div class="t" style="left:0px;top:0px;width:22px;text-align:right;color:#000">5</div></div><div style="left:25px;top:0px;width:22px;height:15px;overflow:hidden;border-right:1px solid #d4d0c8;"></div><div style="left:47px;top:0px;width:75px;height:15px;overflow:hidden;border-right:1px solid #d4d0c8;"><svg style="position:absolute;left:2px;top:1px" width="13" height="13" viewBox="0 0 13 13"><path d="M0.5 3l2.5-2.5 3 3 3-3 2.5 2.5-3 3 3 3-2.5 2.5-3-3-3 3-2.5-2.5 3-3z" fill="#d01820" stroke="#801010" stroke-width="0.8"/></svg><div class="t" style="left:19px;top:0px;color:#000">drop</div></div><div style="left:122px;top:0px;width:194px;height:15px;overflow:hidden;border-right:1px solid #d4d0c8;"><div class="t" style="left:2px;top:0px;color:#000">global</div></div><div style="left:316px;top:0px;width:84px;height:15px;overflow:hidden;border-right:1px solid #d4d0c8;"></div><div style="left:400px;top:0px;width:70px;height:15px;overflow:hidden;border-right:1px solid #d4d0c8;"></div><div style="left:470px;top:0px;width:40px;height:15px;overflow:hidden;border-right:1px solid #d4d0c8;"></div><div style="left:510px;top:0px;width:60px;height:15px;overflow:hidden;border-right:1px solid #d4d0c8;"></div><div style="left:570px;top:0px;width:60px;height:15px;overflow:hidden;border-right:1px solid #d4d0c8;"></div><div style="left:630px;top:0px;width:60px;height:15px;overflow:hidden;border-right:1px solid #d4d0c8;"></div></div><div style="left:0px;top:122px;width:660px;height:15px;border-bottom:1px solid #d4d0c8;"><div style="left:0px;top:0px;width:25px;height:15px;overflow:hidden;border-right:1px solid #d4d0c8;"><div class="t" style="left:0px;top:0px;width:22px;text-align:right;color:#000">6</div></div><div style="left:25px;top:0px;width:22px;height:15px;overflow:hidden;border-right:1px solid #d4d0c8;"></div><div style="left:47px;top:0px;width:75px;height:15px;overflow:hidden;border-right:1px solid #d4d0c8;"><svg style="position:absolute;left:2px;top:1px" width="13" height="13" viewBox="0 0 13 13"><path d="M0.5 3l2.5-2.5 3 3 3-3 2.5 2.5-3 3 3 3-2.5 2.5-3-3-3 3-2.5-2.5 3-3z" fill="#d01820" stroke="#801010" stroke-width="0.8"/></svg><div class="t" style="left:19px;top:0px;color:#000">drop</div></div><div style="left:122px;top:0px;width:194px;height:15px;overflow:hidden;border-right:1px solid #d4d0c8;"><div class="t" style="left:2px;top:0px;color:#000">global</div></div><div style="left:316px;top:0px;width:84px;height:15px;overflow:hidden;border-right:1px solid #d4d0c8;"></div><div style="left:400px;top:0px;width:70px;height:15px;overflow:hidden;border-right:1px solid #d4d0c8;"></div><div style="left:470px;top:0px;width:40px;height:15px;overflow:hidden;border-right:1px solid #d4d0c8;"><div class="t" style="left:2px;top:0px;color:#000">17 (u...</div></div><div style="left:510px;top:0px;width:60px;height:15px;overflow:hidden;border-right:1px solid #d4d0c8;"></div><div style="left:570px;top:0px;width:60px;height:15px;overflow:hidden;border-right:1px solid #d4d0c8;"></div><div style="left:630px;top:0px;width:60px;height:15px;overflow:hidden;border-right:1px solid #d4d0c8;"></div></div><div style="left:0px;top:137px;width:660px;height:15px;border-bottom:1px solid #d4d0c8;"><div style="left:0px;top:0px;width:25px;height:15px;overflow:hidden;border-right:1px solid #d4d0c8;"><div class="t" style="left:0px;top:0px;width:22px;text-align:right;color:#000">7</div></div><div style="left:25px;top:0px;width:22px;height:15px;overflow:hidden;border-right:1px solid #d4d0c8;"></div><div style="left:47px;top:0px;width:75px;height:15px;overflow:hidden;border-right:1px solid #d4d0c8;"><svg style="position:absolute;left:2px;top:1px" width="13" height="13" viewBox="0 0 13 13"><path d="M0.5 9a5.5 5.5 0 0 1 9.5-5l1.5-1.5v7h-7l2-2a3 3 0 0 0-4.5 1.5l-0.2 2.5z" fill="url(#gJump)" stroke="#2060a0" stroke-width="0.5"/></svg><div class="t" style="left:19px;top:0px;color:#000">jump</div></div><div style="left:122px;top:0px;width:194px;height:15px;overflow:hidden;border-right:1px solid #d4d0c8;"><div class="t" style="left:2px;top:0px;color:#000">global</div></div><div style="left:316px;top:0px;width:84px;height:15px;overflow:hidden;border-right:1px solid #d4d0c8;"></div><div style="left:400px;top:0px;width:70px;height:15px;overflow:hidden;border-right:1px solid #d4d0c8;"></div><div style="left:470px;top:0px;width:40px;height:15px;overflow:hidden;border-right:1px solid #d4d0c8;"><div class="t" style="left:2px;top:0px;color:#000">1 (ic...</div></div><div style="left:510px;top:0px;width:60px;height:15px;overflow:hidden;border-right:1px solid #d4d0c8;"></div><div style="left:570px;top:0px;width:60px;height:15px;overflow:hidden;border-right:1px solid #d4d0c8;"></div><div style="left:630px;top:0px;width:60px;height:15px;overflow:hidden;border-right:1px solid #d4d0c8;"></div></div><div style="left:0px;top:152px;width:660px;height:15px;border-bottom:1px solid #d4d0c8;"><div style="left:0px;top:0px;width:25px;height:15px;overflow:hidden;border-right:1px solid #d4d0c8;"><div class="t" style="left:0px;top:0px;width:22px;text-align:right;color:#000">8</div></div><div style="left:25px;top:0px;width:22px;height:15px;overflow:hidden;border-right:1px solid #d4d0c8;"></div><div style="left:47px;top:0px;width:75px;height:15px;overflow:hidden;border-right:1px solid #d4d0c8;"><svg style="position:absolute;left:2px;top:1px" width="13" height="13" viewBox="0 0 13 13"><path d="M0.5 3l2.5-2.5 3 3 3-3 2.5 2.5-3 3 3 3-2.5 2.5-3-3-3 3-2.5-2.5 3-3z" fill="#d01820" stroke="#801010" stroke-width="0.8"/></svg><div class="t" style="left:19px;top:0px;color:#000">drop</div></div><div style="left:122px;top:0px;width:194px;height:15px;overflow:hidden;border-right:1px solid #d4d0c8;"><div class="t" style="left:2px;top:0px;color:#000">global-icmp</div></div><div style="left:316px;top:0px;width:84px;height:15px;overflow:hidden;border-right:1px solid #d4d0c8;"></div><div style="left:400px;top:0px;width:70px;height:15px;overflow:hidden;border-right:1px solid #d4d0c8;"></div><div style="left:470px;top:0px;width:40px;height:15px;overflow:hidden;border-right:1px solid #d4d0c8;"></div><div style="left:510px;top:0px;width:60px;height:15px;overflow:hidden;border-right:1px solid #d4d0c8;"></div><div style="left:570px;top:0px;width:60px;height:15px;overflow:hidden;border-right:1px solid #d4d0c8;"></div><div style="left:630px;top:0px;width:60px;height:15px;overflow:hidden;border-right:1px solid #d4d0c8;"></div></div><div style="left:0px;top:167px;width:660px;height:15px;border-bottom:1px solid #d4d0c8;"><div style="left:0px;top:0px;width:25px;height:15px;overflow:hidden;border-right:1px solid #d4d0c8;"><div class="t" style="left:0px;top:0px;width:22px;text-align:right;color:#000">9</div></div><div style="left:25px;top:0px;width:22px;height:15px;overflow:hidden;border-right:1px solid #d4d0c8;"></div><div style="left:47px;top:0px;width:75px;height:15px;overflow:hidden;border-right:1px solid #d4d0c8;"><svg style="position:absolute;left:2px;top:1px" width="13" height="13" viewBox="0 0 13 13"><path d="M0.5 6l5-5.5v3.5h6v4h-6v4z" fill="url(#gRet)" stroke="#602070" stroke-width="0.7"/><path d="M8 4.5q0-2.5 2.5-3.5" stroke="#802090" stroke-width="1.3" fill="none"/></svg><div class="t" style="left:19px;top:0px;color:#000">return</div></div><div style="left:122px;top:0px;width:194px;height:15px;overflow:hidden;border-right:1px solid #d4d0c8;"><div class="t" style="left:2px;top:0px;color:#000">global-icmp</div></div><div style="left:316px;top:0px;width:84px;height:15px;overflow:hidden;border-right:1px solid #d4d0c8;"></div><div style="left:400px;top:0px;width:70px;height:15px;overflow:hidden;border-right:1px solid #d4d0c8;"></div><div style="left:470px;top:0px;width:40px;height:15px;overflow:hidden;border-right:1px solid #d4d0c8;"><div class="t" style="left:2px;top:0px;color:#000">1 (ic...</div></div><div style="left:510px;top:0px;width:60px;height:15px;overflow:hidden;border-right:1px solid #d4d0c8;"></div><div style="left:570px;top:0px;width:60px;height:15px;overflow:hidden;border-right:1px solid #d4d0c8;"></div><div style="left:630px;top:0px;width:60px;height:15px;overflow:hidden;border-right:1px solid #d4d0c8;"></div></div><div style="left:0px;top:182px;width:660px;height:15px;border-bottom:1px solid #d4d0c8;"><div style="left:0px;top:0px;width:25px;height:15px;overflow:hidden;border-right:1px solid #d4d0c8;"><div class="t" style="left:0px;top:0px;width:22px;text-align:right;color:#000">10</div></div><div style="left:25px;top:0px;width:22px;height:15px;overflow:hidden;border-right:1px solid #d4d0c8;"></div><div style="left:47px;top:0px;width:75px;height:15px;overflow:hidden;border-right:1px solid #d4d0c8;"><svg style="position:absolute;left:2px;top:1px" width="13" height="13" viewBox="0 0 13 13"><path d="M0.5 6l5-5.5v3.5h6v4h-6v4z" fill="url(#gRet)" stroke="#602070" stroke-width="0.7"/><path d="M8 4.5q0-2.5 2.5-3.5" stroke="#802090" stroke-width="1.3" fill="none"/></svg><div class="t" style="left:19px;top:0px;color:#000">return</div></div><div style="left:122px;top:0px;width:194px;height:15px;overflow:hidden;border-right:1px solid #d4d0c8;"><div class="t" style="left:2px;top:0px;color:#000">global-icmp</div></div><div style="left:316px;top:0px;width:84px;height:15px;overflow:hidden;border-right:1px solid #d4d0c8;"></div><div style="left:400px;top:0px;width:70px;height:15px;overflow:hidden;border-right:1px solid #d4d0c8;"></div><div style="left:470px;top:0px;width:40px;height:15px;overflow:hidden;border-right:1px solid #d4d0c8;"><div class="t" style="left:2px;top:0px;color:#000">1 (ic...</div></div><div style="left:510px;top:0px;width:60px;height:15px;overflow:hidden;border-right:1px solid #d4d0c8;"></div><div style="left:570px;top:0px;width:60px;height:15px;overflow:hidden;border-right:1px solid #d4d0c8;"></div><div style="left:630px;top:0px;width:60px;height:15px;overflow:hidden;border-right:1px solid #d4d0c8;"></div></div><div style="left:0px;top:197px;width:660px;height:15px;border-bottom:1px solid #d4d0c8;"><div style="left:0px;top:0px;width:25px;height:15px;overflow:hidden;border-right:1px solid #d4d0c8;"><div class="t" style="left:0px;top:0px;width:22px;text-align:right;color:#000">11</div></div><div style="left:25px;top:0px;width:22px;height:15px;overflow:hidden;border-right:1px solid #d4d0c8;"></div><div style="left:47px;top:0px;width:75px;height:15px;overflow:hidden;border-right:1px solid #d4d0c8;"><svg style="position:absolute;left:2px;top:1px" width="13" height="13" viewBox="0 0 13 13"><path d="M0.5 6l5-5.5v3.5h6v4h-6v4z" fill="url(#gRet)" stroke="#602070" stroke-width="0.7"/><path d="M8 4.5q0-2.5 2.5-3.5" stroke="#802090" stroke-width="1.3" fill="none"/></svg><div class="t" style="left:19px;top:0px;color:#000">return</div></div><div style="left:122px;top:0px;width:194px;height:15px;overflow:hidden;border-right:1px solid #d4d0c8;"><div class="t" style="left:2px;top:0px;color:#000">global-icmp</div></div><div style="left:316px;top:0px;width:84px;height:15px;overflow:hidden;border-right:1px solid #d4d0c8;"></div><div style="left:400px;top:0px;width:70px;height:15px;overflow:hidden;border-right:1px solid #d4d0c8;"></div><div style="left:470px;top:0px;width:40px;height:15px;overflow:hidden;border-right:1px solid #d4d0c8;"><div class="t" style="left:2px;top:0px;color:#000">1 (ic...</div></div><div style="left:510px;top:0px;width:60px;height:15px;overflow:hidden;border-right:1px solid #d4d0c8;"></div><div style="left:570px;top:0px;width:60px;height:15px;overflow:hidden;border-right:1px solid #d4d0c8;"></div><div style="left:630px;top:0px;width:60px;height:15px;overflow:hidden;border-right:1px solid #d4d0c8;"></div></div><div style="left:0px;top:212px;width:660px;height:15px;border-bottom:1px solid #d4d0c8;"><div style="left:0px;top:0px;width:25px;height:15px;overflow:hidden;border-right:1px solid #d4d0c8;"><div class="t" style="left:0px;top:0px;width:22px;text-align:right;color:#000">12</div></div><div style="left:25px;top:0px;width:22px;height:15px;overflow:hidden;border-right:1px solid #d4d0c8;"></div><div style="left:47px;top:0px;width:75px;height:15px;overflow:hidden;border-right:1px solid #d4d0c8;"><svg style="position:absolute;left:2px;top:1px" width="13" height="13" viewBox="0 0 13 13"><path d="M0.5 6l5-5.5v3.5h6v4h-6v4z" fill="url(#gRet)" stroke="#602070" stroke-width="0.7"/><path d="M8 4.5q0-2.5 2.5-3.5" stroke="#802090" stroke-width="1.3" fill="none"/></svg><div class="t" style="left:19px;top:0px;color:#000">return</div></div><div style="left:122px;top:0px;width:194px;height:15px;overflow:hidden;border-right:1px solid #d4d0c8;"><div class="t" style="left:2px;top:0px;color:#000">global-icmp</div></div><div style="left:316px;top:0px;width:84px;height:15px;overflow:hidden;border-right:1px solid #d4d0c8;"></div><div style="left:400px;top:0px;width:70px;height:15px;overflow:hidden;border-right:1px solid #d4d0c8;"></div><div style="left:470px;top:0px;width:40px;height:15px;overflow:hidden;border-right:1px solid #d4d0c8;"><div class="t" style="left:2px;top:0px;color:#000">1 (ic...</div></div><div style="left:510px;top:0px;width:60px;height:15px;overflow:hidden;border-right:1px solid #d4d0c8;"></div><div style="left:570px;top:0px;width:60px;height:15px;overflow:hidden;border-right:1px solid #d4d0c8;"></div><div style="left:630px;top:0px;width:60px;height:15px;overflow:hidden;border-right:1px solid #d4d0c8;"></div></div><div style="left:0px;top:227px;width:660px;height:15px;border-bottom:1px solid #d4d0c8;"><div style="left:0px;top:0px;width:25px;height:15px;overflow:hidden;border-right:1px solid #d4d0c8;"><div class="t" style="left:0px;top:0px;width:22px;text-align:right;color:#000">13</div></div><div style="left:25px;top:0px;width:22px;height:15px;overflow:hidden;border-right:1px solid #d4d0c8;"></div><div style="left:47px;top:0px;width:75px;height:15px;overflow:hidden;border-right:1px solid #d4d0c8;"><svg style="position:absolute;left:2px;top:1px" width="13" height="13" viewBox="0 0 13 13"><path d="M0.5 6l5-5.5v3.5h6v4h-6v4z" fill="url(#gRet)" stroke="#602070" stroke-width="0.7"/><path d="M8 4.5q0-2.5 2.5-3.5" stroke="#802090" stroke-width="1.3" fill="none"/></svg><div class="t" style="left:19px;top:0px;color:#000">return</div></div><div style="left:122px;top:0px;width:194px;height:15px;overflow:hidden;border-right:1px solid #d4d0c8;"><div class="t" style="left:2px;top:0px;color:#000">global-icmp</div></div><div style="left:316px;top:0px;width:84px;height:15px;overflow:hidden;border-right:1px solid #d4d0c8;"></div><div style="left:400px;top:0px;width:70px;height:15px;overflow:hidden;border-right:1px solid #d4d0c8;"></div><div style="left:470px;top:0px;width:40px;height:15px;overflow:hidden;border-right:1px solid #d4d0c8;"><div class="t" style="left:2px;top:0px;color:#000">1 (ic...</div></div><div style="left:510px;top:0px;width:60px;height:15px;overflow:hidden;border-right:1px solid #d4d0c8;"></div><div style="left:570px;top:0px;width:60px;height:15px;overflow:hidden;border-right:1px solid #d4d0c8;"></div><div style="left:630px;top:0px;width:60px;height:15px;overflow:hidden;border-right:1px solid #d4d0c8;"></div></div><div style="left:0px;top:242px;width:660px;height:15px;border-bottom:1px solid #d4d0c8;"><div style="left:0px;top:0px;width:25px;height:15px;overflow:hidden;border-right:1px solid #d4d0c8;"><div class="t" style="left:0px;top:0px;width:22px;text-align:right;color:#000">14</div></div><div style="left:25px;top:0px;width:22px;height:15px;overflow:hidden;border-right:1px solid #d4d0c8;"></div><div style="left:47px;top:0px;width:75px;height:15px;overflow:hidden;border-right:1px solid #d4d0c8;"><svg style="position:absolute;left:2px;top:1px" width="13" height="13" viewBox="0 0 13 13"><path d="M0.5 6l5-5.5v3.5h6v4h-6v4z" fill="url(#gRet)" stroke="#602070" stroke-width="0.7"/><path d="M8 4.5q0-2.5 2.5-3.5" stroke="#802090" stroke-width="1.3" fill="none"/></svg><div class="t" style="left:19px;top:0px;color:#000">return</div></div><div style="left:122px;top:0px;width:194px;height:15px;overflow:hidden;border-right:1px solid #d4d0c8;"><div class="t" style="left:2px;top:0px;color:#000">global-icmp</div></div><div style="left:316px;top:0px;width:84px;height:15px;overflow:hidden;border-right:1px solid #d4d0c8;"></div><div style="left:400px;top:0px;width:70px;height:15px;overflow:hidden;border-right:1px solid #d4d0c8;"></div><div style="left:470px;top:0px;width:40px;height:15px;overflow:hidden;border-right:1px solid #d4d0c8;"><div class="t" style="left:2px;top:0px;color:#000">1 (ic...</div></div><div style="left:510px;top:0px;width:60px;height:15px;overflow:hidden;border-right:1px solid #d4d0c8;"></div><div style="left:570px;top:0px;width:60px;height:15px;overflow:hidden;border-right:1px solid #d4d0c8;"></div><div style="left:630px;top:0px;width:60px;height:15px;overflow:hidden;border-right:1px solid #d4d0c8;"></div></div><div style="left:0px;top:257px;width:660px;height:15px;border-bottom:1px solid #d4d0c8;"><div style="left:0px;top:0px;width:25px;height:15px;overflow:hidden;border-right:1px solid #d4d0c8;"><div class="t" style="left:0px;top:0px;width:22px;text-align:right;color:#000">15</div></div><div style="left:25px;top:0px;width:22px;height:15px;overflow:hidden;border-right:1px solid #d4d0c8;"></div><div style="left:47px;top:0px;width:75px;height:15px;overflow:hidden;border-right:1px solid #d4d0c8;"><svg style="position:absolute;left:2px;top:1px" width="13" height="13" viewBox="0 0 13 13"><path d="M0.5 3l2.5-2.5 3 3 3-3 2.5 2.5-3 3 3 3-2.5 2.5-3-3-3 3-2.5-2.5 3-3z" fill="#d01820" stroke="#801010" stroke-width="0.8"/></svg><div class="t" style="left:19px;top:0px;color:#000">drop</div></div><div style="left:122px;top:0px;width:194px;height:15px;overflow:hidden;border-right:1px solid #d4d0c8;"><div class="t" style="left:2px;top:0px;color:#000">global-icmp</div></div><div style="left:316px;top:0px;width:84px;height:15px;overflow:hidden;border-right:1px solid #d4d0c8;"></div><div style="left:400px;top:0px;width:70px;height:15px;overflow:hidden;border-right:1px solid #d4d0c8;"></div><div style="left:470px;top:0px;width:40px;height:15px;overflow:hidden;border-right:1px solid #d4d0c8;"></div><div style="left:510px;top:0px;width:60px;height:15px;overflow:hidden;border-right:1px solid #d4d0c8;"></div><div style="left:570px;top:0px;width:60px;height:15px;overflow:hidden;border-right:1px solid #d4d0c8;"></div><div style="left:630px;top:0px;width:60px;height:15px;overflow:hidden;border-right:1px solid #d4d0c8;"></div></div><div style="left:0px;top:272px;width:660px;height:15px;border-bottom:1px solid #d4d0c8;"><div style="left:0px;top:0px;width:25px;height:15px;overflow:hidden;border-right:1px solid #d4d0c8;"><div class="t" style="left:0px;top:0px;width:22px;text-align:right;color:#000">16</div></div><div style="left:25px;top:0px;width:22px;height:15px;overflow:hidden;border-right:1px solid #d4d0c8;"></div><div style="left:47px;top:0px;width:75px;height:15px;overflow:hidden;border-right:1px solid #d4d0c8;"><svg style="position:absolute;left:2px;top:1px" width="13" height="13" viewBox="0 0 13 13"><path d="M0.5 6l5-5.5v3.5h6v4h-6v4z" fill="url(#gRet)" stroke="#602070" stroke-width="0.7"/><path d="M8 4.5q0-2.5 2.5-3.5" stroke="#802090" stroke-width="1.3" fill="none"/></svg><div class="t" style="left:19px;top:0px;color:#000">return</div></div><div style="left:122px;top:0px;width:194px;height:15px;overflow:hidden;border-right:1px solid #d4d0c8;"><div class="t" style="left:2px;top:0px;color:#000">global</div></div><div style="left:316px;top:0px;width:84px;height:15px;overflow:hidden;border-right:1px solid #d4d0c8;"></div><div style="left:400px;top:0px;width:70px;height:15px;overflow:hidden;border-right:1px solid #d4d0c8;"></div><div style="left:470px;top:0px;width:40px;height:15px;overflow:hidden;border-right:1px solid #d4d0c8;"></div><div style="left:510px;top:0px;width:60px;height:15px;overflow:hidden;border-right:1px solid #d4d0c8;"></div><div style="left:570px;top:0px;width:60px;height:15px;overflow:hidden;border-right:1px solid #d4d0c8;"></div><div style="left:630px;top:0px;width:60px;height:15px;overflow:hidden;border-right:1px solid #d4d0c8;"></div></div><div style="left:0px;top:287px;width:660px;height:15px;border-bottom:1px solid #d4d0c8;"><div class="t" style="left:16px;top:0px;color:#8a867e">;;; Zone-based firewall classes below this line</div></div><div style="left:0px;top:302px;width:660px;height:15px;border-bottom:1px solid #d4d0c8;"><div style="left:0px;top:0px;width:25px;height:15px;overflow:hidden;border-right:1px solid #d4d0c8;"><div class="t" style="left:0px;top:0px;width:22px;text-align:right;color:#8a867e">17</div></div><div style="left:25px;top:0px;width:22px;height:15px;overflow:hidden;border-right:1px solid #d4d0c8;"><div class="t" style="left:2px;top:0px;color:#8a867e">X</div></div><div style="left:47px;top:0px;width:75px;height:15px;overflow:hidden;border-right:1px solid #d4d0c8;"><svg style="position:absolute;left:2px;top:1px" width="13" height="13" viewBox="0 0 13 13"><path d="M1.5 0.5h6l4 4v8h-10z" fill="url(#gPage)" stroke="#90a0a0"/><path d="M7.5 0.5v4h4" fill="none" stroke="#90a0a0"/></svg><div class="t" style="left:19px;top:0px;color:#8a867e">passthro...</div></div><div style="left:122px;top:0px;width:194px;height:15px;overflow:hidden;border-right:1px solid #d4d0c8;"><div class="t" style="left:2px;top:0px;color:#8a867e">unused</div></div><div style="left:316px;top:0px;width:84px;height:15px;overflow:hidden;border-right:1px solid #d4d0c8;"></div><div style="left:400px;top:0px;width:70px;height:15px;overflow:hidden;border-right:1px solid #d4d0c8;"></div><div style="left:470px;top:0px;width:40px;height:15px;overflow:hidden;border-right:1px solid #d4d0c8;"></div><div style="left:510px;top:0px;width:60px;height:15px;overflow:hidden;border-right:1px solid #d4d0c8;"></div><div style="left:570px;top:0px;width:60px;height:15px;overflow:hidden;border-right:1px solid #d4d0c8;"></div><div style="left:630px;top:0px;width:60px;height:15px;overflow:hidden;border-right:1px solid #d4d0c8;"></div></div><div style="left:0px;top:317px;width:660px;height:15px;border-bottom:1px solid #d4d0c8;"><div style="left:0px;top:0px;width:25px;height:15px;overflow:hidden;border-right:1px solid #d4d0c8;"><div class="t" style="left:0px;top:0px;width:22px;text-align:right;color:#000">18</div></div><div style="left:25px;top:0px;width:22px;height:15px;overflow:hidden;border-right:1px solid #d4d0c8;"></div><div style="left:47px;top:0px;width:75px;height:15px;overflow:hidden;border-right:1px solid #d4d0c8;"><svg style="position:absolute;left:2px;top:1px" width="13" height="13" viewBox="0 0 13 13"><path d="M0.5 6l2.5-2.5 2.5 2.5 5-5 2.5 2.5-7.5 7.5z" fill="#30d020" stroke="#20a010" stroke-width="0.8"/></svg><div class="t" style="left:19px;top:0px;color:#000">accept</div></div><div style="left:122px;top:0px;width:194px;height:15px;overflow:hidden;border-right:1px solid #d4d0c8;"><div class="t" style="left:2px;top:0px;color:#000">allow-icmp</div></div><div style="left:316px;top:0px;width:84px;height:15px;overflow:hidden;border-right:1px solid #d4d0c8;"></div><div style="left:400px;top:0px;width:70px;height:15px;overflow:hidden;border-right:1px solid #d4d0c8;"></div><div style="left:470px;top:0px;width:40px;height:15px;overflow:hidden;border-right:1px solid #d4d0c8;"><div class="t" style="left:2px;top:0px;color:#000">1 (ic...</div></div><div style="left:510px;top:0px;width:60px;height:15px;overflow:hidden;border-right:1px solid #d4d0c8;"></div><div style="left:570px;top:0px;width:60px;height:15px;overflow:hidden;border-right:1px solid #d4d0c8;"></div><div style="left:630px;top:0px;width:60px;height:15px;overflow:hidden;border-right:1px solid #d4d0c8;"></div></div><div style="left:0px;top:332px;width:660px;height:15px;border-bottom:1px solid #d4d0c8;"><div style="left:0px;top:0px;width:25px;height:15px;overflow:hidden;border-right:1px solid #d4d0c8;"><div class="t" style="left:0px;top:0px;width:22px;text-align:right;color:#000">19</div></div><div style="left:25px;top:0px;width:22px;height:15px;overflow:hidden;border-right:1px solid #d4d0c8;"></div><div style="left:47px;top:0px;width:75px;height:15px;overflow:hidden;border-right:1px solid #d4d0c8;"><svg style="position:absolute;left:2px;top:1px" width="13" height="13" viewBox="0 0 13 13"><path d="M0.5 6l5-5.5v3.5h6v4h-6v4z" fill="url(#gRet)" stroke="#602070" stroke-width="0.7"/><path d="M8 4.5q0-2.5 2.5-3.5" stroke="#802090" stroke-width="1.3" fill="none"/></svg><div class="t" style="left:19px;top:0px;color:#000">return</div></div><div style="left:122px;top:0px;width:194px;height:15px;overflow:hidden;border-right:1px solid #d4d0c8;"><div class="t" style="left:2px;top:0px;color:#000">allow-icmp</div></div><div style="left:316px;top:0px;width:84px;height:15px;overflow:hidden;border-right:1px solid #d4d0c8;"></div><div style="left:400px;top:0px;width:70px;height:15px;overflow:hidden;border-right:1px solid #d4d0c8;"></div><div style="left:470px;top:0px;width:40px;height:15px;overflow:hidden;border-right:1px solid #d4d0c8;"></div><div style="left:510px;top:0px;width:60px;height:15px;overflow:hidden;border-right:1px solid #d4d0c8;"></div><div style="left:570px;top:0px;width:60px;height:15px;overflow:hidden;border-right:1px solid #d4d0c8;"></div><div style="left:630px;top:0px;width:60px;height:15px;overflow:hidden;border-right:1px solid #d4d0c8;"></div></div><div style="left:0px;top:347px;width:660px;height:15px;border-bottom:1px solid #d4d0c8;"><div style="left:0px;top:0px;width:25px;height:15px;overflow:hidden;border-right:1px solid #d4d0c8;"><div class="t" style="left:0px;top:0px;width:22px;text-align:right;color:#000">20</div></div><div style="left:25px;top:0px;width:22px;height:15px;overflow:hidden;border-right:1px solid #d4d0c8;"></div><div style="left:47px;top:0px;width:75px;height:15px;overflow:hidden;border-right:1px solid #d4d0c8;"><svg style="position:absolute;left:2px;top:1px" width="13" height="13" viewBox="0 0 13 13"><path d="M0.5 6l2.5-2.5 2.5 2.5 5-5 2.5 2.5-7.5 7.5z" fill="#30d020" stroke="#20a010" stroke-width="0.8"/></svg><div class="t" style="left:19px;top:0px;color:#000">accept</div></div><div style="left:122px;top:0px;width:194px;height:15px;overflow:hidden;border-right:1px solid #d4d0c8;"><div class="t" style="left:2px;top:0px;color:#000">allow-igmp</div></div><div style="left:316px;top:0px;width:84px;height:15px;overflow:hidden;border-right:1px solid #d4d0c8;"></div><div style="left:400px;top:0px;width:70px;height:15px;overflow:hidden;border-right:1px solid #d4d0c8;"></div><div style="left:470px;top:0px;width:40px;height:15px;overflow:hidden;border-right:1px solid #d4d0c8;"><div class="t" style="left:2px;top:0px;color:#000">2 (ig...</div></div><div style="left:510px;top:0px;width:60px;height:15px;overflow:hidden;border-right:1px solid #d4d0c8;"></div><div style="left:570px;top:0px;width:60px;height:15px;overflow:hidden;border-right:1px solid #d4d0c8;"></div><div style="left:630px;top:0px;width:60px;height:15px;overflow:hidden;border-right:1px solid #d4d0c8;"></div></div><div style="left:0px;top:362px;width:660px;height:15px;border-bottom:1px solid #d4d0c8;"><div style="left:0px;top:0px;width:25px;height:15px;overflow:hidden;border-right:1px solid #d4d0c8;"><div class="t" style="left:0px;top:0px;width:22px;text-align:right;color:#000">21</div></div><div style="left:25px;top:0px;width:22px;height:15px;overflow:hidden;border-right:1px solid #d4d0c8;"></div><div style="left:47px;top:0px;width:75px;height:15px;overflow:hidden;border-right:1px solid #d4d0c8;"><svg style="position:absolute;left:2px;top:1px" width="13" height="13" viewBox="0 0 13 13"><path d="M0.5 6l5-5.5v3.5h6v4h-6v4z" fill="url(#gRet)" stroke="#602070" stroke-width="0.7"/><path d="M8 4.5q0-2.5 2.5-3.5" stroke="#802090" stroke-width="1.3" fill="none"/></svg><div class="t" style="left:19px;top:0px;color:#000">return</div></div><div style="left:122px;top:0px;width:194px;height:15px;overflow:hidden;border-right:1px solid #d4d0c8;"><div class="t" style="left:2px;top:0px;color:#000">allow-igmp</div></div><div style="left:316px;top:0px;width:84px;height:15px;overflow:hidden;border-right:1px solid #d4d0c8;"></div><div style="left:400px;top:0px;width:70px;height:15px;overflow:hidden;border-right:1px solid #d4d0c8;"></div><div style="left:470px;top:0px;width:40px;height:15px;overflow:hidden;border-right:1px solid #d4d0c8;"></div><div style="left:510px;top:0px;width:60px;height:15px;overflow:hidden;border-right:1px solid #d4d0c8;"></div><div style="left:570px;top:0px;width:60px;height:15px;overflow:hidden;border-right:1px solid #d4d0c8;"></div><div style="left:630px;top:0px;width:60px;height:15px;overflow:hidden;border-right:1px solid #d4d0c8;"></div></div><div style="left:0px;top:377px;width:660px;height:15px;border-bottom:1px solid #d4d0c8;"><div style="left:0px;top:0px;width:25px;height:15px;overflow:hidden;border-right:1px solid #d4d0c8;"><div class="t" style="left:0px;top:0px;width:22px;text-align:right;color:#000">22</div></div><div style="left:25px;top:0px;width:22px;height:15px;overflow:hidden;border-right:1px solid #d4d0c8;"></div><div style="left:47px;top:0px;width:75px;height:15px;overflow:hidden;border-right:1px solid #d4d0c8;"><svg style="position:absolute;left:2px;top:1px" width="13" height="13" viewBox="0 0 13 13"><path d="M0.5 6l2.5-2.5 2.5 2.5 5-5 2.5 2.5-7.5 7.5z" fill="#30d020" stroke="#20a010" stroke-width="0.8"/></svg><div class="t" style="left:19px;top:0px;color:#000">accept</div></div><div style="left:122px;top:0px;width:194px;height:15px;overflow:hidden;border-right:1px solid #d4d0c8;"><div class="t" style="left:2px;top:0px;color:#000">allow-pim</div></div><div style="left:316px;top:0px;width:84px;height:15px;overflow:hidden;border-right:1px solid #d4d0c8;"></div><div style="left:400px;top:0px;width:70px;height:15px;overflow:hidden;border-right:1px solid #d4d0c8;"></div><div style="left:470px;top:0px;width:40px;height:15px;overflow:hidden;border-right:1px solid #d4d0c8;"><div class="t" style="left:2px;top:0px;color:#000">103 (...</div></div><div style="left:510px;top:0px;width:60px;height:15px;overflow:hidden;border-right:1px solid #d4d0c8;"></div><div style="left:570px;top:0px;width:60px;height:15px;overflow:hidden;border-right:1px solid #d4d0c8;"></div><div style="left:630px;top:0px;width:60px;height:15px;overflow:hidden;border-right:1px solid #d4d0c8;"></div></div><div style="left:0px;top:392px;width:660px;height:15px;border-bottom:1px solid #d4d0c8;"><div style="left:0px;top:0px;width:25px;height:15px;overflow:hidden;border-right:1px solid #d4d0c8;"><div class="t" style="left:0px;top:0px;width:22px;text-align:right;color:#000">23</div></div><div style="left:25px;top:0px;width:22px;height:15px;overflow:hidden;border-right:1px solid #d4d0c8;"></div><div style="left:47px;top:0px;width:75px;height:15px;overflow:hidden;border-right:1px solid #d4d0c8;"><svg style="position:absolute;left:2px;top:1px" width="13" height="13" viewBox="0 0 13 13"><path d="M0.5 6l5-5.5v3.5h6v4h-6v4z" fill="url(#gRet)" stroke="#602070" stroke-width="0.7"/><path d="M8 4.5q0-2.5 2.5-3.5" stroke="#802090" stroke-width="1.3" fill="none"/></svg><div class="t" style="left:19px;top:0px;color:#000">return</div></div><div style="left:122px;top:0px;width:194px;height:15px;overflow:hidden;border-right:1px solid #d4d0c8;"><div class="t" style="left:2px;top:0px;color:#000">allow-pim</div></div><div style="left:316px;top:0px;width:84px;height:15px;overflow:hidden;border-right:1px solid #d4d0c8;"></div><div style="left:400px;top:0px;width:70px;height:15px;overflow:hidden;border-right:1px solid #d4d0c8;"></div><div style="left:470px;top:0px;width:40px;height:15px;overflow:hidden;border-right:1px solid #d4d0c8;"></div><div style="left:510px;top:0px;width:60px;height:15px;overflow:hidden;border-right:1px solid #d4d0c8;"></div><div style="left:570px;top:0px;width:60px;height:15px;overflow:hidden;border-right:1px solid #d4d0c8;"></div><div style="left:630px;top:0px;width:60px;height:15px;overflow:hidden;border-right:1px solid #d4d0c8;"></div></div><div style="left:0px;top:407px;width:660px;height:15px;border-bottom:1px solid #d4d0c8;"><div style="left:0px;top:0px;width:25px;height:15px;overflow:hidden;border-right:1px solid #d4d0c8;"><div class="t" style="left:0px;top:0px;width:22px;text-align:right;color:#000">24</div></div><div style="left:25px;top:0px;width:22px;height:15px;overflow:hidden;border-right:1px solid #d4d0c8;"></div><div style="left:47px;top:0px;width:75px;height:15px;overflow:hidden;border-right:1px solid #d4d0c8;"><svg style="position:absolute;left:2px;top:1px" width="13" height="13" viewBox="0 0 13 13"><path d="M0.5 6l2.5-2.5 2.5 2.5 5-5 2.5 2.5-7.5 7.5z" fill="#30d020" stroke="#20a010" stroke-width="0.8"/></svg><div class="t" style="left:19px;top:0px;color:#000">accept</div></div><div style="left:122px;top:0px;width:194px;height:15px;overflow:hidden;border-right:1px solid #d4d0c8;"><div class="t" style="left:2px;top:0px;color:#000">allow-management</div></div><div style="left:316px;top:0px;width:84px;height:15px;overflow:hidden;border-right:1px solid #d4d0c8;"></div><div style="left:400px;top:0px;width:70px;height:15px;overflow:hidden;border-right:1px solid #d4d0c8;"></div><div style="left:470px;top:0px;width:40px;height:15px;overflow:hidden;border-right:1px solid #d4d0c8;"><div class="t" style="left:2px;top:0px;color:#000">6 (tcp)</div></div><div style="left:510px;top:0px;width:60px;height:15px;overflow:hidden;border-right:1px solid #d4d0c8;"></div><div style="left:570px;top:0px;width:60px;height:15px;overflow:hidden;border-right:1px solid #d4d0c8;"></div><div style="left:630px;top:0px;width:60px;height:15px;overflow:hidden;border-right:1px solid #d4d0c8;"></div></div><div style="left:0px;top:422px;width:660px;height:15px;border-bottom:1px solid #d4d0c8;"><div style="left:0px;top:0px;width:25px;height:15px;overflow:hidden;border-right:1px solid #d4d0c8;"><div class="t" style="left:0px;top:0px;width:22px;text-align:right;color:#000">25</div></div><div style="left:25px;top:0px;width:22px;height:15px;overflow:hidden;border-right:1px solid #d4d0c8;"></div><div style="left:47px;top:0px;width:75px;height:15px;overflow:hidden;border-right:1px solid #d4d0c8;"><svg style="position:absolute;left:2px;top:1px" width="13" height="13" viewBox="0 0 13 13"><path d="M0.5 6l5-5.5v3.5h6v4h-6v4z" fill="url(#gRet)" stroke="#602070" stroke-width="0.7"/><path d="M8 4.5q0-2.5 2.5-3.5" stroke="#802090" stroke-width="1.3" fill="none"/></svg><div class="t" style="left:19px;top:0px;color:#000">return</div></div><div style="left:122px;top:0px;width:194px;height:15px;overflow:hidden;border-right:1px solid #d4d0c8;"><div class="t" style="left:2px;top:0px;color:#000">allow-management</div></div><div style="left:316px;top:0px;width:84px;height:15px;overflow:hidden;border-right:1px solid #d4d0c8;"></div><div style="left:400px;top:0px;width:70px;height:15px;overflow:hidden;border-right:1px solid #d4d0c8;"></div><div style="left:470px;top:0px;width:40px;height:15px;overflow:hidden;border-right:1px solid #d4d0c8;"></div><div style="left:510px;top:0px;width:60px;height:15px;overflow:hidden;border-right:1px solid #d4d0c8;"></div><div style="left:570px;top:0px;width:60px;height:15px;overflow:hidden;border-right:1px solid #d4d0c8;"></div><div style="left:630px;top:0px;width:60px;height:15px;overflow:hidden;border-right:1px solid #d4d0c8;"></div></div><div style="left:0px;top:437px;width:660px;height:15px;border-bottom:1px solid #d4d0c8;"><div style="left:0px;top:0px;width:25px;height:15px;overflow:hidden;border-right:1px solid #d4d0c8;"><div class="t" style="left:0px;top:0px;width:22px;text-align:right;color:#000">26</div></div><div style="left:25px;top:0px;width:22px;height:15px;overflow:hidden;border-right:1px solid #d4d0c8;"></div><div style="left:47px;top:0px;width:75px;height:15px;overflow:hidden;border-right:1px solid #d4d0c8;"><svg style="position:absolute;left:2px;top:1px" width="13" height="13" viewBox="0 0 13 13"><path d="M0.5 6l2.5-2.5 2.5 2.5 5-5 2.5 2.5-7.5 7.5z" fill="#30d020" stroke="#20a010" stroke-width="0.8"/></svg><div class="t" style="left:19px;top:0px;color:#000">accept</div></div><div style="left:122px;top:0px;width:194px;height:15px;overflow:hidden;border-right:1px solid #d4d0c8;"><div class="t" style="left:2px;top:0px;color:#000">allow-snmp-from-netdata</div></div><div style="left:316px;top:0px;width:84px;height:15px;overflow:hidden;border-right:1px solid #d4d0c8;"><div class="t" style="left:2px;top:0px;color:#000">10.14.88.0/22</div></div><div style="left:400px;top:0px;width:70px;height:15px;overflow:hidden;border-right:1px solid #d4d0c8;"></div><div style="left:470px;top:0px;width:40px;height:15px;overflow:hidden;border-right:1px solid #d4d0c8;"><div class="t" style="left:2px;top:0px;color:#000">17 (u...</div></div><div style="left:510px;top:0px;width:60px;height:15px;overflow:hidden;border-right:1px solid #d4d0c8;"></div><div style="left:570px;top:0px;width:60px;height:15px;overflow:hidden;border-right:1px solid #d4d0c8;"><div class="t" style="left:2px;top:0px;color:#000">161</div></div><div style="left:630px;top:0px;width:60px;height:15px;overflow:hidden;border-right:1px solid #d4d0c8;"></div></div><div style="left:0px;top:452px;width:660px;height:15px;border-bottom:1px solid #d4d0c8;"><div style="left:0px;top:0px;width:25px;height:15px;overflow:hidden;border-right:1px solid #d4d0c8;"><div class="t" style="left:0px;top:0px;width:22px;text-align:right;color:#000">27</div></div><div style="left:25px;top:0px;width:22px;height:15px;overflow:hidden;border-right:1px solid #d4d0c8;"></div><div style="left:47px;top:0px;width:75px;height:15px;overflow:hidden;border-right:1px solid #d4d0c8;"><svg style="position:absolute;left:2px;top:1px" width="13" height="13" viewBox="0 0 13 13"><path d="M0.5 6l5-5.5v3.5h6v4h-6v4z" fill="url(#gRet)" stroke="#602070" stroke-width="0.7"/><path d="M8 4.5q0-2.5 2.5-3.5" stroke="#802090" stroke-width="1.3" fill="none"/></svg><div class="t" style="left:19px;top:0px;color:#000">return</div></div><div style="left:122px;top:0px;width:194px;height:15px;overflow:hidden;border-right:1px solid #d4d0c8;"><div class="t" style="left:2px;top:0px;color:#000">allow-snmp-from-netdata</div></div><div style="left:316px;top:0px;width:84px;height:15px;overflow:hidden;border-right:1px solid #d4d0c8;"></div><div style="left:400px;top:0px;width:70px;height:15px;overflow:hidden;border-right:1px solid #d4d0c8;"></div><div style="left:470px;top:0px;width:40px;height:15px;overflow:hidden;border-right:1px solid #d4d0c8;"></div><div style="left:510px;top:0px;width:60px;height:15px;overflow:hidden;border-right:1px solid #d4d0c8;"></div><div style="left:570px;top:0px;width:60px;height:15px;overflow:hidden;border-right:1px solid #d4d0c8;"></div><div style="left:630px;top:0px;width:60px;height:15px;overflow:hidden;border-right:1px solid #d4d0c8;"></div></div><div style="left:0px;top:467px;width:660px;height:15px;border-bottom:1px solid #d4d0c8;"><div style="left:0px;top:0px;width:25px;height:15px;overflow:hidden;border-right:1px solid #d4d0c8;"><div class="t" style="left:0px;top:0px;width:22px;text-align:right;color:#000">28</div></div><div style="left:25px;top:0px;width:22px;height:15px;overflow:hidden;border-right:1px solid #d4d0c8;"></div><div style="left:47px;top:0px;width:75px;height:15px;overflow:hidden;border-right:1px solid #d4d0c8;"><svg style="position:absolute;left:2px;top:1px" width="13" height="13" viewBox="0 0 13 13"><path d="M0.5 6l2.5-2.5 2.5 2.5 5-5 2.5 2.5-7.5 7.5z" fill="#30d020" stroke="#20a010" stroke-width="0.8"/></svg><div class="t" style="left:19px;top:0px;color:#000">accept</div></div><div style="left:122px;top:0px;width:194px;height:15px;overflow:hidden;border-right:1px solid #d4d0c8;"><div class="t" style="left:2px;top:0px;color:#000">allow-synology</div></div><div style="left:316px;top:0px;width:84px;height:15px;overflow:hidden;border-right:1px solid #d4d0c8;"></div><div style="left:400px;top:0px;width:70px;height:15px;overflow:hidden;border-right:1px solid #d4d0c8;"></div><div style="left:470px;top:0px;width:40px;height:15px;overflow:hidden;border-right:1px solid #d4d0c8;"><div class="t" style="left:2px;top:0px;color:#000">6 (tcp)</div></div><div style="left:510px;top:0px;width:60px;height:15px;overflow:hidden;border-right:1px solid #d4d0c8;"></div><div style="left:570px;top:0px;width:60px;height:15px;overflow:hidden;border-right:1px solid #d4d0c8;"><div class="t" style="left:2px;top:0px;color:#000">5000,5001</div></div><div style="left:630px;top:0px;width:60px;height:15px;overflow:hidden;border-right:1px solid #d4d0c8;"></div></div><div style="left:0px;top:482px;width:660px;height:15px;border-bottom:1px solid #d4d0c8;"><div style="left:0px;top:0px;width:25px;height:15px;overflow:hidden;border-right:1px solid #d4d0c8;"><div class="t" style="left:0px;top:0px;width:22px;text-align:right;color:#000">29</div></div><div style="left:25px;top:0px;width:22px;height:15px;overflow:hidden;border-right:1px solid #d4d0c8;"></div><div style="left:47px;top:0px;width:75px;height:15px;overflow:hidden;border-right:1px solid #d4d0c8;"><svg style="position:absolute;left:2px;top:1px" width="13" height="13" viewBox="0 0 13 13"><path d="M0.5 6l5-5.5v3.5h6v4h-6v4z" fill="url(#gRet)" stroke="#602070" stroke-width="0.7"/><path d="M8 4.5q0-2.5 2.5-3.5" stroke="#802090" stroke-width="1.3" fill="none"/></svg><div class="t" style="left:19px;top:0px;color:#000">return</div></div><div style="left:122px;top:0px;width:194px;height:15px;overflow:hidden;border-right:1px solid #d4d0c8;"><div class="t" style="left:2px;top:0px;color:#000">allow-synology</div></div><div style="left:316px;top:0px;width:84px;height:15px;overflow:hidden;border-right:1px solid #d4d0c8;"></div><div style="left:400px;top:0px;width:70px;height:15px;overflow:hidden;border-right:1px solid #d4d0c8;"></div><div style="left:470px;top:0px;width:40px;height:15px;overflow:hidden;border-right:1px solid #d4d0c8;"></div><div style="left:510px;top:0px;width:60px;height:15px;overflow:hidden;border-right:1px solid #d4d0c8;"></div><div style="left:570px;top:0px;width:60px;height:15px;overflow:hidden;border-right:1px solid #d4d0c8;"></div><div style="left:630px;top:0px;width:60px;height:15px;overflow:hidden;border-right:1px solid #d4d0c8;"></div></div><div style="left:0px;top:497px;width:660px;height:15px;border-bottom:1px solid #d4d0c8;"><div style="left:0px;top:0px;width:25px;height:15px;overflow:hidden;border-right:1px solid #d4d0c8;"><div class="t" style="left:0px;top:0px;width:22px;text-align:right;color:#000">30</div></div><div style="left:25px;top:0px;width:22px;height:15px;overflow:hidden;border-right:1px solid #d4d0c8;"></div><div style="left:47px;top:0px;width:75px;height:15px;overflow:hidden;border-right:1px solid #d4d0c8;"><svg style="position:absolute;left:2px;top:1px" width="13" height="13" viewBox="0 0 13 13"><path d="M0.5 6l2.5-2.5 2.5 2.5 5-5 2.5 2.5-7.5 7.5z" fill="#30d020" stroke="#20a010" stroke-width="0.8"/></svg><div class="t" style="left:19px;top:0px;color:#000">accept</div></div><div style="left:122px;top:0px;width:194px;height:15px;overflow:hidden;border-right:1px solid #d4d0c8;"><div class="t" style="left:2px;top:0px;color:#000">allow-http-https</div></div><div style="left:316px;top:0px;width:84px;height:15px;overflow:hidden;border-right:1px solid #d4d0c8;"></div><div style="left:400px;top:0px;width:70px;height:15px;overflow:hidden;border-right:1px solid #d4d0c8;"></div><div style="left:470px;top:0px;width:40px;height:15px;overflow:hidden;border-right:1px solid #d4d0c8;"><div class="t" style="left:2px;top:0px;color:#000">6 (tcp)</div></div><div style="left:510px;top:0px;width:60px;height:15px;overflow:hidden;border-right:1px solid #d4d0c8;"></div><div style="left:570px;top:0px;width:60px;height:15px;overflow:hidden;border-right:1px solid #d4d0c8;"><div class="t" style="left:2px;top:0px;color:#000">80,443</div></div><div style="left:630px;top:0px;width:60px;height:15px;overflow:hidden;border-right:1px solid #d4d0c8;"></div></div><div style="left:0px;top:512px;width:660px;height:15px;border-bottom:1px solid #d4d0c8;"><div style="left:0px;top:0px;width:25px;height:15px;overflow:hidden;border-right:1px solid #d4d0c8;"><div class="t" style="left:0px;top:0px;width:22px;text-align:right;color:#000">31</div></div><div style="left:25px;top:0px;width:22px;height:15px;overflow:hidden;border-right:1px solid #d4d0c8;"></div><div style="left:47px;top:0px;width:75px;height:15px;overflow:hidden;border-right:1px solid #d4d0c8;"><svg style="position:absolute;left:2px;top:1px" width="13" height="13" viewBox="0 0 13 13"><path d="M0.5 6l5-5.5v3.5h6v4h-6v4z" fill="url(#gRet)" stroke="#602070" stroke-width="0.7"/><path d="M8 4.5q0-2.5 2.5-3.5" stroke="#802090" stroke-width="1.3" fill="none"/></svg><div class="t" style="left:19px;top:0px;color:#000">return</div></div><div style="left:122px;top:0px;width:194px;height:15px;overflow:hidden;border-right:1px solid #d4d0c8;"><div class="t" style="left:2px;top:0px;color:#000">allow-http-https</div></div><div style="left:316px;top:0px;width:84px;height:15px;overflow:hidden;border-right:1px solid #d4d0c8;"></div><div style="left:400px;top:0px;width:70px;height:15px;overflow:hidden;border-right:1px solid #d4d0c8;"></div><div style="left:470px;top:0px;width:40px;height:15px;overflow:hidden;border-right:1px solid #d4d0c8;"></div><div style="left:510px;top:0px;width:60px;height:15px;overflow:hidden;border-right:1px solid #d4d0c8;"></div><div style="left:570px;top:0px;width:60px;height:15px;overflow:hidden;border-right:1px solid #d4d0c8;"></div><div style="left:630px;top:0px;width:60px;height:15px;overflow:hidden;border-right:1px solid #d4d0c8;"></div></div><div style="left:0px;top:527px;width:660px;height:15px;border-bottom:1px solid #d4d0c8;"><div style="left:0px;top:0px;width:25px;height:15px;overflow:hidden;border-right:1px solid #d4d0c8;"><div class="t" style="left:0px;top:0px;width:22px;text-align:right;color:#000">32</div></div><div style="left:25px;top:0px;width:22px;height:15px;overflow:hidden;border-right:1px solid #d4d0c8;"></div><div style="left:47px;top:0px;width:75px;height:15px;overflow:hidden;border-right:1px solid #d4d0c8;"><svg style="position:absolute;left:2px;top:1px" width="13" height="13" viewBox="0 0 13 13"><path d="M0.5 6l2.5-2.5 2.5 2.5 5-5 2.5 2.5-7.5 7.5z" fill="#30d020" stroke="#20a010" stroke-width="0.8"/></svg><div class="t" style="left:19px;top:0px;color:#000">accept</div></div><div style="left:122px;top:0px;width:194px;height:15px;overflow:hidden;border-right:1px solid #d4d0c8;"><div class="t" style="left:2px;top:0px;color:#000">allow-http-https-to-reverse-proxy</div></div><div style="left:316px;top:0px;width:84px;height:15px;overflow:hidden;border-right:1px solid #d4d0c8;"></div><div style="left:400px;top:0px;width:70px;height:15px;overflow:hidden;border-right:1px solid #d4d0c8;"><div class="t" style="left:2px;top:0px;color:#000">10.12.88.3</div></div><div style="left:470px;top:0px;width:40px;height:15px;overflow:hidden;border-right:1px solid #d4d0c8;"><div class="t" style="left:2px;top:0px;color:#000">6 (tcp)</div></div><div style="left:510px;top:0px;width:60px;height:15px;overflow:hidden;border-right:1px solid #d4d0c8;"></div><div style="left:570px;top:0px;width:60px;height:15px;overflow:hidden;border-right:1px solid #d4d0c8;"><div class="t" style="left:2px;top:0px;color:#000">80,443</div></div><div style="left:630px;top:0px;width:60px;height:15px;overflow:hidden;border-right:1px solid #d4d0c8;"></div></div><div style="left:0px;top:542px;width:660px;height:15px;border-bottom:1px solid #d4d0c8;"><div style="left:0px;top:0px;width:25px;height:15px;overflow:hidden;border-right:1px solid #d4d0c8;"><div class="t" style="left:0px;top:0px;width:22px;text-align:right;color:#000">33</div></div><div style="left:25px;top:0px;width:22px;height:15px;overflow:hidden;border-right:1px solid #d4d0c8;"></div><div style="left:47px;top:0px;width:75px;height:15px;overflow:hidden;border-right:1px solid #d4d0c8;"><svg style="position:absolute;left:2px;top:1px" width="13" height="13" viewBox="0 0 13 13"><path d="M0.5 6l5-5.5v3.5h6v4h-6v4z" fill="url(#gRet)" stroke="#602070" stroke-width="0.7"/><path d="M8 4.5q0-2.5 2.5-3.5" stroke="#802090" stroke-width="1.3" fill="none"/></svg><div class="t" style="left:19px;top:0px;color:#000">return</div></div><div style="left:122px;top:0px;width:194px;height:15px;overflow:hidden;border-right:1px solid #d4d0c8;"><div class="t" style="left:2px;top:0px;color:#000">allow-http-https-to-reverse-proxy</div></div><div style="left:316px;top:0px;width:84px;height:15px;overflow:hidden;border-right:1px solid #d4d0c8;"></div><div style="left:400px;top:0px;width:70px;height:15px;overflow:hidden;border-right:1px solid #d4d0c8;"></div><div style="left:470px;top:0px;width:40px;height:15px;overflow:hidden;border-right:1px solid #d4d0c8;"></div><div style="left:510px;top:0px;width:60px;height:15px;overflow:hidden;border-right:1px solid #d4d0c8;"></div><div style="left:570px;top:0px;width:60px;height:15px;overflow:hidden;border-right:1px solid #d4d0c8;"></div><div style="left:630px;top:0px;width:60px;height:15px;overflow:hidden;border-right:1px solid #d4d0c8;"></div></div><div style="left:0px;top:557px;width:660px;height:15px;border-bottom:1px solid #d4d0c8;"><div style="left:0px;top:0px;width:25px;height:15px;overflow:hidden;border-right:1px solid #d4d0c8;"><div class="t" style="left:0px;top:0px;width:22px;text-align:right;color:#000">34</div></div><div style="left:25px;top:0px;width:22px;height:15px;overflow:hidden;border-right:1px solid #d4d0c8;"></div><div style="left:47px;top:0px;width:75px;height:15px;overflow:hidden;border-right:1px solid #d4d0c8;"><svg style="position:absolute;left:2px;top:1px" width="13" height="13" viewBox="0 0 13 13"><path d="M0.5 6l2.5-2.5 2.5 2.5 5-5 2.5 2.5-7.5 7.5z" fill="#30d020" stroke="#20a010" stroke-width="0.8"/></svg><div class="t" style="left:19px;top:0px;color:#000">accept</div></div><div style="left:122px;top:0px;width:194px;height:15px;overflow:hidden;border-right:1px solid #d4d0c8;"><div class="t" style="left:2px;top:0px;color:#000">allow-ipsec</div></div><div style="left:316px;top:0px;width:84px;height:15px;overflow:hidden;border-right:1px solid #d4d0c8;"></div><div style="left:400px;top:0px;width:70px;height:15px;overflow:hidden;border-right:1px solid #d4d0c8;"></div><div style="left:470px;top:0px;width:40px;height:15px;overflow:hidden;border-right:1px solid #d4d0c8;"><div class="t" style="left:2px;top:0px;color:#000">17 (u...</div></div><div style="left:510px;top:0px;width:60px;height:15px;overflow:hidden;border-right:1px solid #d4d0c8;"></div><div style="left:570px;top:0px;width:60px;height:15px;overflow:hidden;border-right:1px solid #d4d0c8;"><div class="t" style="left:2px;top:0px;color:#000">500,4500</div></div><div style="left:630px;top:0px;width:60px;height:15px;overflow:hidden;border-right:1px solid #d4d0c8;"></div></div><div style="left:0px;top:572px;width:660px;height:15px;border-bottom:1px solid #d4d0c8;"><div style="left:0px;top:0px;width:25px;height:15px;overflow:hidden;border-right:1px solid #d4d0c8;"><div class="t" style="left:0px;top:0px;width:22px;text-align:right;color:#000">35</div></div><div style="left:25px;top:0px;width:22px;height:15px;overflow:hidden;border-right:1px solid #d4d0c8;"></div><div style="left:47px;top:0px;width:75px;height:15px;overflow:hidden;border-right:1px solid #d4d0c8;"><svg style="position:absolute;left:2px;top:1px" width="13" height="13" viewBox="0 0 13 13"><path d="M0.5 6l2.5-2.5 2.5 2.5 5-5 2.5 2.5-7.5 7.5z" fill="#30d020" stroke="#20a010" stroke-width="0.8"/></svg><div class="t" style="left:19px;top:0px;color:#000">accept</div></div><div style="left:122px;top:0px;width:194px;height:15px;overflow:hidden;border-right:1px solid #d4d0c8;"><div class="t" style="left:2px;top:0px;color:#000">allow-ipsec</div></div><div style="left:316px;top:0px;width:84px;height:15px;overflow:hidden;border-right:1px solid #d4d0c8;"></div><div style="left:400px;top:0px;width:70px;height:15px;overflow:hidden;border-right:1px solid #d4d0c8;"></div><div style="left:470px;top:0px;width:40px;height:15px;overflow:hidden;border-right:1px solid #d4d0c8;"><div class="t" style="left:2px;top:0px;color:#000">50 (i...</div></div><div style="left:510px;top:0px;width:60px;height:15px;overflow:hidden;border-right:1px solid #d4d0c8;"></div><div style="left:570px;top:0px;width:60px;height:15px;overflow:hidden;border-right:1px solid #d4d0c8;"></div><div style="left:630px;top:0px;width:60px;height:15px;overflow:hidden;border-right:1px solid #d4d0c8;"></div></div><div style="left:0px;top:587px;width:660px;height:15px;border-bottom:1px solid #d4d0c8;"><div style="left:0px;top:0px;width:25px;height:15px;overflow:hidden;border-right:1px solid #d4d0c8;"><div class="t" style="left:0px;top:0px;width:22px;text-align:right;color:#000">36</div></div><div style="left:25px;top:0px;width:22px;height:15px;overflow:hidden;border-right:1px solid #d4d0c8;"></div><div style="left:47px;top:0px;width:75px;height:15px;overflow:hidden;border-right:1px solid #d4d0c8;"><svg style="position:absolute;left:2px;top:1px" width="13" height="13" viewBox="0 0 13 13"><path d="M0.5 6l5-5.5v3.5h6v4h-6v4z" fill="url(#gRet)" stroke="#602070" stroke-width="0.7"/><path d="M8 4.5q0-2.5 2.5-3.5" stroke="#802090" stroke-width="1.3" fill="none"/></svg><div class="t" style="left:19px;top:0px;color:#000">return</div></div><div style="left:122px;top:0px;width:194px;height:15px;overflow:hidden;border-right:1px solid #d4d0c8;"><div class="t" style="left:2px;top:0px;color:#000">allow-ipsec</div></div><div style="left:316px;top:0px;width:84px;height:15px;overflow:hidden;border-right:1px solid #d4d0c8;"></div><div style="left:400px;top:0px;width:70px;height:15px;overflow:hidden;border-right:1px solid #d4d0c8;"></div><div style="left:470px;top:0px;width:40px;height:15px;overflow:hidden;border-right:1px solid #d4d0c8;"></div><div style="left:510px;top:0px;width:60px;height:15px;overflow:hidden;border-right:1px solid #d4d0c8;"></div><div style="left:570px;top:0px;width:60px;height:15px;overflow:hidden;border-right:1px solid #d4d0c8;"></div><div style="left:630px;top:0px;width:60px;height:15px;overflow:hidden;border-right:1px solid #d4d0c8;"></div></div><div style="left:0px;top:602px;width:660px;height:15px;border-bottom:1px solid #d4d0c8;"><div style="left:0px;top:0px;width:25px;height:15px;overflow:hidden;border-right:1px solid #d4d0c8;"><div class="t" style="left:0px;top:0px;width:22px;text-align:right;color:#000">37</div></div><div style="left:25px;top:0px;width:22px;height:15px;overflow:hidden;border-right:1px solid #d4d0c8;"></div><div style="left:47px;top:0px;width:75px;height:15px;overflow:hidden;border-right:1px solid #d4d0c8;"><svg style="position:absolute;left:2px;top:1px" width="13" height="13" viewBox="0 0 13 13"><path d="M0.5 6l2.5-2.5 2.5 2.5 5-5 2.5 2.5-7.5 7.5z" fill="#30d020" stroke="#20a010" stroke-width="0.8"/></svg><div class="t" style="left:19px;top:0px;color:#000">accept</div></div><div style="left:122px;top:0px;width:194px;height:15px;overflow:hidden;border-right:1px solid #d4d0c8;"><div class="t" style="left:2px;top:0px;color:#000">allow-dynamic-routing</div></div><div style="left:316px;top:0px;width:84px;height:15px;overflow:hidden;border-right:1px solid #d4d0c8;"></div><div style="left:400px;top:0px;width:70px;height:15px;overflow:hidden;border-right:1px solid #d4d0c8;"></div><div style="left:470px;top:0px;width:40px;height:15px;overflow:hidden;border-right:1px solid #d4d0c8;"><div class="t" style="left:2px;top:0px;color:#000">6 (tcp)</div></div><div style="left:510px;top:0px;width:60px;height:15px;overflow:hidden;border-right:1px solid #d4d0c8;"></div><div style="left:570px;top:0px;width:60px;height:15px;overflow:hidden;border-right:1px solid #d4d0c8;"><div class="t" style="left:2px;top:0px;color:#000">179</div></div><div style="left:630px;top:0px;width:60px;height:15px;overflow:hidden;border-right:1px solid #d4d0c8;"></div></div><div style="left:0px;top:617px;width:660px;height:15px;border-bottom:1px solid #d4d0c8;"><div style="left:0px;top:0px;width:25px;height:15px;overflow:hidden;border-right:1px solid #d4d0c8;"><div class="t" style="left:0px;top:0px;width:22px;text-align:right;color:#000">38</div></div><div style="left:25px;top:0px;width:22px;height:15px;overflow:hidden;border-right:1px solid #d4d0c8;"></div><div style="left:47px;top:0px;width:75px;height:15px;overflow:hidden;border-right:1px solid #d4d0c8;"><svg style="position:absolute;left:2px;top:1px" width="13" height="13" viewBox="0 0 13 13"><path d="M0.5 6l2.5-2.5 2.5 2.5 5-5 2.5 2.5-7.5 7.5z" fill="#30d020" stroke="#20a010" stroke-width="0.8"/></svg><div class="t" style="left:19px;top:0px;color:#000">accept</div></div><div style="left:122px;top:0px;width:194px;height:15px;overflow:hidden;border-right:1px solid #d4d0c8;"><div class="t" style="left:2px;top:0px;color:#000">allow-dynamic-routing</div></div><div style="left:316px;top:0px;width:84px;height:15px;overflow:hidden;border-right:1px solid #d4d0c8;"></div><div style="left:400px;top:0px;width:70px;height:15px;overflow:hidden;border-right:1px solid #d4d0c8;"></div><div style="left:470px;top:0px;width:40px;height:15px;overflow:hidden;border-right:1px solid #d4d0c8;"><div class="t" style="left:2px;top:0px;color:#000">6 (tcp)</div></div><div style="left:510px;top:0px;width:60px;height:15px;overflow:hidden;border-right:1px solid #d4d0c8;"></div><div style="left:570px;top:0px;width:60px;height:15px;overflow:hidden;border-right:1px solid #d4d0c8;"><div class="t" style="left:2px;top:0px;color:#000">646</div></div><div style="left:630px;top:0px;width:60px;height:15px;overflow:hidden;border-right:1px solid #d4d0c8;"></div></div><div style="left:0px;top:632px;width:660px;height:15px;border-bottom:1px solid #d4d0c8;"><div style="left:0px;top:0px;width:25px;height:15px;overflow:hidden;border-right:1px solid #d4d0c8;"><div class="t" style="left:0px;top:0px;width:22px;text-align:right;color:#000">39</div></div><div style="left:25px;top:0px;width:22px;height:15px;overflow:hidden;border-right:1px solid #d4d0c8;"></div><div style="left:47px;top:0px;width:75px;height:15px;overflow:hidden;border-right:1px solid #d4d0c8;"><svg style="position:absolute;left:2px;top:1px" width="13" height="13" viewBox="0 0 13 13"><path d="M0.5 6l2.5-2.5 2.5 2.5 5-5 2.5 2.5-7.5 7.5z" fill="#30d020" stroke="#20a010" stroke-width="0.8"/></svg><div class="t" style="left:19px;top:0px;color:#000">accept</div></div><div style="left:122px;top:0px;width:194px;height:15px;overflow:hidden;border-right:1px solid #d4d0c8;"><div class="t" style="left:2px;top:0px;color:#000">allow-dynamic-routing</div></div><div style="left:316px;top:0px;width:84px;height:15px;overflow:hidden;border-right:1px solid #d4d0c8;"></div><div style="left:400px;top:0px;width:70px;height:15px;overflow:hidden;border-right:1px solid #d4d0c8;"></div><div style="left:470px;top:0px;width:40px;height:15px;overflow:hidden;border-right:1px solid #d4d0c8;"><div class="t" style="left:2px;top:0px;color:#000">17 (u...</div></div><div style="left:510px;top:0px;width:60px;height:15px;overflow:hidden;border-right:1px solid #d4d0c8;"></div><div style="left:570px;top:0px;width:60px;height:15px;overflow:hidden;border-right:1px solid #d4d0c8;"><div class="t" style="left:2px;top:0px;color:#000">646</div></div><div style="left:630px;top:0px;width:60px;height:15px;overflow:hidden;border-right:1px solid #d4d0c8;"></div></div><div style="left:0px;top:647px;width:660px;height:15px;border-bottom:1px solid #d4d0c8;"><div style="left:0px;top:0px;width:25px;height:15px;overflow:hidden;border-right:1px solid #d4d0c8;"><div class="t" style="left:0px;top:0px;width:22px;text-align:right;color:#000">40</div></div><div style="left:25px;top:0px;width:22px;height:15px;overflow:hidden;border-right:1px solid #d4d0c8;"></div><div style="left:47px;top:0px;width:75px;height:15px;overflow:hidden;border-right:1px solid #d4d0c8;"><svg style="position:absolute;left:2px;top:1px" width="13" height="13" viewBox="0 0 13 13"><path d="M0.5 6l2.5-2.5 2.5 2.5 5-5 2.5 2.5-7.5 7.5z" fill="#30d020" stroke="#20a010" stroke-width="0.8"/></svg><div class="t" style="left:19px;top:0px;color:#000">accept</div></div><div style="left:122px;top:0px;width:194px;height:15px;overflow:hidden;border-right:1px solid #d4d0c8;"><div class="t" style="left:2px;top:0px;color:#000">allow-dynamic-routing</div></div><div style="left:316px;top:0px;width:84px;height:15px;overflow:hidden;border-right:1px solid #d4d0c8;"></div><div style="left:400px;top:0px;width:70px;height:15px;overflow:hidden;border-right:1px solid #d4d0c8;"></div><div style="left:470px;top:0px;width:40px;height:15px;overflow:hidden;border-right:1px solid #d4d0c8;"></div><div style="left:510px;top:0px;width:60px;height:15px;overflow:hidden;border-right:1px solid #d4d0c8;"></div><div style="left:570px;top:0px;width:60px;height:15px;overflow:hidden;border-right:1px solid #d4d0c8;"></div><div style="left:630px;top:0px;width:60px;height:15px;overflow:hidden;border-right:1px solid #d4d0c8;"></div></div><div style="left:0px;top:662px;width:660px;height:15px;border-bottom:1px solid #d4d0c8;"><div style="left:0px;top:0px;width:25px;height:15px;overflow:hidden;border-right:1px solid #d4d0c8;"><div class="t" style="left:0px;top:0px;width:22px;text-align:right;color:#000">41</div></div><div style="left:25px;top:0px;width:22px;height:15px;overflow:hidden;border-right:1px solid #d4d0c8;"></div><div style="left:47px;top:0px;width:75px;height:15px;overflow:hidden;border-right:1px solid #d4d0c8;"><svg style="position:absolute;left:2px;top:1px" width="13" height="13" viewBox="0 0 13 13"><path d="M0.5 6l5-5.5v3.5h6v4h-6v4z" fill="url(#gRet)" stroke="#602070" stroke-width="0.7"/><path d="M8 4.5q0-2.5 2.5-3.5" stroke="#802090" stroke-width="1.3" fill="none"/></svg><div class="t" style="left:19px;top:0px;color:#000">return</div></div><div style="left:122px;top:0px;width:194px;height:15px;overflow:hidden;border-right:1px solid #d4d0c8;"><div class="t" style="left:2px;top:0px;color:#000">allow-dynamic-routing</div></div><div style="left:316px;top:0px;width:84px;height:15px;overflow:hidden;border-right:1px solid #d4d0c8;"></div><div style="left:400px;top:0px;width:70px;height:15px;overflow:hidden;border-right:1px solid #d4d0c8;"></div><div style="left:470px;top:0px;width:40px;height:15px;overflow:hidden;border-right:1px solid #d4d0c8;"></div><div style="left:510px;top:0px;width:60px;height:15px;overflow:hidden;border-right:1px solid #d4d0c8;"></div><div style="left:570px;top:0px;width:60px;height:15px;overflow:hidden;border-right:1px solid #d4d0c8;"></div><div style="left:630px;top:0px;width:60px;height:15px;overflow:hidden;border-right:1px solid #d4d0c8;"></div></div><div style="left:0px;top:677px;width:660px;height:15px;border-bottom:1px solid #d4d0c8;"><div style="left:0px;top:0px;width:25px;height:15px;overflow:hidden;border-right:1px solid #d4d0c8;"><div class="t" style="left:0px;top:0px;width:22px;text-align:right;color:#000">42</div></div><div style="left:25px;top:0px;width:22px;height:15px;overflow:hidden;border-right:1px solid #d4d0c8;"></div><div style="left:47px;top:0px;width:75px;height:15px;overflow:hidden;border-right:1px solid #d4d0c8;"><svg style="position:absolute;left:2px;top:1px" width="13" height="13" viewBox="0 0 13 13"><path d="M0.5 3l2.5-2.5 3 3 3-3 2.5 2.5-3 3 3 3-2.5 2.5-3-3-3 3-2.5-2.5 3-3z" fill="#d01820" stroke="#801010" stroke-width="0.8"/></svg><div class="t" style="left:19px;top:0px;color:#000">reject</div></div><div style="left:122px;top:0px;width:194px;height:15px;overflow:hidden;border-right:1px solid #d4d0c8;"><div class="t" style="left:2px;top:0px;color:#000">deny-bgp</div></div><div style="left:316px;top:0px;width:84px;height:15px;overflow:hidden;border-right:1px solid #d4d0c8;"></div><div style="left:400px;top:0px;width:70px;height:15px;overflow:hidden;border-right:1px solid #d4d0c8;"></div><div style="left:470px;top:0px;width:40px;height:15px;overflow:hidden;border-right:1px solid #d4d0c8;"></div><div style="left:510px;top:0px;width:60px;height:15px;overflow:hidden;border-right:1px solid #d4d0c8;"></div><div style="left:570px;top:0px;width:60px;height:15px;overflow:hidden;border-right:1px solid #d4d0c8;"></div><div style="left:630px;top:0px;width:60px;height:15px;overflow:hidden;border-right:1px solid #d4d0c8;"></div></div><div style="left:0px;top:692px;width:660px;height:15px;border-bottom:1px solid #d4d0c8;"><div style="left:0px;top:0px;width:25px;height:15px;overflow:hidden;border-right:1px solid #d4d0c8;"><div class="t" style="left:0px;top:0px;width:22px;text-align:right;color:#000">43</div></div><div style="left:25px;top:0px;width:22px;height:15px;overflow:hidden;border-right:1px solid #d4d0c8;"></div><div style="left:47px;top:0px;width:75px;height:15px;overflow:hidden;border-right:1px solid #d4d0c8;"><svg style="position:absolute;left:2px;top:1px" width="13" height="13" viewBox="0 0 13 13"><path d="M0.5 6l5-5.5v3.5h6v4h-6v4z" fill="url(#gRet)" stroke="#602070" stroke-width="0.7"/><path d="M8 4.5q0-2.5 2.5-3.5" stroke="#802090" stroke-width="1.3" fill="none"/></svg><div class="t" style="left:19px;top:0px;color:#000">return</div></div><div style="left:122px;top:0px;width:194px;height:15px;overflow:hidden;border-right:1px solid #d4d0c8;"><div class="t" style="left:2px;top:0px;color:#000">deny-bgp</div></div><div style="left:316px;top:0px;width:84px;height:15px;overflow:hidden;border-right:1px solid #d4d0c8;"></div><div style="left:400px;top:0px;width:70px;height:15px;overflow:hidden;border-right:1px solid #d4d0c8;"></div><div style="left:470px;top:0px;width:40px;height:15px;overflow:hidden;border-right:1px solid #d4d0c8;"></div><div style="left:510px;top:0px;width:60px;height:15px;overflow:hidden;border-right:1px solid #d4d0c8;"></div><div style="left:570px;top:0px;width:60px;height:15px;overflow:hidden;border-right:1px solid #d4d0c8;"></div><div style="left:630px;top:0px;width:60px;height:15px;overflow:hidden;border-right:1px solid #d4d0c8;"></div></div><div style="left:0px;top:707px;width:660px;height:15px;border-bottom:1px solid #d4d0c8;"><div style="left:0px;top:0px;width:25px;height:15px;overflow:hidden;border-right:1px solid #d4d0c8;"><div class="t" style="left:0px;top:0px;width:22px;text-align:right;color:#000">44</div></div><div style="left:25px;top:0px;width:22px;height:15px;overflow:hidden;border-right:1px solid #d4d0c8;"></div><div style="left:47px;top:0px;width:75px;height:15px;overflow:hidden;border-right:1px solid #d4d0c8;"><svg style="position:absolute;left:2px;top:1px" width="13" height="13" viewBox="0 0 13 13"><path d="M0.5 3l2.5-2.5 3 3 3-3 2.5 2.5-3 3 3 3-2.5 2.5-3-3-3 3-2.5-2.5 3-3z" fill="#d01820" stroke="#801010" stroke-width="0.8"/></svg><div class="t" style="left:19px;top:0px;color:#000">drop</div></div><div style="left:122px;top:0px;width:194px;height:15px;overflow:hidden;border-right:1px solid #d4d0c8;"><div class="t" style="left:2px;top:0px;color:#000">deny-local-destination</div></div><div style="left:316px;top:0px;width:84px;height:15px;overflow:hidden;border-right:1px solid #d4d0c8;"></div><div style="left:400px;top:0px;width:70px;height:15px;overflow:hidden;border-right:1px solid #d4d0c8;"></div><div style="left:470px;top:0px;width:40px;height:15px;overflow:hidden;border-right:1px solid #d4d0c8;"></div><div style="left:510px;top:0px;width:60px;height:15px;overflow:hidden;border-right:1px solid #d4d0c8;"></div><div style="left:570px;top:0px;width:60px;height:15px;overflow:hidden;border-right:1px solid #d4d0c8;"></div><div style="left:630px;top:0px;width:60px;height:15px;overflow:hidden;border-right:1px solid #d4d0c8;"></div></div><div style="left:0px;top:722px;width:660px;height:15px;border-bottom:1px solid #d4d0c8;"><div style="left:0px;top:0px;width:25px;height:15px;overflow:hidden;border-right:1px solid #d4d0c8;"><div class="t" style="left:0px;top:0px;width:22px;text-align:right;color:#000">45</div></div><div style="left:25px;top:0px;width:22px;height:15px;overflow:hidden;border-right:1px solid #d4d0c8;"></div><div style="left:47px;top:0px;width:75px;height:15px;overflow:hidden;border-right:1px solid #d4d0c8;"><svg style="position:absolute;left:2px;top:1px" width="13" height="13" viewBox="0 0 13 13"><path d="M0.5 6l5-5.5v3.5h6v4h-6v4z" fill="url(#gRet)" stroke="#602070" stroke-width="0.7"/><path d="M8 4.5q0-2.5 2.5-3.5" stroke="#802090" stroke-width="1.3" fill="none"/></svg><div class="t" style="left:19px;top:0px;color:#000">return</div></div><div style="left:122px;top:0px;width:194px;height:15px;overflow:hidden;border-right:1px solid #d4d0c8;"><div class="t" style="left:2px;top:0px;color:#000">deny-local-destination</div></div><div style="left:316px;top:0px;width:84px;height:15px;overflow:hidden;border-right:1px solid #d4d0c8;"></div><div style="left:400px;top:0px;width:70px;height:15px;overflow:hidden;border-right:1px solid #d4d0c8;"></div><div style="left:470px;top:0px;width:40px;height:15px;overflow:hidden;border-right:1px solid #d4d0c8;"></div><div style="left:510px;top:0px;width:60px;height:15px;overflow:hidden;border-right:1px solid #d4d0c8;"></div><div style="left:570px;top:0px;width:60px;height:15px;overflow:hidden;border-right:1px solid #d4d0c8;"></div><div style="left:630px;top:0px;width:60px;height:15px;overflow:hidden;border-right:1px solid #d4d0c8;"></div></div><div style="left:0px;top:737px;width:660px;height:15px;border-bottom:1px solid #d4d0c8;"><div style="left:0px;top:0px;width:25px;height:15px;overflow:hidden;border-right:1px solid #d4d0c8;"><div class="t" style="left:0px;top:0px;width:22px;text-align:right;color:#000">46</div></div><div style="left:25px;top:0px;width:22px;height:15px;overflow:hidden;border-right:1px solid #d4d0c8;"></div><div style="left:47px;top:0px;width:75px;height:15px;overflow:hidden;border-right:1px solid #d4d0c8;"><svg style="position:absolute;left:2px;top:1px" width="13" height="13" viewBox="0 0 13 13"><path d="M0.5 6l2.5-2.5 2.5 2.5 5-5 2.5 2.5-7.5 7.5z" fill="#30d020" stroke="#20a010" stroke-width="0.8"/></svg><div class="t" style="left:19px;top:0px;color:#000">accept</div></div><div style="left:122px;top:0px;width:194px;height:15px;overflow:hidden;border-right:1px solid #d4d0c8;"><div class="t" style="left:2px;top:0px;color:#000">allow-basic-services</div></div><div style="left:316px;top:0px;width:84px;height:15px;overflow:hidden;border-right:1px solid #d4d0c8;"></div><div style="left:400px;top:0px;width:70px;height:15px;overflow:hidden;border-right:1px solid #d4d0c8;"></div><div style="left:470px;top:0px;width:40px;height:15px;overflow:hidden;border-right:1px solid #d4d0c8;"></div><div style="left:510px;top:0px;width:60px;height:15px;overflow:hidden;border-right:1px solid #d4d0c8;"></div><div style="left:570px;top:0px;width:60px;height:15px;overflow:hidden;border-right:1px solid #d4d0c8;"></div><div style="left:630px;top:0px;width:60px;height:15px;overflow:hidden;border-right:1px solid #d4d0c8;"></div></div><div style="left:0px;top:752px;width:660px;height:15px;border-bottom:1px solid #d4d0c8;"><div style="left:0px;top:0px;width:25px;height:15px;overflow:hidden;border-right:1px solid #d4d0c8;"><div class="t" style="left:0px;top:0px;width:22px;text-align:right;color:#000">47</div></div><div style="left:25px;top:0px;width:22px;height:15px;overflow:hidden;border-right:1px solid #d4d0c8;"></div><div style="left:47px;top:0px;width:75px;height:15px;overflow:hidden;border-right:1px solid #d4d0c8;"><svg style="position:absolute;left:2px;top:1px" width="13" height="13" viewBox="0 0 13 13"><path d="M0.5 6l2.5-2.5 2.5 2.5 5-5 2.5 2.5-7.5 7.5z" fill="#30d020" stroke="#20a010" stroke-width="0.8"/></svg><div class="t" style="left:19px;top:0px;color:#000">accept</div></div><div style="left:122px;top:0px;width:194px;height:15px;overflow:hidden;border-right:1px solid #d4d0c8;"><div class="t" style="left:2px;top:0px;color:#000">allow-basic-services</div></div><div style="left:316px;top:0px;width:84px;height:15px;overflow:hidden;border-right:1px solid #d4d0c8;"></div><div style="left:400px;top:0px;width:70px;height:15px;overflow:hidden;border-right:1px solid #d4d0c8;"></div><div style="left:470px;top:0px;width:40px;height:15px;overflow:hidden;border-right:1px solid #d4d0c8;"></div><div style="left:510px;top:0px;width:60px;height:15px;overflow:hidden;border-right:1px solid #d4d0c8;"></div><div style="left:570px;top:0px;width:60px;height:15px;overflow:hidden;border-right:1px solid #d4d0c8;"></div><div style="left:630px;top:0px;width:60px;height:15px;overflow:hidden;border-right:1px solid #d4d0c8;"></div></div><div style="left:0px;top:767px;width:660px;height:15px;border-bottom:1px solid #d4d0c8;"><div style="left:0px;top:0px;width:25px;height:15px;overflow:hidden;border-right:1px solid #d4d0c8;"><div class="t" style="left:0px;top:0px;width:22px;text-align:right;color:#000">48</div></div><div style="left:25px;top:0px;width:22px;height:15px;overflow:hidden;border-right:1px solid #d4d0c8;"></div><div style="left:47px;top:0px;width:75px;height:15px;overflow:hidden;border-right:1px solid #d4d0c8;"><svg style="position:absolute;left:2px;top:1px" width="13" height="13" viewBox="0 0 13 13"><path d="M0.5 6l5-5.5v3.5h6v4h-6v4z" fill="url(#gRet)" stroke="#602070" stroke-width="0.7"/><path d="M8 4.5q0-2.5 2.5-3.5" stroke="#802090" stroke-width="1.3" fill="none"/></svg><div class="t" style="left:19px;top:0px;color:#000">return</div></div><div style="left:122px;top:0px;width:194px;height:15px;overflow:hidden;border-right:1px solid #d4d0c8;"><div class="t" style="left:2px;top:0px;color:#000">allow-basic-services</div></div><div style="left:316px;top:0px;width:84px;height:15px;overflow:hidden;border-right:1px solid #d4d0c8;"></div><div style="left:400px;top:0px;width:70px;height:15px;overflow:hidden;border-right:1px solid #d4d0c8;"></div><div style="left:470px;top:0px;width:40px;height:15px;overflow:hidden;border-right:1px solid #d4d0c8;"></div><div style="left:510px;top:0px;width:60px;height:15px;overflow:hidden;border-right:1px solid #d4d0c8;"></div><div style="left:570px;top:0px;width:60px;height:15px;overflow:hidden;border-right:1px solid #d4d0c8;"></div><div style="left:630px;top:0px;width:60px;height:15px;overflow:hidden;border-right:1px solid #d4d0c8;"></div></div><div style="left:0px;top:782px;width:660px;height:15px;border-bottom:1px solid #d4d0c8;"><div style="left:0px;top:0px;width:25px;height:15px;overflow:hidden;border-right:1px solid #d4d0c8;"><div class="t" style="left:0px;top:0px;width:22px;text-align:right;color:#000">49</div></div><div style="left:25px;top:0px;width:22px;height:15px;overflow:hidden;border-right:1px solid #d4d0c8;"></div><div style="left:47px;top:0px;width:75px;height:15px;overflow:hidden;border-right:1px solid #d4d0c8;"><svg style="position:absolute;left:2px;top:1px" width="13" height="13" viewBox="0 0 13 13"><path d="M0.5 6l2.5-2.5 2.5 2.5 5-5 2.5 2.5-7.5 7.5z" fill="#30d020" stroke="#20a010" stroke-width="0.8"/></svg><div class="t" style="left:19px;top:0px;color:#000">accept</div></div><div style="left:122px;top:0px;width:194px;height:15px;overflow:hidden;border-right:1px solid #d4d0c8;"><div class="t" style="left:2px;top:0px;color:#000">allow-stun</div></div><div style="left:316px;top:0px;width:84px;height:15px;overflow:hidden;border-right:1px solid #d4d0c8;"></div><div style="left:400px;top:0px;width:70px;height:15px;overflow:hidden;border-right:1px solid #d4d0c8;"></div><div style="left:470px;top:0px;width:40px;height:15px;overflow:hidden;border-right:1px solid #d4d0c8;"></div><div style="left:510px;top:0px;width:60px;height:15px;overflow:hidden;border-right:1px solid #d4d0c8;"></div><div style="left:570px;top:0px;width:60px;height:15px;overflow:hidden;border-right:1px solid #d4d0c8;"></div><div style="left:630px;top:0px;width:60px;height:15px;overflow:hidden;border-right:1px solid #d4d0c8;"></div></div><div style="left:0px;top:797px;width:660px;height:15px;border-bottom:1px solid #d4d0c8;"><div style="left:0px;top:0px;width:25px;height:15px;overflow:hidden;border-right:1px solid #d4d0c8;"><div class="t" style="left:0px;top:0px;width:22px;text-align:right;color:#000">50</div></div><div style="left:25px;top:0px;width:22px;height:15px;overflow:hidden;border-right:1px solid #d4d0c8;"></div><div style="left:47px;top:0px;width:75px;height:15px;overflow:hidden;border-right:1px solid #d4d0c8;"><svg style="position:absolute;left:2px;top:1px" width="13" height="13" viewBox="0 0 13 13"><path d="M0.5 6l2.5-2.5 2.5 2.5 5-5 2.5 2.5-7.5 7.5z" fill="#30d020" stroke="#20a010" stroke-width="0.8"/></svg><div class="t" style="left:19px;top:0px;color:#000">accept</div></div><div style="left:122px;top:0px;width:194px;height:15px;overflow:hidden;border-right:1px solid #d4d0c8;"><div class="t" style="left:2px;top:0px;color:#000">allow-stun</div></div><div style="left:316px;top:0px;width:84px;height:15px;overflow:hidden;border-right:1px solid #d4d0c8;"></div><div style="left:400px;top:0px;width:70px;height:15px;overflow:hidden;border-right:1px solid #d4d0c8;"></div><div style="left:470px;top:0px;width:40px;height:15px;overflow:hidden;border-right:1px solid #d4d0c8;"></div><div style="left:510px;top:0px;width:60px;height:15px;overflow:hidden;border-right:1px solid #d4d0c8;"></div><div style="left:570px;top:0px;width:60px;height:15px;overflow:hidden;border-right:1px solid #d4d0c8;"></div><div style="left:630px;top:0px;width:60px;height:15px;overflow:hidden;border-right:1px solid #d4d0c8;"></div></div><div style="left:0px;top:812px;width:660px;height:15px;border-bottom:1px solid #d4d0c8;"><div style="left:0px;top:0px;width:25px;height:15px;overflow:hidden;border-right:1px solid #d4d0c8;"><div class="t" style="left:0px;top:0px;width:22px;text-align:right;color:#000">51</div></div><div style="left:25px;top:0px;width:22px;height:15px;overflow:hidden;border-right:1px solid #d4d0c8;"></div><div style="left:47px;top:0px;width:75px;height:15px;overflow:hidden;border-right:1px solid #d4d0c8;"><svg style="position:absolute;left:2px;top:1px" width="13" height="13" viewBox="0 0 13 13"><path d="M0.5 6l5-5.5v3.5h6v4h-6v4z" fill="url(#gRet)" stroke="#602070" stroke-width="0.7"/><path d="M8 4.5q0-2.5 2.5-3.5" stroke="#802090" stroke-width="1.3" fill="none"/></svg><div class="t" style="left:19px;top:0px;color:#000">return</div></div><div style="left:122px;top:0px;width:194px;height:15px;overflow:hidden;border-right:1px solid #d4d0c8;"><div class="t" style="left:2px;top:0px;color:#000">allow-stun</div></div><div style="left:316px;top:0px;width:84px;height:15px;overflow:hidden;border-right:1px solid #d4d0c8;"></div><div style="left:400px;top:0px;width:70px;height:15px;overflow:hidden;border-right:1px solid #d4d0c8;"></div><div style="left:470px;top:0px;width:40px;height:15px;overflow:hidden;border-right:1px solid #d4d0c8;"></div><div style="left:510px;top:0px;width:60px;height:15px;overflow:hidden;border-right:1px solid #d4d0c8;"></div><div style="left:570px;top:0px;width:60px;height:15px;overflow:hidden;border-right:1px solid #d4d0c8;"></div><div style="left:630px;top:0px;width:60px;height:15px;overflow:hidden;border-right:1px solid #d4d0c8;"></div></div><div style="left:0px;top:827px;width:660px;height:15px;border-bottom:1px solid #d4d0c8;"><div style="left:0px;top:0px;width:25px;height:15px;overflow:hidden;border-right:1px solid #d4d0c8;"><div class="t" style="left:0px;top:0px;width:22px;text-align:right;color:#000">52</div></div><div style="left:25px;top:0px;width:22px;height:15px;overflow:hidden;border-right:1px solid #d4d0c8;"></div><div style="left:47px;top:0px;width:75px;height:15px;overflow:hidden;border-right:1px solid #d4d0c8;"><svg style="position:absolute;left:2px;top:1px" width="13" height="13" viewBox="0 0 13 13"><path d="M0.5 6l2.5-2.5 2.5 2.5 5-5 2.5 2.5-7.5 7.5z" fill="#30d020" stroke="#20a010" stroke-width="0.8"/></svg><div class="t" style="left:19px;top:0px;color:#000">accept</div></div><div style="left:122px;top:0px;width:194px;height:15px;overflow:hidden;border-right:1px solid #d4d0c8;"><div class="t" style="left:2px;top:0px;color:#000">allow-dingtalk</div></div><div style="left:316px;top:0px;width:84px;height:15px;overflow:hidden;border-right:1px solid #d4d0c8;"></div><div style="left:400px;top:0px;width:70px;height:15px;overflow:hidden;border-right:1px solid #d4d0c8;"></div><div style="left:470px;top:0px;width:40px;height:15px;overflow:hidden;border-right:1px solid #d4d0c8;"></div><div style="left:510px;top:0px;width:60px;height:15px;overflow:hidden;border-right:1px solid #d4d0c8;"></div><div style="left:570px;top:0px;width:60px;height:15px;overflow:hidden;border-right:1px solid #d4d0c8;"></div><div style="left:630px;top:0px;width:60px;height:15px;overflow:hidden;border-right:1px solid #d4d0c8;"></div></div><div style="left:0px;top:842px;width:660px;height:15px;border-bottom:1px solid #d4d0c8;"><div style="left:0px;top:0px;width:25px;height:15px;overflow:hidden;border-right:1px solid #d4d0c8;"><div class="t" style="left:0px;top:0px;width:22px;text-align:right;color:#000">53</div></div><div style="left:25px;top:0px;width:22px;height:15px;overflow:hidden;border-right:1px solid #d4d0c8;"></div><div style="left:47px;top:0px;width:75px;height:15px;overflow:hidden;border-right:1px solid #d4d0c8;"><svg style="position:absolute;left:2px;top:1px" width="13" height="13" viewBox="0 0 13 13"><path d="M0.5 6l5-5.5v3.5h6v4h-6v4z" fill="url(#gRet)" stroke="#602070" stroke-width="0.7"/><path d="M8 4.5q0-2.5 2.5-3.5" stroke="#802090" stroke-width="1.3" fill="none"/></svg><div class="t" style="left:19px;top:0px;color:#000">return</div></div><div style="left:122px;top:0px;width:194px;height:15px;overflow:hidden;border-right:1px solid #d4d0c8;"><div class="t" style="left:2px;top:0px;color:#000">allow-dingtalk</div></div><div style="left:316px;top:0px;width:84px;height:15px;overflow:hidden;border-right:1px solid #d4d0c8;"></div><div style="left:400px;top:0px;width:70px;height:15px;overflow:hidden;border-right:1px solid #d4d0c8;"></div><div style="left:470px;top:0px;width:40px;height:15px;overflow:hidden;border-right:1px solid #d4d0c8;"></div><div style="left:510px;top:0px;width:60px;height:15px;overflow:hidden;border-right:1px solid #d4d0c8;"></div><div style="left:570px;top:0px;width:60px;height:15px;overflow:hidden;border-right:1px solid #d4d0c8;"></div><div style="left:630px;top:0px;width:60px;height:15px;overflow:hidden;border-right:1px solid #d4d0c8;"></div></div><div style="left:0px;top:857px;width:660px;height:15px;border-bottom:1px solid #d4d0c8;"><div style="left:0px;top:0px;width:25px;height:15px;overflow:hidden;border-right:1px solid #d4d0c8;"><div class="t" style="left:0px;top:0px;width:22px;text-align:right;color:#000">54</div></div><div style="left:25px;top:0px;width:22px;height:15px;overflow:hidden;border-right:1px solid #d4d0c8;"></div><div style="left:47px;top:0px;width:75px;height:15px;overflow:hidden;border-right:1px solid #d4d0c8;"><svg style="position:absolute;left:2px;top:1px" width="13" height="13" viewBox="0 0 13 13"><path d="M0.5 6l2.5-2.5 2.5 2.5 5-5 2.5 2.5-7.5 7.5z" fill="#30d020" stroke="#20a010" stroke-width="0.8"/></svg><div class="t" style="left:19px;top:0px;color:#000">accept</div></div><div style="left:122px;top:0px;width:194px;height:15px;overflow:hidden;border-right:1px solid #d4d0c8;"><div class="t" style="left:2px;top:0px;color:#000">allow-dingtalk</div></div><div style="left:316px;top:0px;width:84px;height:15px;overflow:hidden;border-right:1px solid #d4d0c8;"></div><div style="left:400px;top:0px;width:70px;height:15px;overflow:hidden;border-right:1px solid #d4d0c8;"></div><div style="left:470px;top:0px;width:40px;height:15px;overflow:hidden;border-right:1px solid #d4d0c8;"></div><div style="left:510px;top:0px;width:60px;height:15px;overflow:hidden;border-right:1px solid #d4d0c8;"></div><div style="left:570px;top:0px;width:60px;height:15px;overflow:hidden;border-right:1px solid #d4d0c8;"></div><div style="left:630px;top:0px;width:60px;height:15px;overflow:hidden;border-right:1px solid #d4d0c8;"></div></div></div><div style="left:663px;top:79px;width:14px;height:859px;background:#bdb9b1;border-left:1px solid #808080"></div><div style="left:677px;top:22px;width:7px;height:980px;background:#d4d0c8"></div><div style="left:678px;top:22px;width:1px;height:980px;background:#808080"></div><div style="left:680px;top:22px;width:1px;height:980px;background:#808080"></div><div style="left:3px;top:938px;width:661px;height:15px;background:#bdb9b1;border-top:1px solid #808080"><div style="left:0px;top:0px;width:15px;height:14px;background:#d4d0c8;border-right:1px solid #808080;box-shadow:inset 1px 1px 0 #fff"><svg style="position:absolute;left:4px;top:2px" width="7" height="9" viewBox="0 0 7 9"><path d="M0.5 4.5L4 0.5V3H6.5V6H4V8.5Z" fill="#000"/></svg></div><div style="left:15px;top:0px;width:322px;height:14px;background:#d4d0c8;border-right:1px solid #808080;box-shadow:inset 1px 1px 0 #fff"></div></div><div style="left:3px;top:953px;width:680px;height:21px;background:#d4d0c8;border-top:1px solid #808080;border-left:1px solid #808080;box-shadow:inset 1px 1px 0 #fff"><div class="t" style="left:2px;top:2px;">350 items</div></div></div>
<div class="win" style="left:1266px;top:77px;width:700px;height:511px"><div style="left:1px;top:1px;width:696px;height:21px;background:#aaa69e"><div class="t" style="left:4px;top:5px;color:#f4f4f4">Interface List</div></div><div style="left:4px;top:24px;width:61px;height:25px;background:#d4d0c8;border-top:1px solid #fff;border-left:1px solid #fff;border-right:1px solid #808080;z-index:2"><div class="t" style="left:0px;top:5px;width:59px;text-align:center">Interface</div></div><div style="left:65px;top:27px;width:77px;height:22px;background:#c4c0b8;border-top:1px solid #e8e4dc;border-right:1px solid #a8a49c"><div class="t" style="left:0px;top:4px;width:76px;text-align:center">Interface List</div></div><div style="left:143px;top:27px;width:54px;height:22px;background:#c4c0b8;border-top:1px solid #e8e4dc;border-right:1px solid #a8a49c"><div class="t" style="left:0px;top:4px;width:53px;text-align:center">Ethernet</div></div><div style="left:198px;top:27px;width:71px;height:22px;background:#c4c0b8;border-top:1px solid #e8e4dc;border-right:1px solid #a8a49c"><div class="t" style="left:0px;top:4px;width:70px;text-align:center">EoIP Tunnel</div></div><div style="left:270px;top:27px;width:58px;height:22px;background:#c4c0b8;border-top:1px solid #e8e4dc;border-right:1px solid #a8a49c"><div class="t" style="left:0px;top:4px;width:57px;text-align:center">IP Tunnel</div></div><div style="left:329px;top:27px;width:68px;height:22px;background:#c4c0b8;border-top:1px solid #e8e4dc;border-right:1px solid #a8a49c"><div class="t" style="left:0px;top:4px;width:67px;text-align:center">GRE Tunnel</div></div><div style="left:398px;top:27px;width:40px;height:22px;background:#c4c0b8;border-top:1px solid #e8e4dc;border-right:1px solid #a8a49c"><div class="t" style="left:0px;top:4px;width:39px;text-align:center">VLAN</div></div><div style="left:439px;top:27px;width:40px;height:22px;background:#c4c0b8;border-top:1px solid #e8e4dc;border-right:1px solid #a8a49c"><div class="t" style="left:0px;top:4px;width:39px;text-align:center">VRRP</div></div><div style="left:480px;top:27px;width:52px;height:22px;background:#c4c0b8;border-top:1px solid #e8e4dc;border-right:1px solid #a8a49c"><div class="t" style="left:0px;top:4px;width:51px;text-align:center">Bonding</div></div><div style="left:533px;top:27px;width:30px;height:22px;background:#c4c0b8;border-top:1px solid #e8e4dc;border-right:1px solid #a8a49c"><div class="t" style="left:0px;top:4px;width:29px;text-align:center">LTE</div></div><div style="left:2px;top:49px;width:700px;height:458px;border-top:1px solid #fff;border-left:1px solid #fff;border-right:1px solid #808080;border-bottom:1px solid #808080"></div><div style="left:4px;top:53px;width:31px;height:23px;border:1px solid #808080;box-shadow:inset 1px 1px 0 #fff,1px 1px 0 #fff;background:#d4d0c8;"><svg style="position:absolute;left:4px;top:5px" width="13" height="13" viewBox="0 0 13 13"><path d="M4.5 0.5h3v4h4v3h-4v4h-3v-4h-4v-3h4z" fill="#0000ff" stroke="#000" stroke-width="1"/></svg><svg style="position:absolute;left:19px;top:9px" width="8" height="6" viewBox="0 0 8 6"><path d="M0 0.5h7l-3.5 4z" fill="#000"/></svg></div><div style="left:38px;top:53px;width:22px;height:23px;border:1px solid #808080;box-shadow:inset 1px 1px 0 #fff,1px 1px 0 #fff;background:#d4d0c8;"><svg style="position:absolute;left:3px;top:5px" width="13" height="13" viewBox="0 0 13 13"><rect x="1.5" y="4.5" width="10" height="3" fill="#e8e4dc" stroke="#9a968e"/></svg></div><div style="left:68px;top:53px;width:22px;height:23px;border:1px solid #808080;box-shadow:inset 1px 1px 0 #fff,1px 1px 0 #fff;background:#d4d0c8;"><svg style="position:absolute;left:3px;top:5px" width="13" height="13" viewBox="0 0 13 13"><path d="M1 6.5l3 3 7-7" fill="none" stroke="#8a867e" stroke-width="3.6"/><path d="M1 6.5l3 3 7-7" fill="none" stroke="#f0ece4" stroke-width="1.6"/></svg></div><div style="left:93px;top:53px;width:22px;height:23px;border:1px solid #808080;box-shadow:inset 1px 1px 0 #fff,1px 1px 0 #fff;background:#d4d0c8;"><svg style="position:absolute;left:3px;top:5px" width="13" height="13" viewBox="0 0 13 13"><path d="M2 2l9 9M11 2l-9 9" fill="none" stroke="#8a867e" stroke-width="3.6"/><path d="M2 2l9 9M11 2l-9 9" fill="none" stroke="#f0ece4" stroke-width="1.6"/></svg></div><div style="left:123px;top:53px;width:22px;height:23px;border:1px solid #808080;box-shadow:inset 1px 1px 0 #fff,1px 1px 0 #fff;background:#d4d0c8;"><svg style="position:absolute;left:3px;top:5px" width="13" height="13" viewBox="0 0 13 13"><path d="M0.5 4.5l3-3h9v9h-12z" fill="#ece8e0" stroke="#8a867e"/><path d="M5 4.5h2M8 4.5h2M5 6.5h5" stroke="#8a867e"/></svg></div><div style="left:153px;top:53px;width:22px;height:23px;border:1px solid #808080;box-shadow:inset 1px 1px 0 #fff,1px 1px 0 #fff;background:#d4d0c8;"><svg style="position:absolute;left:3px;top:5px" width="13" height="13" viewBox="0 0 13 13"><path d="M0.5 1.5h12l-4.5 5v5h-3v-5z" fill="url(#gFunnel)" stroke="#000" stroke-width="1"/></svg></div><div style="left:183px;top:53px;width:99px;height:23px;border:1px solid #808080;box-shadow:inset 1px 1px 0 #fff,1px 1px 0 #fff;background:#d4d0c8;"><div class="t" style="left:0;top:3px;width:97px;text-align:center;color:#000">Detect Internet</div></div><div style="left:633px;top:56px;width:60px;height:18px;background:#fff;border:1px solid #808080;box-shadow:1px 1px 0 #fff"><div class="t" style="left:2px;top:0px;font-style:italic;color:#8a867e;">Find</div></div><div class="lv" style="left:4px;top:79px;width:700px;height:389px"><div style="left:0px;top:0px;width:27px;height:17px;background:#d4d0c8;border-right:1px solid #808080;border-bottom:1px solid #808080;box-shadow:inset 1px 1px 0 #fff"><div class="t" style="left:2px;top:2px;width:22px;text-align:left"></div></div><div style="left:27px;top:0px;width:166px;height:17px;background:#d4d0c8;border-right:1px solid #808080;border-bottom:1px solid #808080;box-shadow:inset 1px 1px 0 #fff"><div class="t" style="left:2px;top:2px;width:161px;text-align:left">Name</div></div><svg style="position:absolute;left:182px;top:3px" width="10" height="10" viewBox="0 0 10 10"><path d="M4.5 0.5l4 8h-8z" fill="none" stroke="#fff"/><path d="M4.5 0.5l-4 8" stroke="#909090" fill="none"/></svg><div style="left:193px;top:0px;width:120px;height:17px;background:#d4d0c8;border-right:1px solid #808080;border-bottom:1px solid #808080;box-shadow:inset 1px 1px 0 #fff"><div class="t" style="left:2px;top:2px;width:115px;text-align:left">Type</div></div><div style="left:313px;top:0px;width:70px;height:17px;background:#d4d0c8;border-right:1px solid #808080;border-bottom:1px solid #808080;box-shadow:inset 1px 1px 0 #fff"><div class="t" style="left:2px;top:2px;width:65px;text-align:left">Actual MTU</div></div><div style="left:383px;top:0px;width:50px;height:17px;background:#d4d0c8;border-right:1px solid #808080;border-bottom:1px solid #808080;box-shadow:inset 1px 1px 0 #fff"><div class="t" style="left:2px;top:2px;width:45px;text-align:left">L2 MTU</div></div><div style="left:433px;top:0px;width:120px;height:17px;background:#d4d0c8;border-right:1px solid #808080;border-bottom:1px solid #808080;box-shadow:inset 1px 1px 0 #fff"><div class="t" style="left:2px;top:2px;width:115px;text-align:left">Tx</div></div><div style="left:553px;top:0px;width:119px;height:17px;background:#d4d0c8;border-right:1px solid #808080;border-bottom:1px solid #808080;box-shadow:inset 1px 1px 0 #fff"><div class="t" style="left:2px;top:2px;width:114px;text-align:left">Rx</div></div><div style="left:672px;top:0px;width:28px;height:17px;background:#d4d0c8;border-bottom:1px solid #808080;box-shadow:inset 1px 1px 0 #fff"></div><div style="left:0px;top:17px;width:700px;height:15px;border-bottom:1px solid #d4d0c8;"><div style="left:0px;top:0px;width:27px;height:15px;overflow:hidden;border-right:1px solid #d4d0c8;"><div class="t" style="left:2px;top:0px;color:#000">R</div></div><div style="left:27px;top:0px;width:166px;height:15px;overflow:hidden;border-right:1px solid #d4d0c8;"><svg style="position:absolute;left:2px;top:1px" width="13" height="13" viewBox="0 0 13 13"><path d="M4.5 0.8L1.2 3.6V8.4L4.5 11.2M7.5 0.8L10.8 3.6V8.4L7.5 11.2" stroke="url(#gBond)" stroke-width="2.4" fill="none" stroke-linejoin="round"/><path d="M1 6H11" stroke="url(#gBond)" stroke-width="2.2"/><rect x="1" y="3" width="3" height="6" fill="url(#gBond)"/><rect x="8" y="3" width="3" height="6" fill="url(#gBond)"/><circle cx="2.6" cy="4.2" r="0.75" fill="#fff"/><circle cx="2.6" cy="7.8" r="0.75" fill="#fff"/><circle cx="9.4" cy="4.2" r="0.75" fill="#fff"/><circle cx="9.4" cy="7.8" r="0.75" fill="#fff"/></svg><div class="t" style="left:19px;top:0px;color:#000">bagg1</div></div><div style="left:193px;top:0px;width:120px;height:15px;overflow:hidden;border-right:1px solid #d4d0c8;"><div class="t" style="left:2px;top:0px;color:#000">Bonding</div></div><div style="left:313px;top:0px;width:70px;height:15px;overflow:hidden;border-right:1px solid #d4d0c8;"><div class="t" style="left:0px;top:0px;width:67px;text-align:right;color:#000">1500</div></div><div style="left:383px;top:0px;width:50px;height:15px;overflow:hidden;border-right:1px solid #d4d0c8;"><div class="t" style="left:0px;top:0px;width:47px;text-align:right;color:#000">1580</div></div><div style="left:433px;top:0px;width:120px;height:15px;overflow:hidden;border-right:1px solid #d4d0c8;"><div class="t" style="left:0px;top:0px;width:117px;text-align:right;color:#000">187.9 kbps</div></div><div style="left:553px;top:0px;width:119px;height:15px;overflow:hidden;border-right:1px solid #d4d0c8;"><div class="t" style="left:0px;top:0px;width:116px;text-align:right;color:#000">18.0 kbps</div></div></div><div style="left:0px;top:32px;width:700px;height:15px;border-bottom:1px solid #d4d0c8;"><div style="left:0px;top:0px;width:27px;height:15px;overflow:hidden;border-right:1px solid #d4d0c8;"><div class="t" style="left:2px;top:0px;color:#000">R</div></div><div style="left:27px;top:0px;width:166px;height:15px;overflow:hidden;border-right:1px solid #d4d0c8;"><svg style="position:absolute;left:18px;top:1px" width="13" height="13" viewBox="0 0 13 13"><path d="M4.5 0.8L1.2 3.6V8.4L4.5 11.2M7.5 0.8L10.8 3.6V8.4L7.5 11.2" stroke="url(#gBond)" stroke-width="2.4" fill="none" stroke-linejoin="round"/><path d="M1 6H11" stroke="url(#gBond)" stroke-width="2.2"/><rect x="1" y="3" width="3" height="6" fill="url(#gBond)"/><rect x="8" y="3" width="3" height="6" fill="url(#gBond)"/><circle cx="2.6" cy="4.2" r="0.75" fill="#fff"/><circle cx="2.6" cy="7.8" r="0.75" fill="#fff"/><circle cx="9.4" cy="4.2" r="0.75" fill="#fff"/><circle cx="9.4" cy="7.8" r="0.75" fill="#fff"/></svg><div class="t" style="left:35px;top:0px;color:#000">gst-gnb1-usrwd-1</div></div><div style="left:193px;top:0px;width:120px;height:15px;overflow:hidden;border-right:1px solid #d4d0c8;"><div class="t" style="left:2px;top:0px;color:#000">VLAN</div></div><div style="left:313px;top:0px;width:70px;height:15px;overflow:hidden;border-right:1px solid #d4d0c8;"><div class="t" style="left:0px;top:0px;width:67px;text-align:right;color:#000">1500</div></div><div style="left:383px;top:0px;width:50px;height:15px;overflow:hidden;border-right:1px solid #d4d0c8;"><div class="t" style="left:0px;top:0px;width:47px;text-align:right;color:#000">1576</div></div><div style="left:433px;top:0px;width:120px;height:15px;overflow:hidden;border-right:1px solid #d4d0c8;"><div class="t" style="left:0px;top:0px;width:117px;text-align:right;color:#000">544 bps</div></div><div style="left:553px;top:0px;width:119px;height:15px;overflow:hidden;border-right:1px solid #d4d0c8;"><div class="t" style="left:0px;top:0px;width:116px;text-align:right;color:#000">0 bps</div></div></div><div style="left:0px;top:47px;width:700px;height:15px;border-bottom:1px solid #d4d0c8;"><div style="left:0px;top:0px;width:27px;height:15px;overflow:hidden;border-right:1px solid #d4d0c8;"><div class="t" style="left:2px;top:0px;color:#000">R</div></div><div style="left:27px;top:0px;width:166px;height:15px;overflow:hidden;border-right:1px solid #d4d0c8;"><svg style="position:absolute;left:18px;top:1px" width="13" height="13" viewBox="0 0 13 13"><path d="M4.5 0.8L1.2 3.6V8.4L4.5 11.2M7.5 0.8L10.8 3.6V8.4L7.5 11.2" stroke="url(#gBond)" stroke-width="2.4" fill="none" stroke-linejoin="round"/><path d="M1 6H11" stroke="url(#gBond)" stroke-width="2.2"/><rect x="1" y="3" width="3" height="6" fill="url(#gBond)"/><rect x="8" y="3" width="3" height="6" fill="url(#gBond)"/><circle cx="2.6" cy="4.2" r="0.75" fill="#fff"/><circle cx="2.6" cy="7.8" r="0.75" fill="#fff"/><circle cx="9.4" cy="4.2" r="0.75" fill="#fff"/><circle cx="9.4" cy="7.8" r="0.75" fill="#fff"/></svg><div class="t" style="left:35px;top:0px;color:#000">gst-gnb1-usrwl-1</div></div><div style="left:193px;top:0px;width:120px;height:15px;overflow:hidden;border-right:1px solid #d4d0c8;"><div class="t" style="left:2px;top:0px;color:#000">VLAN</div></div><div style="left:313px;top:0px;width:70px;height:15px;overflow:hidden;border-right:1px solid #d4d0c8;"><div class="t" style="left:0px;top:0px;width:67px;text-align:right;color:#000">1500</div></div><div style="left:383px;top:0px;width:50px;height:15px;overflow:hidden;border-right:1px solid #d4d0c8;"><div class="t" style="left:0px;top:0px;width:47px;text-align:right;color:#000">1576</div></div><div style="left:433px;top:0px;width:120px;height:15px;overflow:hidden;border-right:1px solid #d4d0c8;"><div class="t" style="left:0px;top:0px;width:117px;text-align:right;color:#000">544 bps</div></div><div style="left:553px;top:0px;width:119px;height:15px;overflow:hidden;border-right:1px solid #d4d0c8;"><div class="t" style="left:0px;top:0px;width:116px;text-align:right;color:#000">0 bps</div></div></div><div style="left:0px;top:62px;width:700px;height:15px;border-bottom:1px solid #d4d0c8;"><div style="left:0px;top:0px;width:27px;height:15px;overflow:hidden;border-right:1px solid #d4d0c8;"><div class="t" style="left:2px;top:0px;color:#000">R</div></div><div style="left:27px;top:0px;width:166px;height:15px;overflow:hidden;border-right:1px solid #d4d0c8;"><svg style="position:absolute;left:18px;top:1px" width="13" height="13" viewBox="0 0 13 13"><path d="M4.5 0.8L1.2 3.6V8.4L4.5 11.2M7.5 0.8L10.8 3.6V8.4L7.5 11.2" stroke="url(#gBond)" stroke-width="2.4" fill="none" stroke-linejoin="round"/><path d="M1 6H11" stroke="url(#gBond)" stroke-width="2.2"/><rect x="1" y="3" width="3" height="6" fill="url(#gBond)"/><rect x="8" y="3" width="3" height="6" fill="url(#gBond)"/><circle cx="2.6" cy="4.2" r="0.75" fill="#fff"/><circle cx="2.6" cy="7.8" r="0.75" fill="#fff"/><circle cx="9.4" cy="4.2" r="0.75" fill="#fff"/><circle cx="9.4" cy="7.8" r="0.75" fill="#fff"/></svg><div class="t" style="left:35px;top:0px;color:#000">sly-gnb1-admwd-1</div></div><div style="left:193px;top:0px;width:120px;height:15px;overflow:hidden;border-right:1px solid #d4d0c8;"><div class="t" style="left:2px;top:0px;color:#000">VLAN</div></div><div style="left:313px;top:0px;width:70px;height:15px;overflow:hidden;border-right:1px solid #d4d0c8;"><div class="t" style="left:0px;top:0px;width:67px;text-align:right;color:#000">1500</div></div><div style="left:383px;top:0px;width:50px;height:15px;overflow:hidden;border-right:1px solid #d4d0c8;"><div class="t" style="left:0px;top:0px;width:47px;text-align:right;color:#000">1576</div></div><div style="left:433px;top:0px;width:120px;height:15px;overflow:hidden;border-right:1px solid #d4d0c8;"><div class="t" style="left:0px;top:0px;width:117px;text-align:right;color:#000">181.4 kbps</div></div><div style="left:553px;top:0px;width:119px;height:15px;overflow:hidden;border-right:1px solid #d4d0c8;"><div class="t" style="left:0px;top:0px;width:116px;text-align:right;color:#000">15.8 kbps</div></div></div><div style="left:0px;top:77px;width:700px;height:15px;border-bottom:1px solid #d4d0c8;"><div style="left:0px;top:0px;width:27px;height:15px;overflow:hidden;border-right:1px solid #d4d0c8;"><div class="t" style="left:2px;top:0px;color:#000">R</div></div><div style="left:27px;top:0px;width:166px;height:15px;overflow:hidden;border-right:1px solid #d4d0c8;"><svg style="position:absolute;left:18px;top:1px" width="13" height="13" viewBox="0 0 13 13"><path d="M4.5 0.8L1.2 3.6V8.4L4.5 11.2M7.5 0.8L10.8 3.6V8.4L7.5 11.2" stroke="url(#gBond)" stroke-width="2.4" fill="none" stroke-linejoin="round"/><path d="M1 6H11" stroke="url(#gBond)" stroke-width="2.2"/><rect x="1" y="3" width="3" height="6" fill="url(#gBond)"/><rect x="8" y="3" width="3" height="6" fill="url(#gBond)"/><circle cx="2.6" cy="4.2" r="0.75" fill="#fff"/><circle cx="2.6" cy="7.8" r="0.75" fill="#fff"/><circle cx="9.4" cy="4.2" r="0.75" fill="#fff"/><circle cx="9.4" cy="7.8" r="0.75" fill="#fff"/></svg><div class="t" style="left:35px;top:0px;color:#000">sly-gnb1-admwl-1</div></div><div style="left:193px;top:0px;width:120px;height:15px;overflow:hidden;border-right:1px solid #d4d0c8;"><div class="t" style="left:2px;top:0px;color:#000">VLAN</div></div><div style="left:313px;top:0px;width:70px;height:15px;overflow:hidden;border-right:1px solid #d4d0c8;"><div class="t" style="left:0px;top:0px;width:67px;text-align:right;color:#000">1500</div></div><div style="left:383px;top:0px;width:50px;height:15px;overflow:hidden;border-right:1px solid #d4d0c8;"><div class="t" style="left:0px;top:0px;width:47px;text-align:right;color:#000">1576</div></div><div style="left:433px;top:0px;width:120px;height:15px;overflow:hidden;border-right:1px solid #d4d0c8;"><div class="t" style="left:0px;top:0px;width:117px;text-align:right;color:#000">544 bps</div></div><div style="left:553px;top:0px;width:119px;height:15px;overflow:hidden;border-right:1px solid #d4d0c8;"><div class="t" style="left:0px;top:0px;width:116px;text-align:right;color:#000">0 bps</div></div></div><div style="left:0px;top:92px;width:700px;height:15px;border-bottom:1px solid #d4d0c8;"><div style="left:0px;top:0px;width:27px;height:15px;overflow:hidden;border-right:1px solid #d4d0c8;"><div class="t" style="left:2px;top:0px;color:#000">R</div></div><div style="left:27px;top:0px;width:166px;height:15px;overflow:hidden;border-right:1px solid #d4d0c8;"><svg style="position:absolute;left:18px;top:1px" width="13" height="13" viewBox="0 0 13 13"><path d="M4.5 0.8L1.2 3.6V8.4L4.5 11.2M7.5 0.8L10.8 3.6V8.4L7.5 11.2" stroke="url(#gBond)" stroke-width="2.4" fill="none" stroke-linejoin="round"/><path d="M1 6H11" stroke="url(#gBond)" stroke-width="2.2"/><rect x="1" y="3" width="3" height="6" fill="url(#gBond)"/><rect x="8" y="3" width="3" height="6" fill="url(#gBond)"/><circle cx="2.6" cy="4.2" r="0.75" fill="#fff"/><circle cx="2.6" cy="7.8" r="0.75" fill="#fff"/><circle cx="9.4" cy="4.2" r="0.75" fill="#fff"/><circle cx="9.4" cy="7.8" r="0.75" fill="#fff"/></svg><div class="t" style="left:35px;top:0px;color:#000">sly-gnb1-svcint-2</div></div><div style="left:193px;top:0px;width:120px;height:15px;overflow:hidden;border-right:1px solid #d4d0c8;"><div class="t" style="left:2px;top:0px;color:#000">VLAN</div></div><div style="left:313px;top:0px;width:70px;height:15px;overflow:hidden;border-right:1px solid #d4d0c8;"><div class="t" style="left:0px;top:0px;width:67px;text-align:right;color:#000">1500</div></div><div style="left:383px;top:0px;width:50px;height:15px;overflow:hidden;border-right:1px solid #d4d0c8;"><div class="t" style="left:0px;top:0px;width:47px;text-align:right;color:#000">1576</div></div><div style="left:433px;top:0px;width:120px;height:15px;overflow:hidden;border-right:1px solid #d4d0c8;"><div class="t" style="left:0px;top:0px;width:117px;text-align:right;color:#000">2.1 kbps</div></div><div style="left:553px;top:0px;width:119px;height:15px;overflow:hidden;border-right:1px solid #d4d0c8;"><div class="t" style="left:0px;top:0px;width:116px;text-align:right;color:#000">1344 bps</div></div></div><div style="left:0px;top:107px;width:700px;height:15px;border-bottom:1px solid #d4d0c8;"><div style="left:0px;top:0px;width:27px;height:15px;overflow:hidden;border-right:1px solid #d4d0c8;"><div class="t" style="left:2px;top:0px;color:#000">R</div></div><div style="left:27px;top:0px;width:166px;height:15px;overflow:hidden;border-right:1px solid #d4d0c8;"><svg style="position:absolute;left:18px;top:1px" width="13" height="13" viewBox="0 0 13 13"><path d="M4.5 0.8L1.2 3.6V8.4L4.5 11.2M7.5 0.8L10.8 3.6V8.4L7.5 11.2" stroke="url(#gBond)" stroke-width="2.4" fill="none" stroke-linejoin="round"/><path d="M1 6H11" stroke="url(#gBond)" stroke-width="2.2"/><rect x="1" y="3" width="3" height="6" fill="url(#gBond)"/><rect x="8" y="3" width="3" height="6" fill="url(#gBond)"/><circle cx="2.6" cy="4.2" r="0.75" fill="#fff"/><circle cx="2.6" cy="7.8" r="0.75" fill="#fff"/><circle cx="9.4" cy="4.2" r="0.75" fill="#fff"/><circle cx="9.4" cy="7.8" r="0.75" fill="#fff"/></svg><div class="t" style="left:35px;top:0px;color:#000">sly-gnb1-usrwd-1</div></div><div style="left:193px;top:0px;width:120px;height:15px;overflow:hidden;border-right:1px solid #d4d0c8;"><div class="t" style="left:2px;top:0px;color:#000">VLAN</div></div><div style="left:313px;top:0px;width:70px;height:15px;overflow:hidden;border-right:1px solid #d4d0c8;"><div class="t" style="left:0px;top:0px;width:67px;text-align:right;color:#000">1500</div></div><div style="left:383px;top:0px;width:50px;height:15px;overflow:hidden;border-right:1px solid #d4d0c8;"><div class="t" style="left:0px;top:0px;width:47px;text-align:right;color:#000">1576</div></div><div style="left:433px;top:0px;width:120px;height:15px;overflow:hidden;border-right:1px solid #d4d0c8;"><div class="t" style="left:0px;top:0px;width:117px;text-align:right;color:#000">544 bps</div></div><div style="left:553px;top:0px;width:119px;height:15px;overflow:hidden;border-right:1px solid #d4d0c8;"><div class="t" style="left:0px;top:0px;width:116px;text-align:right;color:#000">0 bps</div></div></div><div style="left:0px;top:122px;width:700px;height:15px;border-bottom:1px solid #d4d0c8;"><div style="left:0px;top:0px;width:27px;height:15px;overflow:hidden;border-right:1px solid #d4d0c8;"><div class="t" style="left:2px;top:0px;color:#000">R</div></div><div style="left:27px;top:0px;width:166px;height:15px;overflow:hidden;border-right:1px solid #d4d0c8;"><svg style="position:absolute;left:18px;top:1px" width="13" height="13" viewBox="0 0 13 13"><path d="M4.5 0.8L1.2 3.6V8.4L4.5 11.2M7.5 0.8L10.8 3.6V8.4L7.5 11.2" stroke="url(#gBond)" stroke-width="2.4" fill="none" stroke-linejoin="round"/><path d="M1 6H11" stroke="url(#gBond)" stroke-width="2.2"/><rect x="1" y="3" width="3" height="6" fill="url(#gBond)"/><rect x="8" y="3" width="3" height="6" fill="url(#gBond)"/><circle cx="2.6" cy="4.2" r="0.75" fill="#fff"/><circle cx="2.6" cy="7.8" r="0.75" fill="#fff"/><circle cx="9.4" cy="4.2" r="0.75" fill="#fff"/><circle cx="9.4" cy="7.8" r="0.75" fill="#fff"/></svg><div class="t" style="left:35px;top:0px;color:#000">sly-gnb1-usrwl-1</div></div><div style="left:193px;top:0px;width:120px;height:15px;overflow:hidden;border-right:1px solid #d4d0c8;"><div class="t" style="left:2px;top:0px;color:#000">VLAN</div></div><div style="left:313px;top:0px;width:70px;height:15px;overflow:hidden;border-right:1px solid #d4d0c8;"><div class="t" style="left:0px;top:0px;width:67px;text-align:right;color:#000">1500</div></div><div style="left:383px;top:0px;width:50px;height:15px;overflow:hidden;border-right:1px solid #d4d0c8;"><div class="t" style="left:0px;top:0px;width:47px;text-align:right;color:#000">1576</div></div><div style="left:433px;top:0px;width:120px;height:15px;overflow:hidden;border-right:1px solid #d4d0c8;"><div class="t" style="left:0px;top:0px;width:117px;text-align:right;color:#000">544 bps</div></div><div style="left:553px;top:0px;width:119px;height:15px;overflow:hidden;border-right:1px solid #d4d0c8;"><div class="t" style="left:0px;top:0px;width:116px;text-align:right;color:#000">0 bps</div></div></div><div style="left:0px;top:137px;width:700px;height:15px;border-bottom:1px solid #d4d0c8;"><div style="left:0px;top:0px;width:27px;height:15px;overflow:hidden;border-right:1px solid #d4d0c8;"><div class="t" style="left:2px;top:0px;color:#000">R</div></div><div style="left:27px;top:0px;width:166px;height:15px;overflow:hidden;border-right:1px solid #d4d0c8;"><svg style="position:absolute;left:2px;top:1px" width="13" height="13" viewBox="0 0 13 13"><path d="M4.5 0.8L1.2 3.6V8.4L4.5 11.2M7.5 0.8L10.8 3.6V8.4L7.5 11.2" stroke="url(#gBond)" stroke-width="2.4" fill="none" stroke-linejoin="round"/><path d="M1 6H11" stroke="url(#gBond)" stroke-width="2.2"/><rect x="1" y="3" width="3" height="6" fill="url(#gBond)"/><rect x="8" y="3" width="3" height="6" fill="url(#gBond)"/><circle cx="2.6" cy="4.2" r="0.75" fill="#fff"/><circle cx="2.6" cy="7.8" r="0.75" fill="#fff"/><circle cx="9.4" cy="4.2" r="0.75" fill="#fff"/><circle cx="9.4" cy="7.8" r="0.75" fill="#fff"/></svg><div class="t" style="left:19px;top:0px;color:#000">bagg2</div></div><div style="left:193px;top:0px;width:120px;height:15px;overflow:hidden;border-right:1px solid #d4d0c8;"><div class="t" style="left:2px;top:0px;color:#000">Bonding</div></div><div style="left:313px;top:0px;width:70px;height:15px;overflow:hidden;border-right:1px solid #d4d0c8;"><div class="t" style="left:0px;top:0px;width:67px;text-align:right;color:#000">1500</div></div><div style="left:383px;top:0px;width:50px;height:15px;overflow:hidden;border-right:1px solid #d4d0c8;"><div class="t" style="left:0px;top:0px;width:47px;text-align:right;color:#000">1580</div></div><div style="left:433px;top:0px;width:120px;height:15px;overflow:hidden;border-right:1px solid #d4d0c8;"><div class="t" style="left:0px;top:0px;width:117px;text-align:right;color:#000">12.8 kbps</div></div><div style="left:553px;top:0px;width:119px;height:15px;overflow:hidden;border-right:1px solid #d4d0c8;"><div class="t" style="left:0px;top:0px;width:116px;text-align:right;color:#000">11.3 kbps</div></div></div><div style="left:0px;top:152px;width:700px;height:15px;border-bottom:1px solid #d4d0c8;"><div style="left:0px;top:0px;width:27px;height:15px;overflow:hidden;border-right:1px solid #d4d0c8;"><div class="t" style="left:2px;top:0px;color:#000">R</div></div><div style="left:27px;top:0px;width:166px;height:15px;overflow:hidden;border-right:1px solid #d4d0c8;"><svg style="position:absolute;left:18px;top:1px" width="13" height="13" viewBox="0 0 13 13"><path d="M4.5 0.8L1.2 3.6V8.4L4.5 11.2M7.5 0.8L10.8 3.6V8.4L7.5 11.2" stroke="url(#gBond)" stroke-width="2.4" fill="none" stroke-linejoin="round"/><path d="M1 6H11" stroke="url(#gBond)" stroke-width="2.2"/><rect x="1" y="3" width="3" height="6" fill="url(#gBond)"/><rect x="8" y="3" width="3" height="6" fill="url(#gBond)"/><circle cx="2.6" cy="4.2" r="0.75" fill="#fff"/><circle cx="2.6" cy="7.8" r="0.75" fill="#fff"/><circle cx="9.4" cy="4.2" r="0.75" fill="#fff"/><circle cx="9.4" cy="7.8" r="0.75" fill="#fff"/></svg><div class="t" style="left:35px;top:0px;color:#000">hom-adm-10</div></div><div style="left:193px;top:0px;width:120px;height:15px;overflow:hidden;border-right:1px solid #d4d0c8;"><div class="t" style="left:2px;top:0px;color:#000">VLAN</div></div><div style="left:313px;top:0px;width:70px;height:15px;overflow:hidden;border-right:1px solid #d4d0c8;"><div class="t" style="left:0px;top:0px;width:67px;text-align:right;color:#000">1500</div></div><div style="left:383px;top:0px;width:50px;height:15px;overflow:hidden;border-right:1px solid #d4d0c8;"><div class="t" style="left:0px;top:0px;width:47px;text-align:right;color:#000">1576</div></div><div style="left:433px;top:0px;width:120px;height:15px;overflow:hidden;border-right:1px solid #d4d0c8;"><div class="t" style="left:0px;top:0px;width:117px;text-align:right;color:#000">544 bps</div></div><div style="left:553px;top:0px;width:119px;height:15px;overflow:hidden;border-right:1px solid #d4d0c8;"><div class="t" style="left:0px;top:0px;width:116px;text-align:right;color:#000">0 bps</div></div></div><div style="left:0px;top:167px;width:700px;height:15px;border-bottom:1px solid #d4d0c8;"><div style="left:0px;top:0px;width:27px;height:15px;overflow:hidden;border-right:1px solid #d4d0c8;"><div class="t" style="left:2px;top:0px;color:#000">R</div></div><div style="left:27px;top:0px;width:166px;height:15px;overflow:hidden;border-right:1px solid #d4d0c8;"><svg style="position:absolute;left:18px;top:1px" width="13" height="13" viewBox="0 0 13 13"><path d="M4.5 0.8L1.2 3.6V8.4L4.5 11.2M7.5 0.8L10.8 3.6V8.4L7.5 11.2" stroke="url(#gBond)" stroke-width="2.4" fill="none" stroke-linejoin="round"/><path d="M1 6H11" stroke="url(#gBond)" stroke-width="2.2"/><rect x="1" y="3" width="3" height="6" fill="url(#gBond)"/><rect x="8" y="3" width="3" height="6" fill="url(#gBond)"/><circle cx="2.6" cy="4.2" r="0.75" fill="#fff"/><circle cx="2.6" cy="7.8" r="0.75" fill="#fff"/><circle cx="9.4" cy="4.2" r="0.75" fill="#fff"/><circle cx="9.4" cy="7.8" r="0.75" fill="#fff"/></svg><div class="t" style="left:35px;top:0px;color:#000">hom-gst-10</div></div><div style="left:193px;top:0px;width:120px;height:15px;overflow:hidden;border-right:1px solid #d4d0c8;"><div class="t" style="left:2px;top:0px;color:#000">VLAN</div></div><div style="left:313px;top:0px;width:70px;height:15px;overflow:hidden;border-right:1px solid #d4d0c8;"><div class="t" style="left:0px;top:0px;width:67px;text-align:right;color:#000">1500</div></div><div style="left:383px;top:0px;width:50px;height:15px;overflow:hidden;border-right:1px solid #d4d0c8;"><div class="t" style="left:0px;top:0px;width:47px;text-align:right;color:#000">1576</div></div><div style="left:433px;top:0px;width:120px;height:15px;overflow:hidden;border-right:1px solid #d4d0c8;"><div class="t" style="left:0px;top:0px;width:117px;text-align:right;color:#000">544 bps</div></div><div style="left:553px;top:0px;width:119px;height:15px;overflow:hidden;border-right:1px solid #d4d0c8;"><div class="t" style="left:0px;top:0px;width:116px;text-align:right;color:#000">0 bps</div></div></div><div style="left:0px;top:182px;width:700px;height:15px;border-bottom:1px solid #d4d0c8;"><div style="left:0px;top:0px;width:27px;height:15px;overflow:hidden;border-right:1px solid #d4d0c8;"><div class="t" style="left:2px;top:0px;color:#000">R</div></div><div style="left:27px;top:0px;width:166px;height:15px;overflow:hidden;border-right:1px solid #d4d0c8;"><svg style="position:absolute;left:18px;top:1px" width="13" height="13" viewBox="0 0 13 13"><path d="M4.5 0.8L1.2 3.6V8.4L4.5 11.2M7.5 0.8L10.8 3.6V8.4L7.5 11.2" stroke="url(#gBond)" stroke-width="2.4" fill="none" stroke-linejoin="round"/><path d="M1 6H11" stroke="url(#gBond)" stroke-width="2.2"/><rect x="1" y="3" width="3" height="6" fill="url(#gBond)"/><rect x="8" y="3" width="3" height="6" fill="url(#gBond)"/><circle cx="2.6" cy="4.2" r="0.75" fill="#fff"/><circle cx="2.6" cy="7.8" r="0.75" fill="#fff"/><circle cx="9.4" cy="4.2" r="0.75" fill="#fff"/><circle cx="9.4" cy="7.8" r="0.75" fill="#fff"/></svg><div class="t" style="left:35px;top:0px;color:#000">hom-mbr-10</div></div><div style="left:193px;top:0px;width:120px;height:15px;overflow:hidden;border-right:1px solid #d4d0c8;"><div class="t" style="left:2px;top:0px;color:#000">VLAN</div></div><div style="left:313px;top:0px;width:70px;height:15px;overflow:hidden;border-right:1px solid #d4d0c8;"><div class="t" style="left:0px;top:0px;width:67px;text-align:right;color:#000">1500</div></div><div style="left:383px;top:0px;width:50px;height:15px;overflow:hidden;border-right:1px solid #d4d0c8;"><div class="t" style="left:0px;top:0px;width:47px;text-align:right;color:#000">1576</div></div><div style="left:433px;top:0px;width:120px;height:15px;overflow:hidden;border-right:1px solid #d4d0c8;"><div class="t" style="left:0px;top:0px;width:117px;text-align:right;color:#000">1848 bps</div></div><div style="left:553px;top:0px;width:119px;height:15px;overflow:hidden;border-right:1px solid #d4d0c8;"><div class="t" style="left:0px;top:0px;width:116px;text-align:right;color:#000">1784 bps</div></div></div><div style="left:0px;top:197px;width:700px;height:15px;border-bottom:1px solid #d4d0c8;"><div style="left:0px;top:0px;width:27px;height:15px;overflow:hidden;border-right:1px solid #d4d0c8;"><div class="t" style="left:2px;top:0px;color:#000">R</div></div><div style="left:27px;top:0px;width:166px;height:15px;overflow:hidden;border-right:1px solid #d4d0c8;"><svg style="position:absolute;left:18px;top:1px" width="13" height="13" viewBox="0 0 13 13"><path d="M4.5 0.8L1.2 3.6V8.4L4.5 11.2M7.5 0.8L10.8 3.6V8.4L7.5 11.2" stroke="url(#gBond)" stroke-width="2.4" fill="none" stroke-linejoin="round"/><path d="M1 6H11" stroke="url(#gBond)" stroke-width="2.2"/><rect x="1" y="3" width="3" height="6" fill="url(#gBond)"/><rect x="8" y="3" width="3" height="6" fill="url(#gBond)"/><circle cx="2.6" cy="4.2" r="0.75" fill="#fff"/><circle cx="2.6" cy="7.8" r="0.75" fill="#fff"/><circle cx="9.4" cy="4.2" r="0.75" fill="#fff"/><circle cx="9.4" cy="7.8" r="0.75" fill="#fff"/></svg><div class="t" style="left:35px;top:0px;color:#000">sly-gnb1-svcint-1</div></div><div style="left:193px;top:0px;width:120px;height:15px;overflow:hidden;border-right:1px solid #d4d0c8;"><div class="t" style="left:2px;top:0px;color:#000">VLAN</div></div><div style="left:313px;top:0px;width:70px;height:15px;overflow:hidden;border-right:1px solid #d4d0c8;"><div class="t" style="left:0px;top:0px;width:67px;text-align:right;color:#000">1500</div></div><div style="left:383px;top:0px;width:50px;height:15px;overflow:hidden;border-right:1px solid #d4d0c8;"><div class="t" style="left:0px;top:0px;width:47px;text-align:right;color:#000">1576</div></div><div style="left:433px;top:0px;width:120px;height:15px;overflow:hidden;border-right:1px solid #d4d0c8;"><div class="t" style="left:0px;top:0px;width:117px;text-align:right;color:#000">8.8 kbps</div></div><div style="left:553px;top:0px;width:119px;height:15px;overflow:hidden;border-right:1px solid #d4d0c8;"><div class="t" style="left:0px;top:0px;width:116px;text-align:right;color:#000">9.1 kbps</div></div></div><div style="left:0px;top:212px;width:700px;height:15px;border-bottom:1px solid #d4d0c8;"><div style="left:0px;top:0px;width:27px;height:15px;overflow:hidden;border-right:1px solid #d4d0c8;"><div class="t" style="left:2px;top:0px;color:#8a867e">X</div></div><div style="left:27px;top:0px;width:166px;height:15px;overflow:hidden;border-right:1px solid #d4d0c8;"><svg style="position:absolute;left:2px;top:1px" width="13" height="13" viewBox="0 0 13 13"><path d="M5 2.2L2 6.5l3 4.3M9 2.2l3 4.3-3 4.3" stroke="#c02838" stroke-width="2" fill="none"/><circle cx="7" cy="6.5" r="2" fill="#202020"/><path d="M7 0.5v2.6M7 9.9v2.6" stroke="#101010" stroke-width="1.6"/></svg><div class="t" style="left:19px;top:0px;color:#8a867e">ether1</div></div><div style="left:193px;top:0px;width:120px;height:15px;overflow:hidden;border-right:1px solid #d4d0c8;"><div class="t" style="left:2px;top:0px;color:#8a867e">Ethernet</div></div><div style="left:313px;top:0px;width:70px;height:15px;overflow:hidden;border-right:1px solid #d4d0c8;"><div class="t" style="left:0px;top:0px;width:67px;text-align:right;color:#8a867e">1500</div></div><div style="left:383px;top:0px;width:50px;height:15px;overflow:hidden;border-right:1px solid #d4d0c8;"><div class="t" style="left:0px;top:0px;width:47px;text-align:right;color:#8a867e">1578</div></div><div style="left:433px;top:0px;width:120px;height:15px;overflow:hidden;border-right:1px solid #d4d0c8;"><div class="t" style="left:0px;top:0px;width:117px;text-align:right;color:#8a867e">0 bps</div></div><div style="left:553px;top:0px;width:119px;height:15px;overflow:hidden;border-right:1px solid #d4d0c8;"><div class="t" style="left:0px;top:0px;width:116px;text-align:right;color:#8a867e">0 bps</div></div></div><div style="left:0px;top:227px;width:700px;height:15px;border-bottom:1px solid #d4d0c8;"><div style="left:0px;top:0px;width:27px;height:15px;overflow:hidden;border-right:1px solid #d4d0c8;"><div class="t" style="left:2px;top:0px;color:#8a867e">X</div></div><div style="left:27px;top:0px;width:166px;height:15px;overflow:hidden;border-right:1px solid #d4d0c8;"><svg style="position:absolute;left:2px;top:1px" width="13" height="13" viewBox="0 0 13 13"><path d="M5 2.2L2 6.5l3 4.3M9 2.2l3 4.3-3 4.3" stroke="#c02838" stroke-width="2" fill="none"/><circle cx="7" cy="6.5" r="2" fill="#202020"/><path d="M7 0.5v2.6M7 9.9v2.6" stroke="#101010" stroke-width="1.6"/></svg><div class="t" style="left:19px;top:0px;color:#8a867e">ether2</div></div><div style="left:193px;top:0px;width:120px;height:15px;overflow:hidden;border-right:1px solid #d4d0c8;"><div class="t" style="left:2px;top:0px;color:#8a867e">Ethernet</div></div><div style="left:313px;top:0px;width:70px;height:15px;overflow:hidden;border-right:1px solid #d4d0c8;"><div class="t" style="left:0px;top:0px;width:67px;text-align:right;color:#8a867e">1500</div></div><div style="left:383px;top:0px;width:50px;height:15px;overflow:hidden;border-right:1px solid #d4d0c8;"><div class="t" style="left:0px;top:0px;width:47px;text-align:right;color:#8a867e">1578</div></div><div style="left:433px;top:0px;width:120px;height:15px;overflow:hidden;border-right:1px solid #d4d0c8;"><div class="t" style="left:0px;top:0px;width:117px;text-align:right;color:#8a867e">0 bps</div></div><div style="left:553px;top:0px;width:119px;height:15px;overflow:hidden;border-right:1px solid #d4d0c8;"><div class="t" style="left:0px;top:0px;width:116px;text-align:right;color:#8a867e">0 bps</div></div></div><div style="left:0px;top:242px;width:700px;height:15px;border-bottom:1px solid #d4d0c8;"><div style="left:0px;top:0px;width:27px;height:15px;overflow:hidden;border-right:1px solid #d4d0c8;"><div class="t" style="left:2px;top:0px;color:#8a867e">X</div></div><div style="left:27px;top:0px;width:166px;height:15px;overflow:hidden;border-right:1px solid #d4d0c8;"><svg style="position:absolute;left:2px;top:1px" width="13" height="13" viewBox="0 0 13 13"><path d="M5 2.2L2 6.5l3 4.3M9 2.2l3 4.3-3 4.3" stroke="#c02838" stroke-width="2" fill="none"/><circle cx="7" cy="6.5" r="2" fill="#202020"/><path d="M7 0.5v2.6M7 9.9v2.6" stroke="#101010" stroke-width="1.6"/></svg><div class="t" style="left:19px;top:0px;color:#8a867e">ether3</div></div><div style="left:193px;top:0px;width:120px;height:15px;overflow:hidden;border-right:1px solid #d4d0c8;"><div class="t" style="left:2px;top:0px;color:#8a867e">Ethernet</div></div><div style="left:313px;top:0px;width:70px;height:15px;overflow:hidden;border-right:1px solid #d4d0c8;"><div class="t" style="left:0px;top:0px;width:67px;text-align:right;color:#8a867e">1500</div></div><div style="left:383px;top:0px;width:50px;height:15px;overflow:hidden;border-right:1px solid #d4d0c8;"><div class="t" style="left:0px;top:0px;width:47px;text-align:right;color:#8a867e">1578</div></div><div style="left:433px;top:0px;width:120px;height:15px;overflow:hidden;border-right:1px solid #d4d0c8;"><div class="t" style="left:0px;top:0px;width:117px;text-align:right;color:#8a867e">0 bps</div></div><div style="left:553px;top:0px;width:119px;height:15px;overflow:hidden;border-right:1px solid #d4d0c8;"><div class="t" style="left:0px;top:0px;width:116px;text-align:right;color:#8a867e">0 bps</div></div></div><div style="left:0px;top:257px;width:700px;height:15px;border-bottom:1px solid #d4d0c8;"><div style="left:0px;top:0px;width:27px;height:15px;overflow:hidden;border-right:1px solid #d4d0c8;"><div class="t" style="left:2px;top:0px;color:#8a867e">X</div></div><div style="left:27px;top:0px;width:166px;height:15px;overflow:hidden;border-right:1px solid #d4d0c8;"><svg style="position:absolute;left:2px;top:1px" width="13" height="13" viewBox="0 0 13 13"><path d="M5 2.2L2 6.5l3 4.3M9 2.2l3 4.3-3 4.3" stroke="#c02838" stroke-width="2" fill="none"/><circle cx="7" cy="6.5" r="2" fill="#202020"/><path d="M7 0.5v2.6M7 9.9v2.6" stroke="#101010" stroke-width="1.6"/></svg><div class="t" style="left:19px;top:0px;color:#8a867e">ether4</div></div><div style="left:193px;top:0px;width:120px;height:15px;overflow:hidden;border-right:1px solid #d4d0c8;"><div class="t" style="left:2px;top:0px;color:#8a867e">Ethernet</div></div><div style="left:313px;top:0px;width:70px;height:15px;overflow:hidden;border-right:1px solid #d4d0c8;"><div class="t" style="left:0px;top:0px;width:67px;text-align:right;color:#8a867e">1500</div></div><div style="left:383px;top:0px;width:50px;height:15px;overflow:hidden;border-right:1px solid #d4d0c8;"><div class="t" style="left:0px;top:0px;width:47px;text-align:right;color:#8a867e">1578</div></div><div style="left:433px;top:0px;width:120px;height:15px;overflow:hidden;border-right:1px solid #d4d0c8;"><div class="t" style="left:0px;top:0px;width:117px;text-align:right;color:#8a867e">0 bps</div></div><div style="left:553px;top:0px;width:119px;height:15px;overflow:hidden;border-right:1px solid #d4d0c8;"><div class="t" style="left:0px;top:0px;width:116px;text-align:right;color:#8a867e">0 bps</div></div></div><div style="left:0px;top:272px;width:700px;height:15px;border-bottom:1px solid #d4d0c8;"><div style="left:0px;top:0px;width:27px;height:15px;overflow:hidden;border-right:1px solid #d4d0c8;"><div class="t" style="left:2px;top:0px;color:#000">RS</div></div><div style="left:27px;top:0px;width:166px;height:15px;overflow:hidden;border-right:1px solid #d4d0c8;"><svg style="position:absolute;left:2px;top:1px" width="13" height="13" viewBox="0 0 13 13"><path d="M5 2.2L2 6.5l3 4.3M9 2.2l3 4.3-3 4.3" stroke="#c02838" stroke-width="2" fill="none"/><circle cx="7" cy="6.5" r="2" fill="#202020"/><path d="M7 0.5v2.6M7 9.9v2.6" stroke="#101010" stroke-width="1.6"/></svg><div class="t" style="left:19px;top:0px;color:#000">ether5</div></div><div style="left:193px;top:0px;width:120px;height:15px;overflow:hidden;border-right:1px solid #d4d0c8;"><div class="t" style="left:2px;top:0px;color:#000">Ethernet</div></div><div style="left:313px;top:0px;width:70px;height:15px;overflow:hidden;border-right:1px solid #d4d0c8;"><div class="t" style="left:0px;top:0px;width:67px;text-align:right;color:#000">1500</div></div><div style="left:383px;top:0px;width:50px;height:15px;overflow:hidden;border-right:1px solid #d4d0c8;"><div class="t" style="left:0px;top:0px;width:47px;text-align:right;color:#000">1580</div></div><div style="left:433px;top:0px;width:120px;height:15px;overflow:hidden;border-right:1px solid #d4d0c8;"><div class="t" style="left:0px;top:0px;width:117px;text-align:right;color:#000">181.6 kbps</div></div><div style="left:553px;top:0px;width:119px;height:15px;overflow:hidden;border-right:1px solid #d4d0c8;"><div class="t" style="left:0px;top:0px;width:116px;text-align:right;color:#000">18.0 kbps</div></div></div><div style="left:0px;top:287px;width:700px;height:15px;border-bottom:1px solid #d4d0c8;"><div style="left:0px;top:0px;width:27px;height:15px;overflow:hidden;border-right:1px solid #d4d0c8;"><div class="t" style="left:2px;top:0px;color:#000">RS</div></div><div style="left:27px;top:0px;width:166px;height:15px;overflow:hidden;border-right:1px solid #d4d0c8;"><svg style="position:absolute;left:2px;top:1px" width="13" height="13" viewBox="0 0 13 13"><path d="M5 2.2L2 6.5l3 4.3M9 2.2l3 4.3-3 4.3" stroke="#c02838" stroke-width="2" fill="none"/><circle cx="7" cy="6.5" r="2" fill="#202020"/><path d="M7 0.5v2.6M7 9.9v2.6" stroke="#101010" stroke-width="1.6"/></svg><div class="t" style="left:19px;top:0px;color:#000">ether6</div></div><div style="left:193px;top:0px;width:120px;height:15px;overflow:hidden;border-right:1px solid #d4d0c8;"><div class="t" style="left:2px;top:0px;color:#000">Ethernet</div></div><div style="left:313px;top:0px;width:70px;height:15px;overflow:hidden;border-right:1px solid #d4d0c8;"><div class="t" style="left:0px;top:0px;width:67px;text-align:right;color:#000">1500</div></div><div style="left:383px;top:0px;width:50px;height:15px;overflow:hidden;border-right:1px solid #d4d0c8;"><div class="t" style="left:0px;top:0px;width:47px;text-align:right;color:#000">1580</div></div><div style="left:433px;top:0px;width:120px;height:15px;overflow:hidden;border-right:1px solid #d4d0c8;"><div class="t" style="left:0px;top:0px;width:117px;text-align:right;color:#000">6.2 kbps</div></div><div style="left:553px;top:0px;width:119px;height:15px;overflow:hidden;border-right:1px solid #d4d0c8;"><div class="t" style="left:0px;top:0px;width:116px;text-align:right;color:#000">0 bps</div></div></div><div style="left:0px;top:302px;width:700px;height:15px;border-bottom:1px solid #d4d0c8;"><div style="left:0px;top:0px;width:27px;height:15px;overflow:hidden;border-right:1px solid #d4d0c8;"><div class="t" style="left:2px;top:0px;color:#000">R</div></div><div style="left:27px;top:0px;width:166px;height:15px;overflow:hidden;border-right:1px solid #d4d0c8;"><svg style="position:absolute;left:2px;top:1px" width="13" height="13" viewBox="0 0 13 13"><path d="M5 2.2L2 6.5l3 4.3M9 2.2l3 4.3-3 4.3" stroke="#c02838" stroke-width="2" fill="none"/><circle cx="7" cy="6.5" r="2" fill="#202020"/><path d="M7 0.5v2.6M7 9.9v2.6" stroke="#101010" stroke-width="1.6"/></svg><div class="t" style="left:19px;top:0px;color:#000">ether7</div></div><div style="left:193px;top:0px;width:120px;height:15px;overflow:hidden;border-right:1px solid #d4d0c8;"><div class="t" style="left:2px;top:0px;color:#000">Ethernet</div></div><div style="left:313px;top:0px;width:70px;height:15px;overflow:hidden;border-right:1px solid #d4d0c8;"><div class="t" style="left:0px;top:0px;width:67px;text-align:right;color:#000">1500</div></div><div style="left:383px;top:0px;width:50px;height:15px;overflow:hidden;border-right:1px solid #d4d0c8;"><div class="t" style="left:0px;top:0px;width:47px;text-align:right;color:#000">1580</div></div><div style="left:433px;top:0px;width:120px;height:15px;overflow:hidden;border-right:1px solid #d4d0c8;"><div class="t" style="left:0px;top:0px;width:117px;text-align:right;color:#000">6.7 kbps</div></div><div style="left:553px;top:0px;width:119px;height:15px;overflow:hidden;border-right:1px solid #d4d0c8;"><div class="t" style="left:0px;top:0px;width:116px;text-align:right;color:#000">5.7 kbps</div></div></div><div style="left:0px;top:317px;width:700px;height:15px;border-bottom:1px solid #d4d0c8;"><div style="left:0px;top:0px;width:27px;height:15px;overflow:hidden;border-right:1px solid #d4d0c8;"><div class="t" style="left:2px;top:0px;color:#000">RS</div></div><div style="left:27px;top:0px;width:166px;height:15px;overflow:hidden;border-right:1px solid #d4d0c8;"><svg style="position:absolute;left:2px;top:1px" width="13" height="13" viewBox="0 0 13 13"><path d="M5 2.2L2 6.5l3 4.3M9 2.2l3 4.3-3 4.3" stroke="#c02838" stroke-width="2" fill="none"/><circle cx="7" cy="6.5" r="2" fill="#202020"/><path d="M7 0.5v2.6M7 9.9v2.6" stroke="#101010" stroke-width="1.6"/></svg><div class="t" style="left:19px;top:0px;color:#000">ether8</div></div><div style="left:193px;top:0px;width:120px;height:15px;overflow:hidden;border-right:1px solid #d4d0c8;"><div class="t" style="left:2px;top:0px;color:#000">Ethernet</div></div><div style="left:313px;top:0px;width:70px;height:15px;overflow:hidden;border-right:1px solid #d4d0c8;"><div class="t" style="left:0px;top:0px;width:67px;text-align:right;color:#000">1500</div></div><div style="left:383px;top:0px;width:50px;height:15px;overflow:hidden;border-right:1px solid #d4d0c8;"><div class="t" style="left:0px;top:0px;width:47px;text-align:right;color:#000">1580</div></div><div style="left:433px;top:0px;width:120px;height:15px;overflow:hidden;border-right:1px solid #d4d0c8;"><div class="t" style="left:0px;top:0px;width:117px;text-align:right;color:#000">12.8 kbps</div></div><div style="left:553px;top:0px;width:119px;height:15px;overflow:hidden;border-right:1px solid #d4d0c8;"><div class="t" style="left:0px;top:0px;width:116px;text-align:right;color:#000">11.3 kbps</div></div></div><div style="left:0px;top:332px;width:700px;height:15px;border-bottom:1px solid #d4d0c8;"><div style="left:0px;top:0px;width:27px;height:15px;overflow:hidden;border-right:1px solid #d4d0c8;"><div class="t" style="left:2px;top:0px;color:#000">R</div></div><div style="left:27px;top:0px;width:166px;height:15px;overflow:hidden;border-right:1px solid #d4d0c8;"><svg style="position:absolute;left:2px;top:1px" width="13" height="13" viewBox="0 0 13 13"><circle cx="4" cy="3.5" r="2.3" fill="#3a78b8"/><circle cx="9" cy="3.5" r="2.3" fill="#3a78b8"/><path d="M0 11.5a4 4 0 0 1 8 0zM5 11.5a4 4 0 0 1 8 0z" fill="#3a78b8"/></svg><div class="t" style="left:19px;top:0px;color:#000">lo100</div></div><div style="left:193px;top:0px;width:120px;height:15px;overflow:hidden;border-right:1px solid #d4d0c8;"><div class="t" style="left:2px;top:0px;color:#000">Bridge</div></div><div style="left:313px;top:0px;width:70px;height:15px;overflow:hidden;border-right:1px solid #d4d0c8;"><div class="t" style="left:0px;top:0px;width:67px;text-align:right;color:#000">1500</div></div><div style="left:383px;top:0px;width:50px;height:15px;overflow:hidden;border-right:1px solid #d4d0c8;"><div class="t" style="left:0px;top:0px;width:47px;text-align:right;color:#000">65535</div></div><div style="left:433px;top:0px;width:120px;height:15px;overflow:hidden;border-right:1px solid #d4d0c8;"><div class="t" style="left:0px;top:0px;width:117px;text-align:right;color:#000">544 bps</div></div><div style="left:553px;top:0px;width:119px;height:15px;overflow:hidden;border-right:1px solid #d4d0c8;"><div class="t" style="left:0px;top:0px;width:116px;text-align:right;color:#000">0 bps</div></div></div><div style="left:0px;top:347px;width:700px;height:15px;border-bottom:1px solid #d4d0c8;"><div style="left:0px;top:0px;width:27px;height:15px;overflow:hidden;border-right:1px solid #d4d0c8;"><div class="t" style="left:2px;top:0px;color:#8a867e">X</div></div><div style="left:27px;top:0px;width:166px;height:15px;overflow:hidden;border-right:1px solid #d4d0c8;"><svg style="position:absolute;left:2px;top:1px" width="13" height="13" viewBox="0 0 13 13"><path d="M5 2.2L2 6.5l3 4.3M9 2.2l3 4.3-3 4.3" stroke="#c02838" stroke-width="2" fill="none"/><circle cx="7" cy="6.5" r="2" fill="#202020"/><path d="M7 0.5v2.6M7 9.9v2.6" stroke="#101010" stroke-width="1.6"/></svg><div class="t" style="left:19px;top:0px;color:#8a867e">sfp-sfpplus1</div></div><div style="left:193px;top:0px;width:120px;height:15px;overflow:hidden;border-right:1px solid #d4d0c8;"><div class="t" style="left:2px;top:0px;color:#8a867e">Ethernet</div></div><div style="left:313px;top:0px;width:70px;height:15px;overflow:hidden;border-right:1px solid #d4d0c8;"><div class="t" style="left:0px;top:0px;width:67px;text-align:right;color:#8a867e">1500</div></div><div style="left:383px;top:0px;width:50px;height:15px;overflow:hidden;border-right:1px solid #d4d0c8;"><div class="t" style="left:0px;top:0px;width:47px;text-align:right;color:#8a867e">1580</div></div><div style="left:433px;top:0px;width:120px;height:15px;overflow:hidden;border-right:1px solid #d4d0c8;"><div class="t" style="left:0px;top:0px;width:117px;text-align:right;color:#8a867e">0 bps</div></div><div style="left:553px;top:0px;width:119px;height:15px;overflow:hidden;border-right:1px solid #d4d0c8;"><div class="t" style="left:0px;top:0px;width:116px;text-align:right;color:#8a867e">0 bps</div></div></div><div style="left:0px;top:362px;width:700px;height:15px;border-bottom:1px solid #d4d0c8;"><div style="left:0px;top:0px;width:27px;height:15px;overflow:hidden;border-right:1px solid #d4d0c8;"><div class="t" style="left:2px;top:0px;color:#8a867e">X</div></div><div style="left:27px;top:0px;width:166px;height:15px;overflow:hidden;border-right:1px solid #d4d0c8;"><svg style="position:absolute;left:2px;top:1px" width="13" height="13" viewBox="0 0 13 13"><path d="M5 2.2L2 6.5l3 4.3M9 2.2l3 4.3-3 4.3" stroke="#c02838" stroke-width="2" fill="none"/><circle cx="7" cy="6.5" r="2" fill="#202020"/><path d="M7 0.5v2.6M7 9.9v2.6" stroke="#101010" stroke-width="1.6"/></svg><div class="t" style="left:19px;top:0px;color:#8a867e">sfp1</div></div><div style="left:193px;top:0px;width:120px;height:15px;overflow:hidden;border-right:1px solid #d4d0c8;"><div class="t" style="left:2px;top:0px;color:#8a867e">Ethernet</div></div><div style="left:313px;top:0px;width:70px;height:15px;overflow:hidden;border-right:1px solid #d4d0c8;"><div class="t" style="left:0px;top:0px;width:67px;text-align:right;color:#8a867e">1500</div></div><div style="left:383px;top:0px;width:50px;height:15px;overflow:hidden;border-right:1px solid #d4d0c8;"><div class="t" style="left:0px;top:0px;width:47px;text-align:right;color:#8a867e">1580</div></div><div style="left:433px;top:0px;width:120px;height:15px;overflow:hidden;border-right:1px solid #d4d0c8;"><div class="t" style="left:0px;top:0px;width:117px;text-align:right;color:#8a867e">0 bps</div></div><div style="left:553px;top:0px;width:119px;height:15px;overflow:hidden;border-right:1px solid #d4d0c8;"><div class="t" style="left:0px;top:0px;width:116px;text-align:right;color:#8a867e">0 bps</div></div></div></div><div style="left:4px;top:468px;width:700px;height:15px;background:#bdb9b1;border-top:1px solid #808080"><div style="left:0px;top:0px;width:15px;height:14px;background:#d4d0c8;border-right:1px solid #808080;box-shadow:inset 1px 1px 0 #fff"><svg style="position:absolute;left:4px;top:2px" width="7" height="9" viewBox="0 0 7 9"><path d="M0.5 4.5L4 0.5V3H6.5V6H4V8.5Z" fill="#000"/></svg></div><div style="left:16px;top:0px;width:329px;height:14px;background:#d4d0c8;border-right:1px solid #808080;box-shadow:inset 1px 1px 0 #fff"></div></div><div style="left:4px;top:483px;width:700px;height:22px;background:#d4d0c8;border-top:1px solid #808080;border-left:1px solid #808080;box-shadow:inset 1px 1px 0 #fff"><div class="t" style="left:2px;top:3px;">24 items</div></div></div>
<div class="win" style="left:153px;top:541px;width:696px;height:224px"><div style="left:1px;top:1px;width:692px;height:21px;background:#aaa69e"><div class="t" style="left:4px;top:5px;color:#f4f4f4">BGP</div></div><div style="left:658px;top:4px;width:15px;height:15px;border:1px solid #404040;background:#d4d0c8;box-shadow:inset 1px 1px 0 #fff"><div style="left:2px;top:2px;width:9px;height:9px;border:1px solid #000;border-top-width:2px"></div></div><div style="left:675px;top:4px;width:15px;height:15px;border:1px solid #404040;background:#d4d0c8;box-shadow:inset 1px 1px 0 #fff"><svg style="position:absolute;left:2px;top:2px" width="9" height="9" viewBox="0 0 9 9"><path d="M1 1l7 7M8 1l-7 7" stroke="#000" stroke-width="1.7"/></svg></div><div style="left:6px;top:27px;width:59px;height:22px;background:#c4c0b8;border-top:1px solid #e8e4dc;border-right:1px solid #a8a49c"><div class="t" style="left:0px;top:4px;width:58px;text-align:center">Instances</div></div><div style="left:66px;top:27px;width:37px;height:22px;background:#c4c0b8;border-top:1px solid #e8e4dc;border-right:1px solid #a8a49c"><div class="t" style="left:0px;top:4px;width:36px;text-align:center">VRFs</div></div><div style="left:104px;top:24px;width:43px;height:25px;background:#d4d0c8;border-top:1px solid #fff;border-left:1px solid #fff;border-right:1px solid #808080;z-index:2"><div class="t" style="left:0px;top:5px;width:41px;text-align:center">Peers</div></div><div style="left:147px;top:27px;width:60px;height:22px;background:#c4c0b8;border-top:1px solid #e8e4dc;border-right:1px solid #a8a49c"><div class="t" style="left:0px;top:4px;width:59px;text-align:center">Networks</div></div><div style="left:208px;top:27px;width:72px;height:22px;background:#c4c0b8;border-top:1px solid #e8e4dc;border-right:1px solid #a8a49c"><div class="t" style="left:0px;top:4px;width:71px;text-align:center">Aggregates</div></div><div style="left:281px;top:27px;width:76px;height:22px;background:#c4c0b8;border-top:1px solid #e8e4dc;border-right:1px solid #a8a49c"><div class="t" style="left:0px;top:4px;width:75px;text-align:center">VPN4 Routes</div></div><div style="left:358px;top:27px;width:88px;height:22px;background:#c4c0b8;border-top:1px solid #e8e4dc;border-right:1px solid #a8a49c"><div class="t" style="left:0px;top:4px;width:87px;text-align:center">Advertisements</div></div><div style="left:1px;top:49px;width:691px;height:170px;border-top:1px solid #fff;border-left:1px solid #fff;border-right:1px solid #808080;border-bottom:1px solid #808080"></div><div style="left:4px;top:53px;width:22px;height:23px;border:1px solid #808080;box-shadow:inset 1px 1px 0 #fff,1px 1px 0 #fff;background:#d4d0c8;"><svg style="position:absolute;left:3px;top:5px" width="13" height="13" viewBox="0 0 13 13"><path d="M4.5 0.5h3v4h4v3h-4v4h-3v-4h-4v-3h4z" fill="#0000ff" stroke="#000" stroke-width="1"/></svg></div><div style="left:29px;top:53px;width:22px;height:23px;border:1px solid #808080;box-shadow:inset 1px 1px 0 #fff,1px 1px 0 #fff;background:#d4d0c8;"><svg style="position:absolute;left:3px;top:5px" width="13" height="13" viewBox="0 0 13 13"><rect x="1.5" y="4.5" width="10" height="3" fill="#e8e4dc" stroke="#9a968e"/></svg></div><div style="left:59px;top:53px;width:22px;height:23px;border:1px solid #808080;box-shadow:inset 1px 1px 0 #fff,1px 1px 0 #fff;background:#d4d0c8;"><svg style="position:absolute;left:3px;top:5px" width="13" height="13" viewBox="0 0 13 13"><path d="M1 6.5l3 3 7-7" fill="none" stroke="#8a867e" stroke-width="3.6"/><path d="M1 6.5l3 3 7-7" fill="none" stroke="#f0ece4" stroke-width="1.6"/></svg></div><div style="left:84px;top:53px;width:22px;height:23px;border:1px solid #808080;box-shadow:inset 1px 1px 0 #fff,1px 1px 0 #fff;background:#d4d0c8;"><svg style="position:absolute;left:3px;top:5px" width="13" height="13" viewBox="0 0 13 13"><path d="M2 2l9 9M11 2l-9 9" fill="none" stroke="#8a867e" stroke-width="3.6"/><path d="M2 2l9 9M11 2l-9 9" fill="none" stroke="#f0ece4" stroke-width="1.6"/></svg></div><div style="left:114px;top:53px;width:22px;height:23px;border:1px solid #808080;box-shadow:inset 1px 1px 0 #fff,1px 1px 0 #fff;background:#d4d0c8;"><svg style="position:absolute;left:3px;top:5px" width="13" height="13" viewBox="0 0 13 13"><path d="M0.5 4.5l3-3h9v9h-12z" fill="#ece8e0" stroke="#8a867e"/><path d="M5 4.5h2M8 4.5h2M5 6.5h5" stroke="#8a867e"/></svg></div><div style="left:144px;top:53px;width:22px;height:23px;border:1px solid #808080;box-shadow:inset 1px 1px 0 #fff,1px 1px 0 #fff;background:#d4d0c8;"><svg style="position:absolute;left:3px;top:5px" width="13" height="13" viewBox="0 0 13 13"><path d="M0.5 1.5h12l-4.5 5v5h-3v-5z" fill="url(#gFunnel)" stroke="#000" stroke-width="1"/></svg></div><div style="left:175px;top:53px;width:58px;height:23px;border:1px solid #808080;box-shadow:inset 1px 1px 0 #fff,1px 1px 0 #fff;background:#d4d0c8;"><div class="t" style="left:0;top:3px;width:56px;text-align:center;color:#8a867e">Refresh</div></div><div style="left:236px;top:53px;width:73px;height:23px;border:1px solid #808080;box-shadow:inset 1px 1px 0 #fff,1px 1px 0 #fff;background:#d4d0c8;"><div class="t" style="left:0;top:3px;width:71px;text-align:center;color:#000">Refresh All</div></div><div style="left:313px;top:53px;width:56px;height:23px;border:1px solid #808080;box-shadow:inset 1px 1px 0 #fff,1px 1px 0 #fff;background:#d4d0c8;"><div class="t" style="left:0;top:3px;width:54px;text-align:center;color:#8a867e">Resend</div></div><div style="left:372px;top:53px;width:74px;height:23px;border:1px solid #808080;box-shadow:inset 1px 1px 0 #fff,1px 1px 0 #fff;background:#d4d0c8;"><div class="t" style="left:0;top:3px;width:72px;text-align:center;color:#000">Resend All</div></div><div style="left:634px;top:56px;width:55px;height:18px;background:#fff;border:1px solid #808080;box-shadow:1px 1px 0 #fff"><div class="t" style="left:2px;top:0px;font-style:italic;color:#8a867e;">Find</div></div><div class="lv" style="left:4px;top:79px;width:685px;height:103px"><div style="left:0px;top:0px;width:9px;height:17px;background:#d4d0c8;border-right:1px solid #808080;border-bottom:1px solid #808080;box-shadow:inset 1px 1px 0 #fff"><div class="t" style="left:2px;top:2px;width:4px;text-align:left"></div></div><div style="left:9px;top:0px;width:95px;height:17px;background:#d4d0c8;border-right:1px solid #808080;border-bottom:1px solid #808080;box-shadow:inset 1px 1px 0 #fff"><div class="t" style="left:2px;top:2px;width:90px;text-align:left">Name</div></div><svg style="position:absolute;left:93px;top:3px" width="10" height="10" viewBox="0 0 10 10"><path d="M4.5 0.5l4 8h-8z" fill="none" stroke="#fff"/><path d="M4.5 0.5l-4 8" stroke="#909090" fill="none"/></svg><div style="left:104px;top:0px;width:80px;height:17px;background:#d4d0c8;border-right:1px solid #808080;border-bottom:1px solid #808080;box-shadow:inset 1px 1px 0 #fff"><div class="t" style="left:2px;top:2px;width:75px;text-align:left">Instance</div></div><div style="left:184px;top:0px;width:70px;height:17px;background:#d4d0c8;border-right:1px solid #808080;border-bottom:1px solid #808080;box-shadow:inset 1px 1px 0 #fff"><div class="t" style="left:2px;top:2px;width:65px;text-align:left">Remote Ad...</div></div><div style="left:254px;top:0px;width:70px;height:17px;background:#d4d0c8;border-right:1px solid #808080;border-bottom:1px solid #808080;box-shadow:inset 1px 1px 0 #fff"><div class="t" style="left:2px;top:2px;width:65px;text-align:left">Remote AS</div></div><div style="left:324px;top:0px;width:55px;height:17px;background:#d4d0c8;border-right:1px solid #808080;border-bottom:1px solid #808080;box-shadow:inset 1px 1px 0 #fff"><div class="t" style="left:2px;top:2px;width:50px;text-align:left">Multihop</div></div><div style="left:379px;top:0px;width:72px;height:17px;background:#d4d0c8;border-right:1px solid #808080;border-bottom:1px solid #808080;box-shadow:inset 1px 1px 0 #fff"><div class="t" style="left:2px;top:2px;width:67px;text-align:left">Route Reflect</div></div><div style="left:451px;top:0px;width:48px;height:17px;background:#d4d0c8;border-right:1px solid #808080;border-bottom:1px solid #808080;box-shadow:inset 1px 1px 0 #fff"><div class="t" style="left:2px;top:2px;width:43px;text-align:left">TTL</div></div><div style="left:499px;top:0px;width:81px;height:17px;background:#d4d0c8;border-right:1px solid #808080;border-bottom:1px solid #808080;box-shadow:inset 1px 1px 0 #fff"><div class="t" style="left:2px;top:2px;width:76px;text-align:left">Remote ID</div></div><div style="left:580px;top:0px;width:60px;height:17px;background:#d4d0c8;border-right:1px solid #808080;border-bottom:1px solid #808080;box-shadow:inset 1px 1px 0 #fff"><div class="t" style="left:2px;top:2px;width:55px;text-align:left">Uptime</div></div><div style="left:640px;top:0px;width:29px;height:17px;background:#d4d0c8;border-right:1px solid #808080;border-bottom:1px solid #808080;box-shadow:inset 1px 1px 0 #fff"><div class="t" style="left:2px;top:2px;width:24px;text-align:left">Prefix</div></div><div style="left:669px;top:0px;width:15px;height:17px;background:#d4d0c8;border-right:1px solid #808080;border-bottom:1px solid #808080;box-shadow:inset 1px 1px 0 #fff"><div class="t" style="left:2px;top:2px;width:10px;text-align:left"></div></div><div style="left:684px;top:0px;width:1px;height:17px;background:#d4d0c8;border-bottom:1px solid #808080;box-shadow:inset 1px 1px 0 #fff"></div><div style="left:0px;top:17px;width:685px;height:15px;border-bottom:1px solid #d4d0c8;"><div style="left:0px;top:0px;width:9px;height:15px;overflow:hidden;border-right:1px solid #d4d0c8;"></div><div style="left:9px;top:0px;width:95px;height:15px;overflow:hidden;border-right:1px solid #d4d0c8;"><svg style="position:absolute;left:2px;top:1px" width="13" height="13" viewBox="0 0 13 13"><rect x="0.5" y="0.5" width="4" height="4" fill="#3a88d0" stroke="#205080" stroke-width="0.6"/><rect x="7.5" y="0.5" width="4" height="4" fill="#c01828" stroke="#701018" stroke-width="0.6"/><rect x="0.5" y="7.5" width="4" height="4" fill="#28c020" stroke="#107010" stroke-width="0.6"/><rect x="7.5" y="7.5" width="4" height="4" fill="#e8e020" stroke="#909010" stroke-width="0.6"/></svg><div class="t" style="left:19px;top:0px;color:#000">server13_ipv4</div></div><div style="left:104px;top:0px;width:80px;height:15px;overflow:hidden;border-right:1px solid #d4d0c8;"><div class="t" style="left:2px;top:0px;color:#000">default</div></div><div style="left:184px;top:0px;width:70px;height:15px;overflow:hidden;border-right:1px solid #d4d0c8;"><div class="t" style="left:2px;top:0px;color:#000">10.14.88.68</div></div><div style="left:254px;top:0px;width:70px;height:15px;overflow:hidden;border-right:1px solid #d4d0c8;"><div class="t" style="left:0px;top:0px;width:67px;text-align:right;color:#000">65013</div></div><div style="left:324px;top:0px;width:55px;height:15px;overflow:hidden;border-right:1px solid #d4d0c8;"><div class="t" style="left:2px;top:0px;color:#000">no</div></div><div style="left:379px;top:0px;width:72px;height:15px;overflow:hidden;border-right:1px solid #d4d0c8;"><div class="t" style="left:2px;top:0px;color:#000">no</div></div><div style="left:451px;top:0px;width:48px;height:15px;overflow:hidden;border-right:1px solid #d4d0c8;"><div class="t" style="left:2px;top:0px;color:#000">1</div></div><div style="left:499px;top:0px;width:81px;height:15px;overflow:hidden;border-right:1px solid #d4d0c8;"><div class="t" style="left:2px;top:0px;color:#000">10.12.0.13</div></div><div style="left:580px;top:0px;width:60px;height:15px;overflow:hidden;border-right:1px solid #d4d0c8;"><div class="t" style="left:2px;top:0px;color:#000">9d 01:32...</div></div><div style="left:640px;top:0px;width:44px;height:15px;overflow:hidden;border-right:1px solid #d4d0c8;"></div></div><div style="left:0px;top:32px;width:685px;height:15px;border-bottom:1px solid #d4d0c8;"><div style="left:0px;top:0px;width:9px;height:15px;overflow:hidden;border-right:1px solid #d4d0c8;"></div><div style="left:9px;top:0px;width:95px;height:15px;overflow:hidden;border-right:1px solid #d4d0c8;"><svg style="position:absolute;left:2px;top:1px" width="13" height="13" viewBox="0 0 13 13"><rect x="0.5" y="0.5" width="4" height="4" fill="#3a88d0" stroke="#205080" stroke-width="0.6"/><rect x="7.5" y="0.5" width="4" height="4" fill="#c01828" stroke="#701018" stroke-width="0.6"/><rect x="0.5" y="7.5" width="4" height="4" fill="#28c020" stroke="#107010" stroke-width="0.6"/><rect x="7.5" y="7.5" width="4" height="4" fill="#e8e020" stroke="#909010" stroke-width="0.6"/></svg><div class="t" style="left:19px;top:0px;color:#000">server13_ipv6</div></div><div style="left:104px;top:0px;width:80px;height:15px;overflow:hidden;border-right:1px solid #d4d0c8;"><div class="t" style="left:2px;top:0px;color:#000">default</div></div><div style="left:184px;top:0px;width:70px;height:15px;overflow:hidden;border-right:1px solid #d4d0c8;"><div class="t" style="left:2px;top:0px;color:#000">2a01:cb06:...</div></div><div style="left:254px;top:0px;width:70px;height:15px;overflow:hidden;border-right:1px solid #d4d0c8;"><div class="t" style="left:0px;top:0px;width:67px;text-align:right;color:#000">65013</div></div><div style="left:324px;top:0px;width:55px;height:15px;overflow:hidden;border-right:1px solid #d4d0c8;"><div class="t" style="left:2px;top:0px;color:#000">no</div></div><div style="left:379px;top:0px;width:72px;height:15px;overflow:hidden;border-right:1px solid #d4d0c8;"><div class="t" style="left:2px;top:0px;color:#000">no</div></div><div style="left:451px;top:0px;width:48px;height:15px;overflow:hidden;border-right:1px solid #d4d0c8;"><div class="t" style="left:2px;top:0px;color:#000">1</div></div><div style="left:499px;top:0px;width:81px;height:15px;overflow:hidden;border-right:1px solid #d4d0c8;"><div class="t" style="left:2px;top:0px;color:#000">10.12.0.13</div></div><div style="left:580px;top:0px;width:60px;height:15px;overflow:hidden;border-right:1px solid #d4d0c8;"><div class="t" style="left:2px;top:0px;color:#000">9d 01:32...</div></div><div style="left:640px;top:0px;width:44px;height:15px;overflow:hidden;border-right:1px solid #d4d0c8;"></div></div><div style="left:0px;top:47px;width:685px;height:15px;border-bottom:1px solid #d4d0c8;"><div style="left:0px;top:0px;width:9px;height:15px;overflow:hidden;border-right:1px solid #d4d0c8;"></div><div style="left:9px;top:0px;width:95px;height:15px;overflow:hidden;border-right:1px solid #d4d0c8;"><svg style="position:absolute;left:2px;top:1px" width="13" height="13" viewBox="0 0 13 13"><rect x="0.5" y="0.5" width="4" height="4" fill="#3a88d0" stroke="#205080" stroke-width="0.6"/><rect x="7.5" y="0.5" width="4" height="4" fill="#c01828" stroke="#701018" stroke-width="0.6"/><rect x="0.5" y="7.5" width="4" height="4" fill="#28c020" stroke="#107010" stroke-width="0.6"/><rect x="7.5" y="7.5" width="4" height="4" fill="#e8e020" stroke="#909010" stroke-width="0.6"/></svg><div class="t" style="left:19px;top:0px;color:#000">server70_ipv4</div></div><div style="left:104px;top:0px;width:80px;height:15px;overflow:hidden;border-right:1px solid #d4d0c8;"><div class="t" style="left:2px;top:0px;color:#000">default</div></div><div style="left:184px;top:0px;width:70px;height:15px;overflow:hidden;border-right:1px solid #d4d0c8;"><div class="t" style="left:2px;top:0px;color:#000">10.14.89.69</div></div><div style="left:254px;top:0px;width:70px;height:15px;overflow:hidden;border-right:1px solid #d4d0c8;"><div class="t" style="left:0px;top:0px;width:67px;text-align:right;color:#000">65070</div></div><div style="left:324px;top:0px;width:55px;height:15px;overflow:hidden;border-right:1px solid #d4d0c8;"><div class="t" style="left:2px;top:0px;color:#000">no</div></div><div style="left:379px;top:0px;width:72px;height:15px;overflow:hidden;border-right:1px solid #d4d0c8;"><div class="t" style="left:2px;top:0px;color:#000">no</div></div><div style="left:451px;top:0px;width:48px;height:15px;overflow:hidden;border-right:1px solid #d4d0c8;"><div class="t" style="left:2px;top:0px;color:#000">1</div></div><div style="left:499px;top:0px;width:81px;height:15px;overflow:hidden;border-right:1px solid #d4d0c8;"><div class="t" style="left:2px;top:0px;color:#000">10.12.0.70</div></div><div style="left:580px;top:0px;width:60px;height:15px;overflow:hidden;border-right:1px solid #d4d0c8;"><div class="t" style="left:2px;top:0px;color:#000">9d 01:32...</div></div><div style="left:640px;top:0px;width:44px;height:15px;overflow:hidden;border-right:1px solid #d4d0c8;"></div></div><div style="left:0px;top:62px;width:685px;height:15px;border-bottom:1px solid #d4d0c8;"><div style="left:0px;top:0px;width:9px;height:15px;overflow:hidden;border-right:1px solid #d4d0c8;"></div><div style="left:9px;top:0px;width:95px;height:15px;overflow:hidden;border-right:1px solid #d4d0c8;"><svg style="position:absolute;left:2px;top:1px" width="13" height="13" viewBox="0 0 13 13"><rect x="0.5" y="0.5" width="4" height="4" fill="#3a88d0" stroke="#205080" stroke-width="0.6"/><rect x="7.5" y="0.5" width="4" height="4" fill="#c01828" stroke="#701018" stroke-width="0.6"/><rect x="0.5" y="7.5" width="4" height="4" fill="#28c020" stroke="#107010" stroke-width="0.6"/><rect x="7.5" y="7.5" width="4" height="4" fill="#e8e020" stroke="#909010" stroke-width="0.6"/></svg><div class="t" style="left:19px;top:0px;color:#000">server70_ipv6</div></div><div style="left:104px;top:0px;width:80px;height:15px;overflow:hidden;border-right:1px solid #d4d0c8;"><div class="t" style="left:2px;top:0px;color:#000">default</div></div><div style="left:184px;top:0px;width:70px;height:15px;overflow:hidden;border-right:1px solid #d4d0c8;"><div class="t" style="left:2px;top:0px;color:#000">2a01:cb06:...</div></div><div style="left:254px;top:0px;width:70px;height:15px;overflow:hidden;border-right:1px solid #d4d0c8;"><div class="t" style="left:0px;top:0px;width:67px;text-align:right;color:#000">65070</div></div><div style="left:324px;top:0px;width:55px;height:15px;overflow:hidden;border-right:1px solid #d4d0c8;"><div class="t" style="left:2px;top:0px;color:#000">no</div></div><div style="left:379px;top:0px;width:72px;height:15px;overflow:hidden;border-right:1px solid #d4d0c8;"><div class="t" style="left:2px;top:0px;color:#000">no</div></div><div style="left:451px;top:0px;width:48px;height:15px;overflow:hidden;border-right:1px solid #d4d0c8;"><div class="t" style="left:2px;top:0px;color:#000">1</div></div><div style="left:499px;top:0px;width:81px;height:15px;overflow:hidden;border-right:1px solid #d4d0c8;"><div class="t" style="left:2px;top:0px;color:#000">10.12.0.70</div></div><div style="left:580px;top:0px;width:60px;height:15px;overflow:hidden;border-right:1px solid #d4d0c8;"><div class="t" style="left:2px;top:0px;color:#000">9d 01:32...</div></div><div style="left:640px;top:0px;width:44px;height:15px;overflow:hidden;border-right:1px solid #d4d0c8;"></div></div></div><svg style="position:absolute;left:675px;top:83px" width="12" height="8" viewBox="0 0 12 8"><path d="M1 2h10l-5 5z" fill="#000"/></svg><div style="left:4px;top:182px;width:685px;height:15px;background:#bdb9b1;border-top:1px solid #808080"><div style="left:0px;top:0px;width:15px;height:14px;background:#d4d0c8;border-right:1px solid #808080;box-shadow:inset 1px 1px 0 #fff"><svg style="position:absolute;left:4px;top:2px" width="7" height="9" viewBox="0 0 7 9"><path d="M0.5 4.5L4 0.5V3H6.5V6H4V8.5Z" fill="#000"/></svg></div><div style="left:15px;top:0px;width:568px;height:14px;background:#d4d0c8;border-right:1px solid #808080;box-shadow:inset 1px 1px 0 #fff"></div><div style="left:670px;top:0px;width:15px;height:14px;background:#d4d0c8;border-right:1px solid #808080;box-shadow:inset 1px 1px 0 #fff"><svg style="position:absolute;left:4px;top:2px" width="7" height="9" viewBox="0 0 7 9"><path d="M6.5 4.5L3 0.5V3H0.5V6H3V8.5Z" fill="#000"/></svg></div></div><div style="left:4px;top:197px;width:685px;height:20px;background:#d4d0c8;border-top:1px solid #808080;border-left:1px solid #808080;box-shadow:inset 1px 1px 0 #fff"><div class="t" style="left:2px;top:2px;">4 items</div></div></div>
<div class="win" style="left:151px;top:806px;width:564px;height:244px"><div style="left:1px;top:1px;width:560px;height:21px;background:#5050c8"><div class="t" style="left:4px;top:5px;color:#f4f4f4">IPv6 Route List</div></div><div style="left:0px;top:0px;width:562px;height:1px;background:#7878e8"></div><div style="left:0px;top:0px;width:1px;height:22px;background:#7878e8"></div><div style="left:526px;top:4px;width:15px;height:15px;border:1px solid #404040;background:#d4d0c8;box-shadow:inset 1px 1px 0 #fff"><div style="left:2px;top:2px;width:9px;height:9px;border:1px solid #000;border-top-width:2px"></div></div><div style="left:543px;top:4px;width:15px;height:15px;border:1px solid #404040;background:#d4d0c8;box-shadow:inset 1px 1px 0 #fff"><svg style="position:absolute;left:2px;top:2px" width="9" height="9" viewBox="0 0 9 9"><path d="M1 1l7 7M8 1l-7 7" stroke="#000" stroke-width="1.7"/></svg></div><div style="left:2px;top:25px;width:22px;height:23px;border:1px solid #808080;box-shadow:inset 1px 1px 0 #fff,1px 1px 0 #fff;background:#d4d0c8;"><svg style="position:absolute;left:3px;top:5px" width="13" height="13" viewBox="0 0 13 13"><path d="M4.5 0.5h3v4h4v3h-4v4h-3v-4h-4v-3h4z" fill="#0000ff" stroke="#000" stroke-width="1"/></svg></div><div style="left:27px;top:25px;width:22px;height:23px;border:1px solid #808080;box-shadow:inset 1px 1px 0 #fff,1px 1px 0 #fff;background:#d4d0c8;"><svg style="position:absolute;left:3px;top:5px" width="13" height="13" viewBox="0 0 13 13"><rect x="1.5" y="4.5" width="10" height="3" fill="#e8e4dc" stroke="#9a968e"/></svg></div><div style="left:57px;top:25px;width:22px;height:23px;border:1px solid #808080;box-shadow:inset 1px 1px 0 #fff,1px 1px 0 #fff;background:#d4d0c8;"><svg style="position:absolute;left:3px;top:5px" width="13" height="13" viewBox="0 0 13 13"><path d="M1 6.5l3 3 7-7" fill="none" stroke="#8a867e" stroke-width="3.6"/><path d="M1 6.5l3 3 7-7" fill="none" stroke="#f0ece4" stroke-width="1.6"/></svg></div><div style="left:82px;top:25px;width:22px;height:23px;border:1px solid #808080;box-shadow:inset 1px 1px 0 #fff,1px 1px 0 #fff;background:#d4d0c8;"><svg style="position:absolute;left:3px;top:5px" width="13" height="13" viewBox="0 0 13 13"><path d="M2 2l9 9M11 2l-9 9" fill="none" stroke="#8a867e" stroke-width="3.6"/><path d="M2 2l9 9M11 2l-9 9" fill="none" stroke="#f0ece4" stroke-width="1.6"/></svg></div><div style="left:112px;top:25px;width:22px;height:23px;border:1px solid #808080;box-shadow:inset 1px 1px 0 #fff,1px 1px 0 #fff;background:#d4d0c8;"><svg style="position:absolute;left:3px;top:5px" width="13" height="13" viewBox="0 0 13 13"><path d="M0.5 4.5l3-3h9v9h-12z" fill="#ece8e0" stroke="#8a867e"/><path d="M5 4.5h2M8 4.5h2M5 6.5h5" stroke="#8a867e"/></svg></div><div style="left:142px;top:25px;width:22px;height:23px;border:1px solid #808080;box-shadow:inset 1px 1px 0 #fff,1px 1px 0 #fff;background:#bdb9b1;"><svg style="position:absolute;left:3px;top:5px" width="13" height="13" viewBox="0 0 13 13"><path d="M0.5 1.5h12l-4.5 5v5h-3v-5z" fill="url(#gFunnel)" stroke="#000" stroke-width="1"/></svg></div><div style="left:502px;top:28px;width:56px;height:18px;background:#fff;border:1px solid #808080;box-shadow:1px 1px 0 #fff"><div class="t" style="left:2px;top:0px;font-style:italic;color:#8a867e;">Find</div></div><div style="left:1px;top:51px;width:560px;height:2px;border-top:1px solid #808080;border-bottom:1px solid #fff"></div><div style="left:2px;top:58px;width:129px;height:17px;background:#fff;border:1px solid #808080;box-shadow:1px 1px 0 #fff"><div class="t" style="left:2px;top:0px;color:#000;">BGP</div></div><div style="left:132px;top:58px;width:17px;height:17px;border:1px solid #808080;box-shadow:inset 1px 1px 0 #fff,1px 1px 0 #fff;background:#d4d0c8;"><svg style="position:absolute;left:3px;top:2px" width="10" height="11" viewBox="0 0 10 11"><path d="M1 2h7" stroke="#000" stroke-width="1.4"/><path d="M3.3 3.6h2.4v2.4h2.6L4.5 9.8 0.7 6h2.6z" fill="#000"/></svg></div><div style="left:156px;top:58px;width:17px;height:17px;background:#fff;border:1px solid #808080;box-shadow:1px 1px 0 #fff"><div class="t" style="left:2px;top:0px;color:#000;">is</div></div><div style="left:174px;top:58px;width:17px;height:17px;border:1px solid #808080;box-shadow:inset 1px 1px 0 #fff,1px 1px 0 #fff;background:#d4d0c8;"><svg style="position:absolute;left:3px;top:2px" width="10" height="11" viewBox="0 0 10 11"><path d="M1 2h7" stroke="#000" stroke-width="1.4"/><path d="M3.3 3.6h2.4v2.4h2.6L4.5 9.8 0.7 6h2.6z" fill="#000"/></svg></div><div style="left:198px;top:58px;width:195px;height:17px;background:#fff;border:1px solid #808080;box-shadow:1px 1px 0 #fff"><div class="t" style="left:2px;top:0px;color:#000;">yes</div></div><div style="left:395px;top:58px;width:17px;height:17px;border:1px solid #808080;box-shadow:inset 1px 1px 0 #fff,1px 1px 0 #fff;background:#d4d0c8;"><svg style="position:absolute;left:3px;top:2px" width="10" height="11" viewBox="0 0 10 11"><path d="M1 2h7" stroke="#000" stroke-width="1.4"/><path d="M3.3 3.6h2.4v2.4h2.6L4.5 9.8 0.7 6h2.6z" fill="#000"/></svg></div><div style="left:418px;top:55px;width:22px;height:23px;border:1px solid #808080;box-shadow:inset 1px 1px 0 #fff,1px 1px 0 #fff;background:#d4d0c8;"><svg style="position:absolute;left:5px;top:5px" width="12" height="12" viewBox="0 0 12 12"><path d="M6 1v10M1 6h10" stroke="#000" stroke-width="2"/></svg></div><div style="left:443px;top:55px;width:22px;height:23px;border:1px solid #808080;box-shadow:inset 1px 1px 0 #fff,1px 1px 0 #fff;background:#d4d0c8;"><svg style="position:absolute;left:5px;top:5px" width="12" height="12" viewBox="0 0 12 12"><path d="M1 6h10" stroke="#000" stroke-width="2"/></svg></div><div style="left:474px;top:55px;width:83px;height:23px;background:#d4d0c8;border:1px solid #000;box-shadow:inset 1px 1px 0 #fff,inset -1px -1px 0 #808080"><div class="t" style="left:0;top:4px;width:100%;text-align:center;color:#8a867e">Filter</div></div><div class="lv" style="left:2px;top:84px;width:556px;height:119px"><div style="left:0px;top:0px;width:34px;height:17px;background:#d4d0c8;border-right:1px solid #808080;border-bottom:1px solid #808080;box-shadow:inset 1px 1px 0 #fff"><div class="t" style="left:2px;top:2px;width:29px;text-align:left"></div></div><div style="left:34px;top:0px;width:197px;height:17px;background:#d4d0c8;border-right:1px solid #808080;border-bottom:1px solid #808080;box-shadow:inset 1px 1px 0 #fff"><div class="t" style="left:2px;top:2px;width:192px;text-align:left">Dst. Address</div></div><svg style="position:absolute;left:220px;top:3px" width="10" height="10" viewBox="0 0 10 10"><path d="M4.5 0.5l4 8h-8z" fill="none" stroke="#fff"/><path d="M4.5 0.5l-4 8" stroke="#909090" fill="none"/></svg><div style="left:231px;top:0px;width:301px;height:17px;background:#d4d0c8;border-right:1px solid #808080;border-bottom:1px solid #808080;box-shadow:inset 1px 1px 0 #fff"><div class="t" style="left:2px;top:2px;width:296px;text-align:left">Gateway</div></div><div style="left:532px;top:0px;width:9px;height:17px;background:#d4d0c8;border-right:1px solid #808080;border-bottom:1px solid #808080;box-shadow:inset 1px 1px 0 #fff"><div class="t" style="left:2px;top:2px;width:4px;text-align:left">D</div></div><div style="left:541px;top:0px;width:15px;height:17px;background:#d4d0c8;border-right:1px solid #808080;border-bottom:1px solid #808080;box-shadow:inset 1px 1px 0 #fff"><div class="t" style="left:2px;top:2px;width:10px;text-align:left"></div></div><div style="left:0px;top:17px;width:556px;height:15px;border-bottom:1px solid #d4d0c8;"><div style="left:0px;top:0px;width:34px;height:15px;overflow:hidden;border-right:1px solid #d4d0c8;"><div class="t" style="left:2px;top:0px;color:#4646ff">Db</div></div><div style="left:34px;top:0px;width:197px;height:15px;overflow:hidden;border-right:1px solid #d4d0c8;"><svg style="position:absolute;left:2px;top:1px" width="13" height="13" viewBox="0 0 13 13"><path d="M3.5 1l6 5-6 5z" fill="#28b828" stroke="#106810" stroke-width="0.8"/></svg><div class="t" style="left:19px;top:0px;color:#4646ff">2a01:cb06:414:ff00::1090:1090</div></div><div style="left:231px;top:0px;width:301px;height:15px;overflow:hidden;border-right:1px solid #d4d0c8;"><div class="t" style="left:2px;top:0px;color:#4646ff">fe80::dea6:32ff:fe49:fe3b%sly-gnb1-svcint-2 reachable</div></div><div style="left:532px;top:0px;width:24px;height:15px;overflow:hidden;border-right:1px solid #d4d0c8;"></div><div style="left:0px;top:14px;width:556px;height:1px;border-bottom:1px dotted #505050"></div></div><div style="left:0px;top:32px;width:556px;height:15px;border-bottom:1px solid #d4d0c8;"><div style="left:0px;top:0px;width:34px;height:15px;overflow:hidden;border-right:1px solid #d4d0c8;"><div class="t" style="left:2px;top:0px;color:#000">DAb</div></div><div style="left:34px;top:0px;width:197px;height:15px;overflow:hidden;border-right:1px solid #d4d0c8;"><svg style="position:absolute;left:2px;top:1px" width="13" height="13" viewBox="0 0 13 13"><path d="M3.5 1l6 5-6 5z" fill="#28b828" stroke="#106810" stroke-width="0.8"/></svg><div class="t" style="left:19px;top:0px;color:#000">2a01:cb06:414:ff00::1090:1090</div></div><div style="left:231px;top:0px;width:301px;height:15px;overflow:hidden;border-right:1px solid #d4d0c8;"><div class="t" style="left:2px;top:0px;color:#000">fe80::d63d:7eff:fe05:4691%sly-gnb1-svcint-1 reachable</div></div><div style="left:532px;top:0px;width:24px;height:15px;overflow:hidden;border-right:1px solid #d4d0c8;"></div></div><div style="left:0px;top:47px;width:556px;height:15px;border-bottom:1px solid #d4d0c8;"><div style="left:0px;top:0px;width:34px;height:15px;overflow:hidden;border-right:1px solid #d4d0c8;"><div class="t" style="left:2px;top:0px;color:#000">DAb</div></div><div style="left:34px;top:0px;width:197px;height:15px;overflow:hidden;border-right:1px solid #d4d0c8;"><svg style="position:absolute;left:2px;top:1px" width="13" height="13" viewBox="0 0 13 13"><path d="M3.5 1l6 5-6 5z" fill="#28b828" stroke="#106810" stroke-width="0.8"/></svg><div class="t" style="left:19px;top:0px;color:#000">2a01:cb06:414:ff90::/64</div></div><div style="left:231px;top:0px;width:301px;height:15px;overflow:hidden;border-right:1px solid #d4d0c8;"><div class="t" style="left:2px;top:0px;color:#000">fe80::d63d:7eff:fe05:4691%sly-gnb1-svcint-1 reachable</div></div><div style="left:532px;top:0px;width:24px;height:15px;overflow:hidden;border-right:1px solid #d4d0c8;"></div></div><div style="left:0px;top:62px;width:556px;height:15px;border-bottom:1px solid #d4d0c8;"><div style="left:0px;top:0px;width:34px;height:15px;overflow:hidden;border-right:1px solid #d4d0c8;"><div class="t" style="left:2px;top:0px;color:#000">DAb</div></div><div style="left:34px;top:0px;width:197px;height:15px;overflow:hidden;border-right:1px solid #d4d0c8;"><svg style="position:absolute;left:2px;top:1px" width="13" height="13" viewBox="0 0 13 13"><path d="M3.5 1l6 5-6 5z" fill="#28b828" stroke="#106810" stroke-width="0.8"/></svg><div class="t" style="left:19px;top:0px;color:#000">2a01:cb06:414:ff91::/64</div></div><div style="left:231px;top:0px;width:301px;height:15px;overflow:hidden;border-right:1px solid #d4d0c8;"><div class="t" style="left:2px;top:0px;color:#000">fe80::dea6:32ff:fe49:fe3b%sly-gnb1-svcint-2 reachable</div></div><div style="left:532px;top:0px;width:24px;height:15px;overflow:hidden;border-right:1px solid #d4d0c8;"></div></div><div style="left:0px;top:77px;width:556px;height:15px;border-bottom:1px solid #d4d0c8;"><div style="left:0px;top:0px;width:34px;height:15px;overflow:hidden;border-right:1px solid #d4d0c8;"><div class="t" style="left:2px;top:0px;color:#000">DAb</div></div><div style="left:34px;top:0px;width:197px;height:15px;overflow:hidden;border-right:1px solid #d4d0c8;"><svg style="position:absolute;left:2px;top:1px" width="13" height="13" viewBox="0 0 13 13"><path d="M3.5 1l6 5-6 5z" fill="#28b828" stroke="#106810" stroke-width="0.8"/></svg><div class="t" style="left:19px;top:0px;color:#000">2a01:cb06:414:ffff:13:face:de:caca</div></div><div style="left:231px;top:0px;width:301px;height:15px;overflow:hidden;border-right:1px solid #d4d0c8;"><div class="t" style="left:2px;top:0px;color:#000">fe80::d63d:7eff:fe05:4691%sly-gnb1-svcint-1 reachable</div></div><div style="left:532px;top:0px;width:24px;height:15px;overflow:hidden;border-right:1px solid #d4d0c8;"></div></div><div style="left:0px;top:92px;width:556px;height:15px;border-bottom:1px solid #d4d0c8;"><div style="left:0px;top:0px;width:34px;height:15px;overflow:hidden;border-right:1px solid #d4d0c8;"><div class="t" style="left:2px;top:0px;color:#000">DAb</div></div><div style="left:34px;top:0px;width:197px;height:15px;overflow:hidden;border-right:1px solid #d4d0c8;"><svg style="position:absolute;left:2px;top:1px" width="13" height="13" viewBox="0 0 13 13"><path d="M3.5 1l6 5-6 5z" fill="#28b828" stroke="#106810" stroke-width="0.8"/></svg><div class="t" style="left:19px;top:0px;color:#000">2a01:cb06:414:ffff:70:face:de:caca</div></div><div style="left:231px;top:0px;width:301px;height:15px;overflow:hidden;border-right:1px solid #d4d0c8;"><div class="t" style="left:2px;top:0px;color:#000">fe80::dea6:32ff:fe49:fe3b%sly-gnb1-svcint-2 reachable</div></div><div style="left:532px;top:0px;width:24px;height:15px;overflow:hidden;border-right:1px solid #d4d0c8;"></div></div></div><svg style="position:absolute;left:544px;top:89px" width="12" height="8" viewBox="0 0 12 8"><path d="M1 2h10l-5 5z" fill="#000"/></svg><div style="left:2px;top:203px;width:556px;height:15px;background:#bdb9b1;border-top:1px solid #808080"><div style="left:0px;top:0px;width:15px;height:14px;background:#d4d0c8;border-right:1px solid #808080;box-shadow:inset 1px 1px 0 #fff"><svg style="position:absolute;left:4px;top:2px" width="7" height="9" viewBox="0 0 7 9"><path d="M0.5 4.5L4 0.5V3H6.5V6H4V8.5Z" fill="#000"/></svg></div><div style="left:15px;top:0px;width:370px;height:14px;background:#d4d0c8;border-right:1px solid #808080;box-shadow:inset 1px 1px 0 #fff"></div><div style="left:541px;top:0px;width:15px;height:14px;background:#d4d0c8;border-right:1px solid #808080;box-shadow:inset 1px 1px 0 #fff"><svg style="position:absolute;left:4px;top:2px" width="7" height="9" viewBox="0 0 7 9"><path d="M6.5 4.5L3 0.5V3H0.5V6H3V8.5Z" fill="#000"/></svg></div></div><div style="left:2px;top:218px;width:556px;height:20px;background:#d4d0c8;border-top:1px solid #808080;border-left:1px solid #808080;box-shadow:inset 1px 1px 0 #fff"><div class="t" style="left:2px;top:2px;">6 items out of 22</div></div></div>
<div class="win" style="left:1142px;top:794px;width:778px;height:260px"><div style="left:1px;top:1px;width:774px;height:21px;background:#aaa69e"><div class="t" style="left:4px;top:5px;color:#f4f4f4">Route List</div></div><div style="left:740px;top:4px;width:15px;height:15px;border:1px solid #404040;background:#d4d0c8;box-shadow:inset 1px 1px 0 #fff"><div style="left:2px;top:2px;width:9px;height:9px;border:1px solid #000;border-top-width:2px"></div></div><div style="left:757px;top:4px;width:15px;height:15px;border:1px solid #404040;background:#d4d0c8;box-shadow:inset 1px 1px 0 #fff"><svg style="position:absolute;left:2px;top:2px" width="9" height="9" viewBox="0 0 9 9"><path d="M1 1l7 7M8 1l-7 7" stroke="#000" stroke-width="1.7"/></svg></div><div style="left:4px;top:24px;width:50px;height:25px;background:#d4d0c8;border-top:1px solid #fff;border-left:1px solid #fff;border-right:1px solid #808080;z-index:2"><div class="t" style="left:0px;top:5px;width:48px;text-align:center">Routes</div></div><div style="left:54px;top:27px;width:58px;height:22px;background:#c4c0b8;border-top:1px solid #e8e4dc;border-right:1px solid #a8a49c"><div class="t" style="left:0px;top:4px;width:57px;text-align:center">Nexthops</div></div><div style="left:113px;top:27px;width:39px;height:22px;background:#c4c0b8;border-top:1px solid #e8e4dc;border-right:1px solid #a8a49c"><div class="t" style="left:0px;top:4px;width:38px;text-align:center">Rules</div></div><div style="left:153px;top:27px;width:34px;height:22px;background:#c4c0b8;border-top:1px solid #e8e4dc;border-right:1px solid #a8a49c"><div class="t" style="left:0px;top:4px;width:33px;text-align:center">VRF</div></div><div style="left:2px;top:49px;width:771px;height:207px;border-top:1px solid #fff;border-left:1px solid #fff;border-right:1px solid #808080;border-bottom:1px solid #808080"></div><div style="left:4px;top:53px;width:22px;height:23px;border:1px solid #808080;box-shadow:inset 1px 1px 0 #fff,1px 1px 0 #fff;background:#d4d0c8;"><svg style="position:absolute;left:3px;top:5px" width="13" height="13" viewBox="0 0 13 13"><path d="M4.5 0.5h3v4h4v3h-4v4h-3v-4h-4v-3h4z" fill="#0000ff" stroke="#000" stroke-width="1"/></svg></div><div style="left:29px;top:53px;width:22px;height:23px;border:1px solid #808080;box-shadow:inset 1px 1px 0 #fff,1px 1px 0 #fff;background:#d4d0c8;"><svg style="position:absolute;left:3px;top:5px" width="13" height="13" viewBox="0 0 13 13"><rect x="1.5" y="4.5" width="10" height="3" fill="#e8e4dc" stroke="#9a968e"/></svg></div><div style="left:59px;top:53px;width:22px;height:23px;border:1px solid #808080;box-shadow:inset 1px 1px 0 #fff,1px 1px 0 #fff;background:#d4d0c8;"><svg style="position:absolute;left:3px;top:5px" width="13" height="13" viewBox="0 0 13 13"><path d="M1 6.5l3 3 7-7" fill="none" stroke="#8a867e" stroke-width="3.6"/><path d="M1 6.5l3 3 7-7" fill="none" stroke="#f0ece4" stroke-width="1.6"/></svg></div><div style="left:84px;top:53px;width:22px;height:23px;border:1px solid #808080;box-shadow:inset 1px 1px 0 #fff,1px 1px 0 #fff;background:#d4d0c8;"><svg style="position:absolute;left:3px;top:5px" width="13" height="13" viewBox="0 0 13 13"><path d="M2 2l9 9M11 2l-9 9" fill="none" stroke="#8a867e" stroke-width="3.6"/><path d="M2 2l9 9M11 2l-9 9" fill="none" stroke="#f0ece4" stroke-width="1.6"/></svg></div><div style="left:114px;top:53px;width:22px;height:23px;border:1px solid #808080;box-shadow:inset 1px 1px 0 #fff,1px 1px 0 #fff;background:#d4d0c8;"><svg style="position:absolute;left:3px;top:5px" width="13" height="13" viewBox="0 0 13 13"><path d="M0.5 4.5l3-3h9v9h-12z" fill="#ece8e0" stroke="#8a867e"/><path d="M5 4.5h2M8 4.5h2M5 6.5h5" stroke="#8a867e"/></svg></div><div style="left:144px;top:53px;width:22px;height:23px;border:1px solid #808080;box-shadow:inset 1px 1px 0 #fff,1px 1px 0 #fff;background:#bdb9b1;"><svg style="position:absolute;left:3px;top:5px" width="13" height="13" viewBox="0 0 13 13"><path d="M0.5 1.5h12l-4.5 5v5h-3v-5z" fill="url(#gFunnel)" stroke="#000" stroke-width="1"/></svg></div><div style="left:655px;top:56px;width:55px;height:18px;background:#fff;border:1px solid #808080;box-shadow:1px 1px 0 #fff"><div class="t" style="left:2px;top:0px;font-style:italic;color:#8a867e;">Find</div></div><div style="left:717px;top:56px;width:36px;height:18px;background:#fff;border:1px solid #808080;box-shadow:1px 1px 0 #fff"><div class="t" style="left:2px;top:0px;color:#000;">all</div></div><div style="left:753px;top:56px;width:17px;height:17px;border:1px solid #808080;box-shadow:inset 1px 1px 0 #fff,1px 1px 0 #fff;background:#d4d0c8;"><svg style="position:absolute;left:3px;top:2px" width="10" height="11" viewBox="0 0 10 11"><path d="M1 2h7" stroke="#000" stroke-width="1.4"/><path d="M3.3 3.6h2.4v2.4h2.6L4.5 9.8 0.7 6h2.6z" fill="#000"/></svg></div><div style="left:1px;top:79px;width:780px;height:2px;border-top:1px solid #808080;border-bottom:1px solid #fff"></div><div style="left:5px;top:86px;width:128px;height:17px;background:#fff;border:1px solid #808080;box-shadow:1px 1px 0 #fff"><div class="t" style="left:2px;top:0px;color:#000;">BGP</div></div><div style="left:134px;top:86px;width:17px;height:17px;border:1px solid #808080;box-shadow:inset 1px 1px 0 #fff,1px 1px 0 #fff;background:#d4d0c8;"><svg style="position:absolute;left:3px;top:2px" width="10" height="11" viewBox="0 0 10 11"><path d="M1 2h7" stroke="#000" stroke-width="1.4"/><path d="M3.3 3.6h2.4v2.4h2.6L4.5 9.8 0.7 6h2.6z" fill="#000"/></svg></div><div style="left:158px;top:86px;width:17px;height:17px;background:#fff;border:1px solid #808080;box-shadow:1px 1px 0 #fff"><div class="t" style="left:2px;top:0px;color:#000;">is</div></div><div style="left:177px;top:86px;width:17px;height:17px;border:1px solid #808080;box-shadow:inset 1px 1px 0 #fff,1px 1px 0 #fff;background:#d4d0c8;"><svg style="position:absolute;left:3px;top:2px" width="10" height="11" viewBox="0 0 10 11"><path d="M1 2h7" stroke="#000" stroke-width="1.4"/><path d="M3.3 3.6h2.4v2.4h2.6L4.5 9.8 0.7 6h2.6z" fill="#000"/></svg></div><div style="left:201px;top:86px;width:405px;height:17px;background:#fff;border:1px solid #808080;box-shadow:1px 1px 0 #fff"><div class="t" style="left:2px;top:0px;color:#000;">yes</div></div><div style="left:608px;top:86px;width:17px;height:17px;border:1px solid #808080;box-shadow:inset 1px 1px 0 #fff,1px 1px 0 #fff;background:#d4d0c8;"><svg style="position:absolute;left:3px;top:2px" width="10" height="11" viewBox="0 0 10 11"><path d="M1 2h7" stroke="#000" stroke-width="1.4"/><path d="M3.3 3.6h2.4v2.4h2.6L4.5 9.8 0.7 6h2.6z" fill="#000"/></svg></div><div style="left:632px;top:83px;width:22px;height:23px;border:1px solid #808080;box-shadow:inset 1px 1px 0 #fff,1px 1px 0 #fff;background:#d4d0c8;"><svg style="position:absolute;left:5px;top:5px" width="12" height="12" viewBox="0 0 12 12"><path d="M6 1v10M1 6h10" stroke="#000" stroke-width="2"/></svg></div><div style="left:657px;top:83px;width:22px;height:23px;border:1px solid #808080;box-shadow:inset 1px 1px 0 #fff,1px 1px 0 #fff;background:#d4d0c8;"><svg style="position:absolute;left:5px;top:5px" width="12" height="12" viewBox="0 0 12 12"><path d="M1 6h10" stroke="#000" stroke-width="2"/></svg></div><div style="left:687px;top:83px;width:83px;height:23px;background:#d4d0c8;border:1px solid #000;box-shadow:inset 1px 1px 0 #fff,inset -1px -1px 0 #808080"><div class="t" style="left:0;top:4px;width:100%;text-align:center;color:#8a867e">Filter</div></div><div class="lv" style="left:4px;top:112px;width:767px;height:122px"><div style="left:0px;top:0px;width:39px;height:17px;background:#d4d0c8;border-right:1px solid #808080;border-bottom:1px solid #808080;box-shadow:inset 1px 1px 0 #fff"><div class="t" style="left:2px;top:2px;width:34px;text-align:left"></div></div><div style="left:39px;top:0px;width:100px;height:17px;background:#d4d0c8;border-right:1px solid #808080;border-bottom:1px solid #808080;box-shadow:inset 1px 1px 0 #fff"><div class="t" style="left:2px;top:2px;width:95px;text-align:left">Dst. Address</div></div><svg style="position:absolute;left:128px;top:3px" width="10" height="10" viewBox="0 0 10 10"><path d="M4.5 0.5l4 8h-8z" fill="none" stroke="#fff"/><path d="M4.5 0.5l-4 8" stroke="#909090" fill="none"/></svg><div style="left:139px;top:0px;width:301px;height:17px;background:#d4d0c8;border-right:1px solid #808080;border-bottom:1px solid #808080;box-shadow:inset 1px 1px 0 #fff"><div class="t" style="left:2px;top:2px;width:296px;text-align:left">Gateway</div></div><div style="left:440px;top:0px;width:60px;height:17px;background:#d4d0c8;border-right:1px solid #808080;border-bottom:1px solid #808080;box-shadow:inset 1px 1px 0 #fff"><div class="t" style="left:2px;top:2px;width:55px;text-align:left">Distance</div></div><div style="left:500px;top:0px;width:80px;height:17px;background:#d4d0c8;border-right:1px solid #808080;border-bottom:1px solid #808080;box-shadow:inset 1px 1px 0 #fff"><div class="t" style="left:2px;top:2px;width:75px;text-align:left">Routing Mark</div></div><div style="left:580px;top:0px;width:80px;height:17px;background:#d4d0c8;border-right:1px solid #808080;border-bottom:1px solid #808080;box-shadow:inset 1px 1px 0 #fff"><div class="t" style="left:2px;top:2px;width:75px;text-align:left">Pref. Source</div></div><div style="left:660px;top:0px;width:90px;height:17px;background:#d4d0c8;border-right:1px solid #808080;border-bottom:1px solid #808080;box-shadow:inset 1px 1px 0 #fff"><div class="t" style="left:2px;top:2px;width:85px;text-align:left">BGP AS Path</div></div><div style="left:750px;top:0px;width:15px;height:17px;background:#d4d0c8;border-right:1px solid #808080;border-bottom:1px solid #808080;box-shadow:inset 1px 1px 0 #fff"><div class="t" style="left:2px;top:2px;width:10px;text-align:left"></div></div><div style="left:765px;top:0px;width:2px;height:17px;background:#d4d0c8;border-bottom:1px solid #808080;box-shadow:inset 1px 1px 0 #fff"></div><div style="left:0px;top:17px;width:767px;height:15px;border-bottom:1px solid #d4d0c8;"><div style="left:0px;top:0px;width:39px;height:15px;overflow:hidden;border-right:1px solid #d4d0c8;"><div class="t" style="left:2px;top:0px;color:#000">DAb</div></div><div style="left:39px;top:0px;width:100px;height:15px;overflow:hidden;border-right:1px solid #d4d0c8;"><svg style="position:absolute;left:2px;top:1px" width="13" height="13" viewBox="0 0 13 13"><path d="M3.5 1l6 5-6 5z" fill="#28b828" stroke="#106810" stroke-width="0.8"/></svg><div class="t" style="left:19px;top:0px;color:#000">10.12.0.13</div></div><div style="left:139px;top:0px;width:301px;height:15px;overflow:hidden;border-right:1px solid #d4d0c8;"><div class="t" style="left:2px;top:0px;color:#000">10.14.88.68 reachable sly-gnb1-svcint-1</div></div><div style="left:440px;top:0px;width:60px;height:15px;overflow:hidden;border-right:1px solid #d4d0c8;"><div class="t" style="left:0px;top:0px;width:57px;text-align:right;color:#000">20</div></div><div style="left:500px;top:0px;width:80px;height:15px;overflow:hidden;border-right:1px solid #d4d0c8;"></div><div style="left:580px;top:0px;width:80px;height:15px;overflow:hidden;border-right:1px solid #d4d0c8;"></div><div style="left:660px;top:0px;width:100px;height:15px;overflow:hidden;border-right:1px solid #d4d0c8;"><div class="t" style="left:2px;top:0px;color:#000">65013</div></div><div style="left:760px;top:0px;width:5px;height:15px;overflow:hidden;border-right:1px solid #d4d0c8;"></div></div><div style="left:0px;top:32px;width:767px;height:15px;border-bottom:1px solid #d4d0c8;"><div style="left:0px;top:0px;width:39px;height:15px;overflow:hidden;border-right:1px solid #d4d0c8;"><div class="t" style="left:2px;top:0px;color:#000">DAb</div></div><div style="left:39px;top:0px;width:100px;height:15px;overflow:hidden;border-right:1px solid #d4d0c8;"><svg style="position:absolute;left:2px;top:1px" width="13" height="13" viewBox="0 0 13 13"><path d="M3.5 1l6 5-6 5z" fill="#28b828" stroke="#106810" stroke-width="0.8"/></svg><div class="t" style="left:19px;top:0px;color:#000">10.12.0.70</div></div><div style="left:139px;top:0px;width:301px;height:15px;overflow:hidden;border-right:1px solid #d4d0c8;"><div class="t" style="left:2px;top:0px;color:#000">10.14.89.69 reachable sly-gnb1-svcint-2</div></div><div style="left:440px;top:0px;width:60px;height:15px;overflow:hidden;border-right:1px solid #d4d0c8;"><div class="t" style="left:0px;top:0px;width:57px;text-align:right;color:#000">20</div></div><div style="left:500px;top:0px;width:80px;height:15px;overflow:hidden;border-right:1px solid #d4d0c8;"></div><div style="left:580px;top:0px;width:80px;height:15px;overflow:hidden;border-right:1px solid #d4d0c8;"></div><div style="left:660px;top:0px;width:100px;height:15px;overflow:hidden;border-right:1px solid #d4d0c8;"><div class="t" style="left:2px;top:0px;color:#000">65070</div></div><div style="left:760px;top:0px;width:5px;height:15px;overflow:hidden;border-right:1px solid #d4d0c8;"></div></div><div style="left:0px;top:47px;width:767px;height:15px;border-bottom:1px solid #d4d0c8;"><div style="left:0px;top:0px;width:39px;height:15px;overflow:hidden;border-right:1px solid #d4d0c8;"><div class="t" style="left:2px;top:0px;color:#000">DAb</div></div><div style="left:39px;top:0px;width:100px;height:15px;overflow:hidden;border-right:1px solid #d4d0c8;"><svg style="position:absolute;left:2px;top:1px" width="13" height="13" viewBox="0 0 13 13"><path d="M3.5 1l6 5-6 5z" fill="#28b828" stroke="#106810" stroke-width="0.8"/></svg><div class="t" style="left:19px;top:0px;color:#000">10.12.88.0/24</div></div><div style="left:139px;top:0px;width:301px;height:15px;overflow:hidden;border-right:1px solid #d4d0c8;"><div class="t" style="left:2px;top:0px;color:#000">10.14.88.68 reachable sly-gnb1-svcint-1</div></div><div style="left:440px;top:0px;width:60px;height:15px;overflow:hidden;border-right:1px solid #d4d0c8;"><div class="t" style="left:0px;top:0px;width:57px;text-align:right;color:#000">20</div></div><div style="left:500px;top:0px;width:80px;height:15px;overflow:hidden;border-right:1px solid #d4d0c8;"></div><div style="left:580px;top:0px;width:80px;height:15px;overflow:hidden;border-right:1px solid #d4d0c8;"></div><div style="left:660px;top:0px;width:100px;height:15px;overflow:hidden;border-right:1px solid #d4d0c8;"><div class="t" style="left:2px;top:0px;color:#000">65013</div></div><div style="left:760px;top:0px;width:5px;height:15px;overflow:hidden;border-right:1px solid #d4d0c8;"></div></div><div style="left:0px;top:62px;width:767px;height:15px;border-bottom:1px solid #d4d0c8;"><div style="left:0px;top:0px;width:39px;height:15px;overflow:hidden;border-right:1px solid #d4d0c8;"><div class="t" style="left:2px;top:0px;color:#000">DAb</div></div><div style="left:39px;top:0px;width:100px;height:15px;overflow:hidden;border-right:1px solid #d4d0c8;"><svg style="position:absolute;left:2px;top:1px" width="13" height="13" viewBox="0 0 13 13"><path d="M3.5 1l6 5-6 5z" fill="#28b828" stroke="#106810" stroke-width="0.8"/></svg><div class="t" style="left:19px;top:0px;color:#000">10.12.89.0/24</div></div><div style="left:139px;top:0px;width:301px;height:15px;overflow:hidden;border-right:1px solid #d4d0c8;"><div class="t" style="left:2px;top:0px;color:#000">10.14.89.69 reachable sly-gnb1-svcint-2</div></div><div style="left:440px;top:0px;width:60px;height:15px;overflow:hidden;border-right:1px solid #d4d0c8;"><div class="t" style="left:0px;top:0px;width:57px;text-align:right;color:#000">20</div></div><div style="left:500px;top:0px;width:80px;height:15px;overflow:hidden;border-right:1px solid #d4d0c8;"></div><div style="left:580px;top:0px;width:80px;height:15px;overflow:hidden;border-right:1px solid #d4d0c8;"></div><div style="left:660px;top:0px;width:100px;height:15px;overflow:hidden;border-right:1px solid #d4d0c8;"><div class="t" style="left:2px;top:0px;color:#000">65070</div></div><div style="left:760px;top:0px;width:5px;height:15px;overflow:hidden;border-right:1px solid #d4d0c8;"></div></div><div style="left:0px;top:77px;width:767px;height:15px;border-bottom:1px solid #d4d0c8;"><div style="left:0px;top:0px;width:39px;height:15px;overflow:hidden;border-right:1px solid #d4d0c8;"><div class="t" style="left:2px;top:0px;color:#000">DAb</div></div><div style="left:39px;top:0px;width:100px;height:15px;overflow:hidden;border-right:1px solid #d4d0c8;"><svg style="position:absolute;left:2px;top:1px" width="13" height="13" viewBox="0 0 13 13"><path d="M3.5 1l6 5-6 5z" fill="#28b828" stroke="#106810" stroke-width="0.8"/></svg><div class="t" style="left:19px;top:0px;color:#000">10.90.10.90</div></div><div style="left:139px;top:0px;width:301px;height:15px;overflow:hidden;border-right:1px solid #d4d0c8;"><div class="t" style="left:2px;top:0px;color:#000">10.14.88.68 reachable sly-gnb1-svcint-1</div></div><div style="left:440px;top:0px;width:60px;height:15px;overflow:hidden;border-right:1px solid #d4d0c8;"><div class="t" style="left:0px;top:0px;width:57px;text-align:right;color:#000">20</div></div><div style="left:500px;top:0px;width:80px;height:15px;overflow:hidden;border-right:1px solid #d4d0c8;"></div><div style="left:580px;top:0px;width:80px;height:15px;overflow:hidden;border-right:1px solid #d4d0c8;"></div><div style="left:660px;top:0px;width:100px;height:15px;overflow:hidden;border-right:1px solid #d4d0c8;"><div class="t" style="left:2px;top:0px;color:#000">65013</div></div><div style="left:760px;top:0px;width:5px;height:15px;overflow:hidden;border-right:1px solid #d4d0c8;"></div></div><div style="left:0px;top:92px;width:767px;height:15px;border-bottom:1px solid #d4d0c8;"><div style="left:0px;top:0px;width:39px;height:15px;overflow:hidden;border-right:1px solid #d4d0c8;"><div class="t" style="left:2px;top:0px;color:#4646ff">Db</div></div><div style="left:39px;top:0px;width:100px;height:15px;overflow:hidden;border-right:1px solid #d4d0c8;"><svg style="position:absolute;left:2px;top:1px" width="13" height="13" viewBox="0 0 13 13"><path d="M3.5 1l6 5-6 5z" fill="#28b828" stroke="#106810" stroke-width="0.8"/></svg><div class="t" style="left:19px;top:0px;color:#4646ff">10.90.10.90</div></div><div style="left:139px;top:0px;width:301px;height:15px;overflow:hidden;border-right:1px solid #d4d0c8;"><div class="t" style="left:2px;top:0px;color:#4646ff">10.14.89.69 reachable sly-gnb1-svcint-2</div></div><div style="left:440px;top:0px;width:60px;height:15px;overflow:hidden;border-right:1px solid #d4d0c8;"><div class="t" style="left:0px;top:0px;width:57px;text-align:right;color:#4646ff">20</div></div><div style="left:500px;top:0px;width:80px;height:15px;overflow:hidden;border-right:1px solid #d4d0c8;"></div><div style="left:580px;top:0px;width:80px;height:15px;overflow:hidden;border-right:1px solid #d4d0c8;"></div><div style="left:660px;top:0px;width:100px;height:15px;overflow:hidden;border-right:1px solid #d4d0c8;"><div class="t" style="left:2px;top:0px;color:#4646ff">65000,65070</div></div><div style="left:760px;top:0px;width:5px;height:15px;overflow:hidden;border-right:1px solid #d4d0c8;"></div></div></div><svg style="position:absolute;left:756px;top:117px" width="12" height="8" viewBox="0 0 12 8"><path d="M1 2h10l-5 5z" fill="#000"/></svg><div style="left:4px;top:234px;width:767px;height:21px;background:#d4d0c8;border-top:1px solid #808080;border-left:1px solid #808080;box-shadow:inset 1px 1px 0 #fff"><div class="t" style="left:2px;top:2px;">6 items out of 36</div></div></div></body></html>
